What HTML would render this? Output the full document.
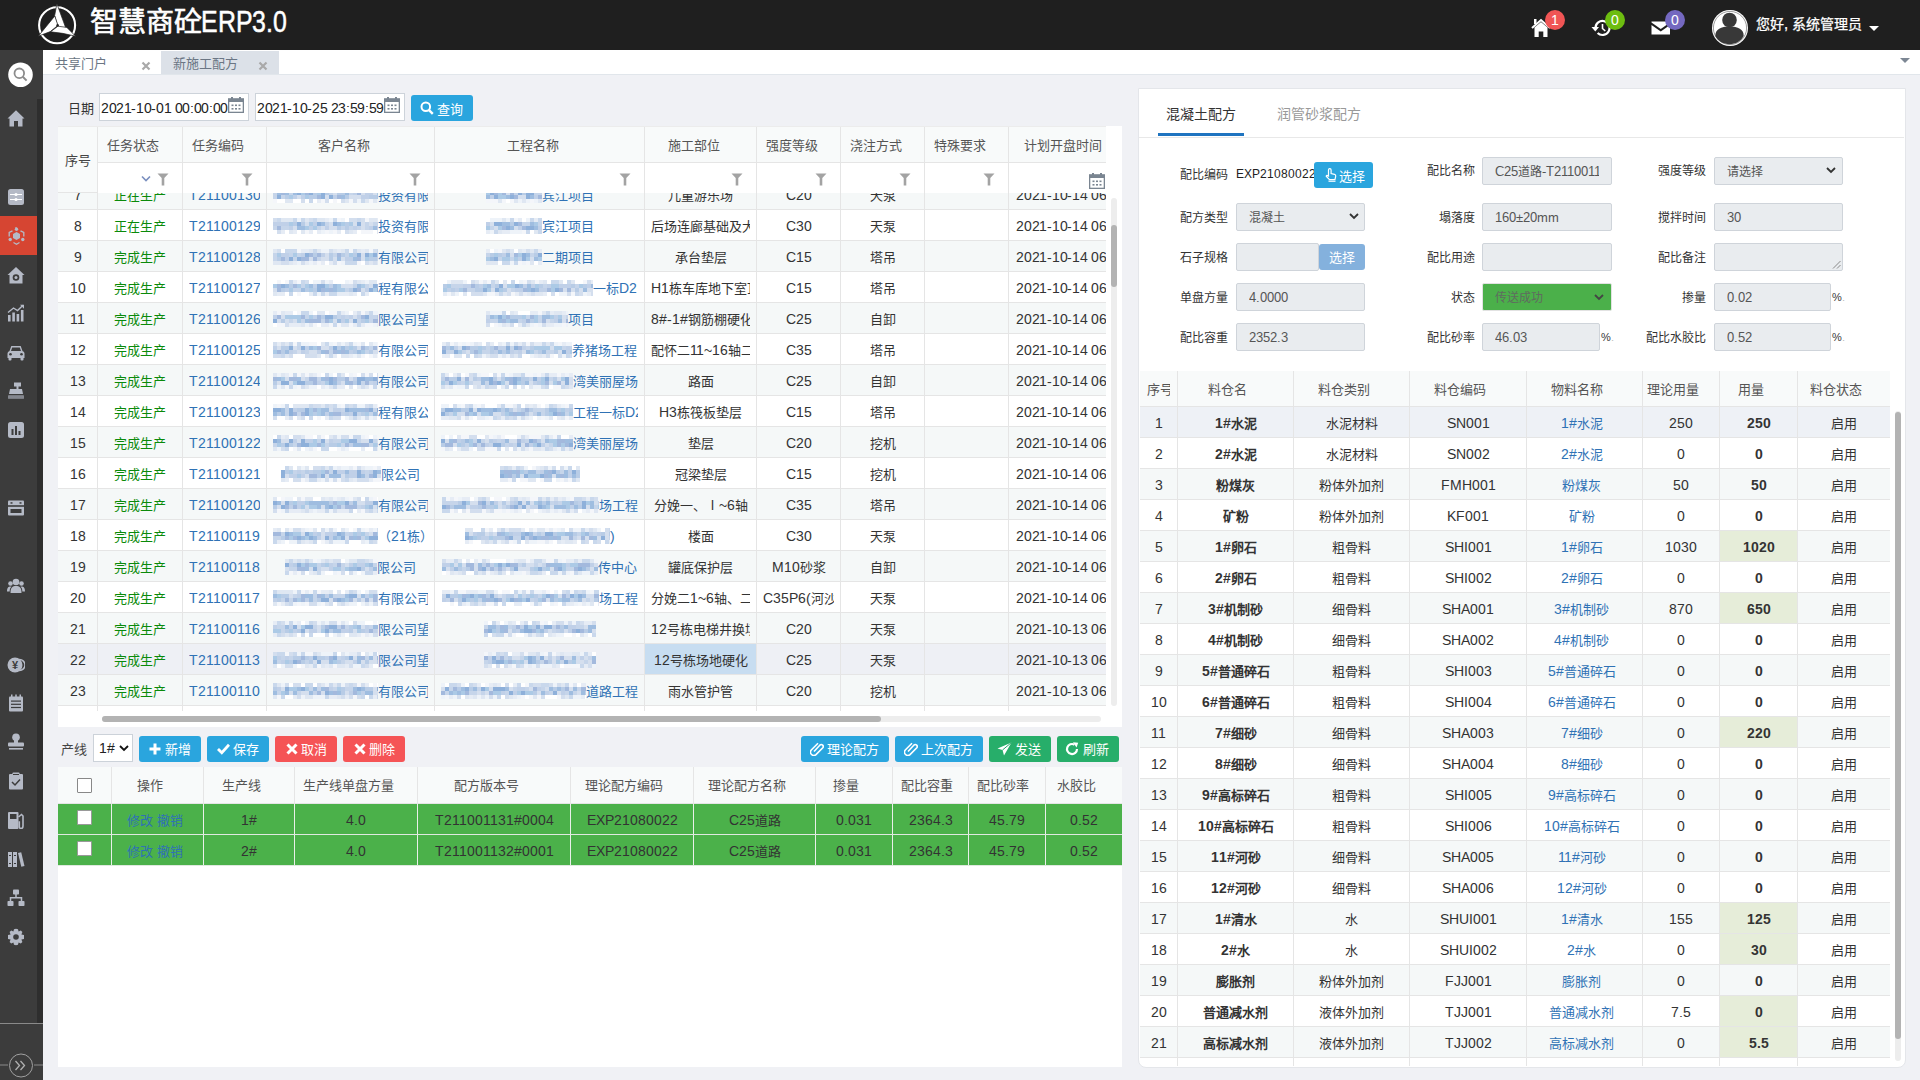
<!DOCTYPE html><html lang="zh-CN"><head><meta charset="utf-8"><title>ERP</title><style>
@font-face{font-family:"Liberation Sans";src:local("Liberation Sans"),local("LiberationSans");size-adjust:108%}
@font-face{font-family:"Liberation Sans";font-weight:bold;src:local("Liberation Sans Bold"),local("LiberationSans-Bold");size-adjust:108%}
*{box-sizing:border-box;margin:0;padding:0}
html,body{width:1920px;height:1080px;overflow:hidden}
body{position:relative;background:#f0f1f5;font-family:"Liberation Sans",sans-serif;font-size:13px;color:#333}
.a{position:absolute}
.hdr{left:0;top:0;width:1920px;height:50px;background:#1f1f1f}
.side{left:0;top:50px;width:43px;height:1030px;background:#3c3c3c}
.tabbar{left:43px;top:50px;width:1877px;height:25px;background:#fff;border-bottom:1px solid #e1e6eb}
.cell{position:absolute;top:0;height:100%;border-right:1px solid #e5e5e5;overflow:hidden;white-space:nowrap;text-align:center;padding:0 6px}
.row{position:absolute;left:0;border-bottom:1px solid #e5e5e5}
.ci{overflow:hidden;height:100%}
.g{color:#0a8a0a}
.b{color:#2f72b5}
.blur{display:inline-block;vertical-align:middle;height:16px;margin-top:-2px}
.btn{position:absolute;height:26px;border-radius:3px;color:#fff;font-size:13px;line-height:26px;text-align:center}
.inp{position:absolute;padding-right:12px;height:28px;background:#e9ecef;border:1px solid #cfd4da;border-radius:2px;color:#555;font-size:12px;line-height:28px;padding-left:12px;white-space:nowrap;overflow:hidden}
.lbl{position:absolute;font-size:12px;color:#333;text-align:right;white-space:nowrap;line-height:20px}
.ic{fill:#b5bac6}
</style></head><body>
<div class="a hdr"></div>
<svg class="a" style="left:30px;top:0px" width="60" height="50" viewBox="30 0 60 50">
<circle cx="57.1" cy="25.2" r="18" fill="none" stroke="#fff" stroke-width="2.1"/>
<path d="M56.9 3.8 L65.9 28.3 L58.2 27.3 L54.6 15.8 Z" fill="#fff" stroke="#1f1f1f" stroke-width="0.7"/>
<path d="M38.3 36.2 L54.8 16 L57.9 25.4 L50.3 31.6 Q45 33.6 38.3 36.2 Z" fill="#fff" stroke="#1f1f1f" stroke-width="0.7"/>
<path d="M75.6 36.2 L66.8 27.4 L57.9 26.2 L50.6 31.8 Q62.5 32.8 75.6 36.2 Z" fill="#fff" stroke="#1f1f1f" stroke-width="0.7"/>
<circle cx="57.6" cy="25.3" r="1.2" fill="#1f1f1f"/>
</svg>
<div class="a" style="left:90px;top:5px;font-size:28px;line-height:34px;color:#fff;white-space:nowrap;-webkit-text-stroke:0.6px #fff">智慧商砼</div>
<div class="a" style="left:201px;top:4.8px;font-size:28.7px;line-height:34px;color:#fff;white-space:nowrap;font-family:'Liberation Sans';transform:scaleX(0.803);transform-origin:0 0;-webkit-text-stroke:0.5px #fff">ERP3.0</div>
<svg class="a" style="left:1531px;top:18px" width="22" height="20" viewBox="0 0 22 20">
<path d="M1 10 L10 2 L19 10" fill="none" stroke="#fff" stroke-width="2"/>
<path d="M3.5 9.5 L10 4 L16.5 9.5 V19 H12.3 V13.5 H7.7 V19 H3.5 Z" fill="#fff"/>
<rect x="3" y="1" width="2.5" height="5" fill="#fff"/>
</svg>
<div class="a" style="left:1545px;top:10px;width:20px;height:20px;border-radius:10px;background:#f05555;color:#fff;font-size:13px;line-height:20px;text-align:center">1</div>
<svg class="a" style="left:1591px;top:19px" width="20" height="18" viewBox="0 0 20 18">
<path d="M4.5 9 A7 7 0 1 1 6.6 14" fill="none" stroke="#fff" stroke-width="2.2"/>
<path d="M0.5 8 L8 8 L4.3 12.5 Z" fill="#fff"/>
<path d="M11.5 5 V9.5 L14.3 12" fill="none" stroke="#fff" stroke-width="1.6"/>
</svg>
<div class="a" style="left:1605px;top:10px;width:20px;height:20px;border-radius:10px;background:#6dbd10;color:#fff;font-size:13px;line-height:20px;text-align:center">0</div>
<svg class="a" style="left:1651px;top:21px" width="20" height="14" viewBox="0 0 20 14">
<path d="M0.5 0.5 H19 V1.5 L9.75 8 L0.5 1.5 Z" fill="#fff"/>
<path d="M0.5 4 L9.75 10.5 L19 4 V13.5 H0.5 Z" fill="#fff"/>
</svg>
<div class="a" style="left:1665px;top:10px;width:20px;height:20px;border-radius:10px;background:#7468c0;color:#fff;font-size:13px;line-height:20px;text-align:center">0</div>
<svg class="a" style="left:1711px;top:9px" width="38" height="38" viewBox="0 0 38 38">
<circle cx="19" cy="19" r="18" fill="#fff"/>
<circle cx="19" cy="19" r="16.6" fill="none" stroke="#3a3a3a" stroke-width="0.5"/>
<circle cx="18.5" cy="11" r="7.3" fill="#383838"/>
<path d="M4.3 27 C4.3 20 10 17.5 18.5 17.5 C27 17.5 32.7 20 32.7 27 C30 32 25 35.2 18.5 35.2 C12 35.2 7 32 4.3 27 Z" fill="#383838"/>
</svg>
<div class="a" style="left:1756px;top:14px;font-size:14px;line-height:20px;color:#fff;white-space:nowrap;-webkit-text-stroke:0.25px #fff">您好, 系统管理员</div>
<div class="a" style="left:1869px;top:26px;width:0;height:0;border-left:5.5px solid transparent;border-right:5.5px solid transparent;border-top:5.5px solid #fff"></div>
<div class="a side"></div>
<div class="a" style="left:37px;top:99px;width:6px;height:924px;background:#2e2e2e"></div>
<div class="a" style="left:0;top:1023px;width:43px;height:1px;background:#8a8a8a"></div>
<div class="a" style="left:0;top:216px;width:37px;height:39px;background:#d64532"></div>
<svg class="a" style="left:8px;top:62px" width="26" height="26" viewBox="0 0 26 26">
<circle cx="12.5" cy="12.7" r="12.3" fill="#fff"/>
<circle cx="11.3" cy="11.3" r="4.8" fill="none" stroke="#8c8c8c" stroke-width="1.8"/>
<path d="M14.8 14.8 L18.6 18.6" stroke="#8c8c8c" stroke-width="2"/>
</svg>
<svg class="a" style="left:7px;top:109px" width="18" height="18" viewBox="0 0 18 18"><path d="M0.5 9.5 L9 1.3 L17.5 9.5 L15.5 9.5 V17.5 H11 V12 H7 V17.5 H2.5 V9.5 Z" fill="#b5bac6"/></svg>
<svg class="a" style="left:7px;top:189px" width="18" height="18" viewBox="0 0 18 18"><rect x="1" y="0" width="16" height="16" rx="2.5" fill="#b5bac6"/><rect x="3" y="5" width="12" height="1" fill="#fff"/><rect x="3" y="10" width="12" height="1" fill="#fff"/><circle cx="9" cy="5.5" r="1.6" fill="#fff"/><circle cx="9" cy="10.5" r="1.6" fill="#fff"/></svg>
<svg class="a" style="left:8px;top:227px" width="18" height="18" viewBox="0 0 18 18"><path d="M8 0.8 A1.5 1.5 0 1 1 8.01 0.8Z" fill="#b5bac6"/><circle cx="8.5" cy="2.2" r="1.7" fill="#b5bac6"/><circle cx="2.2" cy="12.5" r="1.7" fill="#b5bac6"/><circle cx="14.8" cy="12.5" r="1.7" fill="#b5bac6"/><path d="M8.5 5 L12 7 V11 L8.5 13 L5 11 V7 Z" fill="#b5bac6"/><path d="M4.5 3.8 L1.2 5.5 V9.5 M12.5 3.8 L15.8 5.5 V9.5 M5.5 15.5 L8.5 17.2 L11.5 15.5" fill="none" stroke="#b5bac6" stroke-width="1.3"/></svg>
<svg class="a" style="left:7px;top:266px" width="18" height="18" viewBox="0 0 18 18"><path d="M0.5 9 L9 1 L17.5 9 H15.5 V17.5 H2.5 V9 Z" fill="#b5bac6"/><circle cx="9" cy="11.5" r="3.3" fill="#3c3c3c"/><circle cx="9" cy="11.5" r="1.5" fill="#b5bac6"/></svg>
<svg class="a" style="left:7px;top:304px" width="18" height="18" viewBox="0 0 18 18"><rect x="1" y="11" width="2.6" height="6.5" fill="#b5bac6"/><rect x="5.3" y="8.5" width="2.6" height="9" fill="#b5bac6"/><rect x="9.6" y="10" width="2.6" height="7.5" fill="#b5bac6"/><rect x="13.9" y="6" width="2.6" height="11.5" fill="#b5bac6"/><path d="M1 8.5 L6.5 4 L10.5 6.5 L16 1.2" fill="none" stroke="#b5bac6" stroke-width="1.4"/><path d="M13 0.8 H17 V4.8 Z" fill="#b5bac6"/></svg>
<svg class="a" style="left:7px;top:344px" width="18" height="18" viewBox="0 0 18 18"><path d="M2.5 7 L4.3 2 H13.7 L15.5 7 Q17.5 7.5 17.5 9.5 V14 H0.5 V9.5 Q0.5 7.5 2.5 7Z" fill="#b5bac6"/><rect x="1.5" y="13" width="3" height="3.5" rx="1" fill="#b5bac6"/><rect x="13.5" y="13" width="3" height="3.5" rx="1" fill="#b5bac6"/><path d="M4 7 L5.2 3.5 H12.8 L14 7Z" fill="#3c3c3c"/><circle cx="3.5" cy="10.3" r="1.3" fill="#3c3c3c"/><circle cx="14.5" cy="10.3" r="1.3" fill="#3c3c3c"/></svg>
<svg class="a" style="left:7px;top:382px" width="18" height="18" viewBox="0 0 18 18"><rect x="7" y="0.5" width="7" height="4" fill="#b5bac6"/><rect x="9.5" y="4" width="2" height="3" fill="#b5bac6"/><path d="M3 7 H15 L16 12 H2 Z" fill="#b5bac6"/><rect x="1" y="13.5" width="16" height="3" rx="0.5" fill="#b5bac6"/><rect x="1" y="14.6" width="16" height="0.8" fill="#3c3c3c"/></svg>
<svg class="a" style="left:7px;top:421px" width="18" height="18" viewBox="0 0 18 18"><rect x="1" y="1" width="16" height="16" rx="2.5" fill="#b5bac6"/><rect x="4.5" y="8" width="2" height="6" fill="#3c3c3c"/><rect x="8" y="5" width="2" height="9" fill="#3c3c3c"/><rect x="11.5" y="10" width="2" height="4" fill="#3c3c3c"/></svg>
<svg class="a" style="left:7px;top:499px" width="18" height="18" viewBox="0 0 18 18"><rect x="1" y="1.5" width="16" height="15" rx="1" fill="#b5bac6"/><rect x="1" y="6.2" width="16" height="1.6" fill="#3c3c3c"/><rect x="3.5" y="3.2" width="2" height="1.5" fill="#3c3c3c"/><rect x="12.5" y="3.2" width="2" height="1.5" fill="#3c3c3c"/><rect x="3.5" y="10" width="11" height="4" fill="#3c3c3c"/></svg>
<svg class="a" style="left:7px;top:577px" width="18" height="18" viewBox="0 0 18 18"><circle cx="9" cy="5" r="3.3" fill="#b5bac6"/><path d="M3.5 16 C3.5 10.5 5.5 9 9 9 C12.5 9 14.5 10.5 14.5 16 Z" fill="#b5bac6"/><circle cx="3.5" cy="6.5" r="2.3" fill="#b5bac6"/><circle cx="14.5" cy="6.5" r="2.3" fill="#b5bac6"/><path d="M0 14.5 C0 10.5 1.5 9.5 3.5 9.5 L4.5 9.8 C3 11 2.7 12.5 2.7 14.5Z M18 14.5 C18 10.5 16.5 9.5 14.5 9.5 L13.5 9.8 C15 11 15.3 12.5 15.3 14.5Z" fill="#b5bac6"/></svg>
<svg class="a" style="left:7px;top:656px" width="18" height="18" viewBox="0 0 18 18"><circle cx="12.5" cy="9" r="5.5" fill="none" stroke="#b5bac6" stroke-width="1.5"/><circle cx="8" cy="9" r="7.5" fill="#b5bac6"/><text x="8" y="12.6" font-size="10" text-anchor="middle" fill="#3c3c3c" font-family="Liberation Sans" font-weight="bold">¥</text></svg>
<svg class="a" style="left:7px;top:694px" width="18" height="18" viewBox="0 0 18 18"><rect x="2" y="2.5" width="14" height="15" rx="1" fill="#b5bac6"/><rect x="4" y="0.5" width="1.5" height="3.5" fill="#b5bac6"/><rect x="8.25" y="0.5" width="1.5" height="3.5" fill="#b5bac6"/><rect x="12.5" y="0.5" width="1.5" height="3.5" fill="#b5bac6"/><rect x="4" y="6.5" width="10" height="1.2" fill="#3c3c3c"/><rect x="4" y="9.7" width="10" height="1.2" fill="#3c3c3c"/><rect x="4" y="12.9" width="10" height="1.2" fill="#3c3c3c"/></svg>
<svg class="a" style="left:7px;top:733px" width="18" height="18" viewBox="0 0 18 18"><circle cx="9" cy="4.3" r="3.8" fill="#b5bac6"/><rect x="7" y="6" width="4" height="4" fill="#b5bac6"/><rect x="1" y="9.5" width="16" height="4" rx="1" fill="#b5bac6"/><rect x="2" y="15" width="14" height="1.6" fill="#b5bac6"/></svg>
<svg class="a" style="left:7px;top:772px" width="18" height="18" viewBox="0 0 18 18"><rect x="2" y="2" width="14" height="15.5" rx="1" fill="#b5bac6"/><rect x="5.5" y="0.5" width="7" height="3.5" rx="0.8" fill="#b5bac6"/><rect x="6" y="2" width="6" height="1" fill="#3c3c3c"/><path d="M5 10 L8 13 L13 7.5" fill="none" stroke="#3c3c3c" stroke-width="1.5"/></svg>
<svg class="a" style="left:7px;top:811px" width="18" height="18" viewBox="0 0 18 18"><rect x="1" y="1" width="10.5" height="17" rx="1" fill="#b5bac6"/><rect x="3" y="3" width="6.5" height="5" fill="#3c3c3c"/><path d="M11.5 6 L14.5 3.5 L16 5 V15 Q16 17.5 14 17.5 Q12.3 17.5 12.3 15.5 V11 H11.5" fill="none" stroke="#b5bac6" stroke-width="1.6"/></svg>
<svg class="a" style="left:7px;top:850px" width="18" height="18" viewBox="0 0 18 18"><rect x="1" y="2" width="4" height="15" fill="#b5bac6"/><rect x="6" y="2" width="4" height="15" fill="#b5bac6"/><path d="M11 3 L14.2 2.2 L17.5 16 L14.3 16.8 Z" fill="#b5bac6"/><rect x="2" y="5" width="2" height="1" fill="#3c3c3c"/><rect x="7" y="5" width="2" height="1" fill="#3c3c3c"/><rect x="2" y="13" width="2" height="1" fill="#3c3c3c"/><rect x="7" y="13" width="2" height="1" fill="#3c3c3c"/></svg>
<svg class="a" style="left:7px;top:889px" width="18" height="18" viewBox="0 0 18 18"><rect x="6" y="0.5" width="6" height="5" rx="0.8" fill="#b5bac6"/><rect x="0.5" y="12" width="6" height="5" rx="0.8" fill="#b5bac6"/><rect x="11.5" y="12" width="6" height="5" rx="0.8" fill="#b5bac6"/><path d="M9 5 V8.7 M3.5 12 V8.7 H14.5 V12" fill="none" stroke="#b5bac6" stroke-width="1.5"/></svg>
<svg class="a" style="left:7px;top:928px" width="18" height="18" viewBox="0 0 18 18"><path d="M9 0.8 L11 1.2 L11.6 3.6 L13.8 2.5 L15.4 4 L14.4 6.4 L17 7 V11 L14.4 11.6 L15.4 14 L13.8 15.5 L11.6 14.4 L11 16.8 L9 17.2 L7 16.8 L6.4 14.4 L4.2 15.5 L2.6 14 L3.6 11.6 L1 11 V7 L3.6 6.4 L2.6 4 L4.2 2.5 L6.4 3.6 L7 1.2Z" fill="#b5bac6"/><circle cx="9" cy="9" r="2.8" fill="#3c3c3c"/></svg>
<svg class="a" style="left:0px;top:1050px" width="43" height="30" viewBox="0 0 43 30">
<path d="M0 15 H8 M34 15 H43" stroke="#8a8a8a" stroke-width="1"/>
<circle cx="21" cy="15.5" r="11.5" fill="none" stroke="#a0a0a0" stroke-width="1"/>
<path d="M15.5 11 L19.5 15.5 L15.5 20 M20.5 11 L24.5 15.5 L20.5 20" fill="none" stroke="#b0b0b0" stroke-width="1.3"/>
</svg>
<div class="a tabbar"></div>
<div class="a" style="left:161px;top:51px;width:118px;height:23px;background:#dce1e8"></div>
<div class="a" style="left:55px;top:53px;font-size:13px;line-height:20px;color:#6b7684">共享门户</div>
<div class="a" style="left:173px;top:53px;font-size:13px;line-height:20px;color:#6b7684">新施工配方</div>
<svg class="a" style="left:141px;top:61px" width="10" height="10" viewBox="0 0 10 10"><path d="M1.5 1.5 L8.5 8.5 M8.5 1.5 L1.5 8.5" stroke="#a9a9a9" stroke-width="2.2"/></svg>
<svg class="a" style="left:258px;top:61px" width="10" height="10" viewBox="0 0 10 10"><path d="M1.5 1.5 L8.5 8.5 M8.5 1.5 L1.5 8.5" stroke="#a9a9a9" stroke-width="2.2"/></svg>
<div class="a" style="left:1900px;top:58px;width:0;height:0;border-left:5px solid transparent;border-right:5px solid transparent;border-top:5px solid #7d8794"></div>
<div class="a" style="left:68px;top:98px;font-size:13px;line-height:20px;color:#333">日期</div>
<div class="a" style="left:99px;top:93px;width:150px;height:28px;background:#fff;border:1px solid #cdd3da"></div>
<div class="a" style="left:101px;top:98px;font-size:13px;line-height:20px;color:#222;white-space:nowrap;letter-spacing:-0.38px">2021-10-01 00:00:00</div>
<svg class="a" style="left:228px;top:97px" width="16" height="16" viewBox="0 0 16 16"><rect x="0.5" y="2" width="15" height="13.5" fill="none" stroke="#7a8591" stroke-width="1.6"/><rect x="0.5" y="2" width="15" height="3" fill="#7a8591"/><rect x="3" y="0" width="2" height="3" fill="#7a8591"/><rect x="11" y="0" width="2" height="3" fill="#7a8591"/><rect x="3.5" y="7.5" width="2" height="1.6" fill="#7a8591"/><rect x="7" y="7.5" width="2" height="1.6" fill="#7a8591"/><rect x="10.5" y="7.5" width="2" height="1.6" fill="#7a8591"/><rect x="3.5" y="11" width="2" height="1.6" fill="#7a8591"/><rect x="7" y="11" width="2" height="1.6" fill="#7a8591"/><rect x="10.5" y="11" width="2" height="1.6" fill="#7a8591"/></svg>
<div class="a" style="left:255px;top:93px;width:150px;height:28px;background:#fff;border:1px solid #cdd3da"></div>
<div class="a" style="left:257px;top:98px;font-size:13px;line-height:20px;color:#222;white-space:nowrap;letter-spacing:-0.38px">2021-10-25 23:59:59</div>
<svg class="a" style="left:384px;top:97px" width="16" height="16" viewBox="0 0 16 16"><rect x="0.5" y="2" width="15" height="13.5" fill="none" stroke="#7a8591" stroke-width="1.6"/><rect x="0.5" y="2" width="15" height="3" fill="#7a8591"/><rect x="3" y="0" width="2" height="3" fill="#7a8591"/><rect x="11" y="0" width="2" height="3" fill="#7a8591"/><rect x="3.5" y="7.5" width="2" height="1.6" fill="#7a8591"/><rect x="7" y="7.5" width="2" height="1.6" fill="#7a8591"/><rect x="10.5" y="7.5" width="2" height="1.6" fill="#7a8591"/><rect x="3.5" y="11" width="2" height="1.6" fill="#7a8591"/><rect x="7" y="11" width="2" height="1.6" fill="#7a8591"/><rect x="10.5" y="11" width="2" height="1.6" fill="#7a8591"/></svg>
<div class="btn" style="left:411px;top:95px;width:62px;background:#2aa5de"><svg style="position:absolute;left:9px;top:6px" width="14" height="14" viewBox="0 0 14 14"><circle cx="5.8" cy="5.8" r="4.3" fill="none" stroke="#fff" stroke-width="2"/><path d="M8.8 8.8 L12.8 12.8" stroke="#fff" stroke-width="2.4"/></svg><span style="position:absolute;left:26px;top:1px">查询</span></div>
<div class="a" style="left:58px;top:126px;width:1064px;height:601px;background:#fff"></div>
<div class="a" style="left:58px;top:126px;width:1048px;height:67px;overflow:hidden;background:#fff;border-top:1px solid #ececec">
<div class="cell" style="left:0px;width:40px;background:#f8fafa;border-bottom:1px solid #e5e5e5;line-height:66px;color:#444;padding:0">序号</div>
<div class="cell" style="left:40px;width:85px;height:36px;background:#f8fafa;border-bottom:1px solid #e5e5e5;line-height:36px;color:#555;padding:0 14px 0 0">任务状态</div>
<div class="cell" style="left:40px;width:85px;top:36px;height:31px;border-bottom:1px solid #e5e5e5"></div>
<svg class="a" style="left:99px;top:46px" width="12" height="13" viewBox="0 0 12 13"><path d="M0.5 0.5 H11.5 L7.3 5 V12.5 H4.7 V5 Z" fill="#a3a3a3"/></svg>
<svg class="a" style="left:83px;top:48px" width="10" height="8" viewBox="0 0 10 8"><path d="M1 1.5 L5 5.5 L9 1.5" fill="none" stroke="#7a8fbf" stroke-width="1.6"/></svg>
<div class="cell" style="left:125px;width:84px;height:36px;background:#f8fafa;border-bottom:1px solid #e5e5e5;line-height:36px;color:#555;padding:0 14px 0 0">任务编码</div>
<div class="cell" style="left:125px;width:84px;top:36px;height:31px;border-bottom:1px solid #e5e5e5"></div>
<svg class="a" style="left:183px;top:46px" width="12" height="13" viewBox="0 0 12 13"><path d="M0.5 0.5 H11.5 L7.3 5 V12.5 H4.7 V5 Z" fill="#a3a3a3"/></svg>
<div class="cell" style="left:209px;width:168px;height:36px;background:#f8fafa;border-bottom:1px solid #e5e5e5;line-height:36px;color:#555;padding:0 14px 0 0">客户名称</div>
<div class="cell" style="left:209px;width:168px;top:36px;height:31px;border-bottom:1px solid #e5e5e5"></div>
<svg class="a" style="left:351px;top:46px" width="12" height="13" viewBox="0 0 12 13"><path d="M0.5 0.5 H11.5 L7.3 5 V12.5 H4.7 V5 Z" fill="#a3a3a3"/></svg>
<div class="cell" style="left:377px;width:210px;height:36px;background:#f8fafa;border-bottom:1px solid #e5e5e5;line-height:36px;color:#555;padding:0 14px 0 0">工程名称</div>
<div class="cell" style="left:377px;width:210px;top:36px;height:31px;border-bottom:1px solid #e5e5e5"></div>
<svg class="a" style="left:561px;top:46px" width="12" height="13" viewBox="0 0 12 13"><path d="M0.5 0.5 H11.5 L7.3 5 V12.5 H4.7 V5 Z" fill="#a3a3a3"/></svg>
<div class="cell" style="left:587px;width:112px;height:36px;background:#f8fafa;border-bottom:1px solid #e5e5e5;line-height:36px;color:#555;padding:0 14px 0 0">施工部位</div>
<div class="cell" style="left:587px;width:112px;top:36px;height:31px;border-bottom:1px solid #e5e5e5"></div>
<svg class="a" style="left:673px;top:46px" width="12" height="13" viewBox="0 0 12 13"><path d="M0.5 0.5 H11.5 L7.3 5 V12.5 H4.7 V5 Z" fill="#a3a3a3"/></svg>
<div class="cell" style="left:699px;width:84px;height:36px;background:#f8fafa;border-bottom:1px solid #e5e5e5;line-height:36px;color:#555;padding:0 14px 0 0">强度等级</div>
<div class="cell" style="left:699px;width:84px;top:36px;height:31px;border-bottom:1px solid #e5e5e5"></div>
<svg class="a" style="left:757px;top:46px" width="12" height="13" viewBox="0 0 12 13"><path d="M0.5 0.5 H11.5 L7.3 5 V12.5 H4.7 V5 Z" fill="#a3a3a3"/></svg>
<div class="cell" style="left:783px;width:84px;height:36px;background:#f8fafa;border-bottom:1px solid #e5e5e5;line-height:36px;color:#555;padding:0 14px 0 0">浇注方式</div>
<div class="cell" style="left:783px;width:84px;top:36px;height:31px;border-bottom:1px solid #e5e5e5"></div>
<svg class="a" style="left:841px;top:46px" width="12" height="13" viewBox="0 0 12 13"><path d="M0.5 0.5 H11.5 L7.3 5 V12.5 H4.7 V5 Z" fill="#a3a3a3"/></svg>
<div class="cell" style="left:867px;width:84px;height:36px;background:#f8fafa;border-bottom:1px solid #e5e5e5;line-height:36px;color:#555;padding:0 14px 0 0">特殊要求</div>
<div class="cell" style="left:867px;width:84px;top:36px;height:31px;border-bottom:1px solid #e5e5e5"></div>
<svg class="a" style="left:925px;top:46px" width="12" height="13" viewBox="0 0 12 13"><path d="M0.5 0.5 H11.5 L7.3 5 V12.5 H4.7 V5 Z" fill="#a3a3a3"/></svg>
<div class="cell" style="left:951px;width:122px;height:36px;background:#f8fafa;border-bottom:1px solid #e5e5e5;line-height:36px;color:#555;padding:0 14px 0 0">计划开盘时间</div>
<div class="cell" style="left:951px;width:122px;top:36px;height:31px;border-bottom:1px solid #e5e5e5"></div>
<svg class="a" style="left:1031px;top:46px" width="16" height="16" viewBox="0 0 16 16"><rect x="0.5" y="2" width="15" height="13.5" fill="none" stroke="#7a8591" stroke-width="1.6"/><rect x="0.5" y="2" width="15" height="3" fill="#7a8591"/><rect x="3" y="0" width="2" height="3" fill="#7a8591"/><rect x="11" y="0" width="2" height="3" fill="#7a8591"/><rect x="3.5" y="7.5" width="2" height="1.6" fill="#7a8591"/><rect x="7" y="7.5" width="2" height="1.6" fill="#7a8591"/><rect x="10.5" y="7.5" width="2" height="1.6" fill="#7a8591"/><rect x="3.5" y="11" width="2" height="1.6" fill="#7a8591"/><rect x="7" y="11" width="2" height="1.6" fill="#7a8591"/><rect x="10.5" y="11" width="2" height="1.6" fill="#7a8591"/></svg>
</div>
<div class="a" style="left:58px;top:193px;width:1048px;height:518px;overflow:hidden">
<div class="row" style="top:-14px;width:1090px;height:31px;background:#f5f8f8;line-height:32px">
<div class="cell" style="left:0px;width:40px;padding:0"><div class="ci">7</div></div>
<div class="cell g" style="left:40px;width:85px;"><div class="ci">正在生产</div></div>
<div class="cell b" style="left:125px;width:84px;"><div class="ci">T21100130</div></div>
<div class="cell b" style="left:209px;width:168px;"><div class="ci"><span class="blur" style="width:105px;background:linear-gradient(90deg,#d3deee 0px 4px,#eef3f9 4px 8px,#f4f6fa 8px 12px,#ffffff 12px 16px,#dfe7f2 16px 20px,#dfe7f2 20px 24px,#e6ecf5 24px 28px,#c9d8ec 28px 32px,#dfe7f2 32px 36px,#d3deee 36px 40px,#c9d8ec 40px 44px,#dfe7f2 44px 48px,#c9d8ec 48px 52px,#eef3f9 52px 56px,#dfe7f2 56px 60px,#dfe7f2 60px 64px,#f4f6fa 64px 68px,#f4f6fa 68px 72px,#dfe7f2 72px 76px,#eef3f9 76px 80px,#dfe7f2 80px 84px,#c9d8ec 84px 88px,#f4f6fa 88px 92px,#dfe7f2 92px 96px,#e6ecf5 96px 100px,#c9d8ec 100px 104px,#dfe7f2 104px 105px),linear-gradient(90deg,#c6d5ea 0px 4px,#9fbde0 4px 8px,#a3b9dd 8px 12px,#9fbde0 12px 16px,#c6d5ea 16px 20px,#9fbde0 20px 24px,#8eb0da 24px 28px,#accae6 28px 32px,#a3b9dd 32px 36px,#8eb0da 36px 40px,#b8cce6 40px 44px,#accae6 44px 48px,#8eb0da 48px 52px,#b8cce6 52px 56px,#c6d5ea 56px 60px,#d5dfee 60px 64px,#b8cce6 64px 68px,#b8cce6 68px 72px,#9fbde0 72px 76px,#c6d5ea 76px 80px,#c0d0e8 80px 84px,#a3b9dd 84px 88px,#d5dfee 88px 92px,#c0d0e8 92px 96px,#c0d0e8 96px 100px,#d5dfee 100px 104px,#accae6 104px 105px),linear-gradient(90deg,#c6d5ea 0px 4px,#8eb0da 4px 8px,#c6d5ea 8px 12px,#b8cce6 12px 16px,#accae6 16px 20px,#c0d0e8 20px 24px,#d5dfee 24px 28px,#c0d0e8 28px 32px,#accae6 32px 36px,#b8cce6 36px 40px,#b8cce6 40px 44px,#a3b9dd 44px 48px,#8eb0da 48px 52px,#d5dfee 52px 56px,#8eb0da 56px 60px,#c0d0e8 60px 64px,#a3b9dd 64px 68px,#9fbde0 68px 72px,#b8cce6 72px 76px,#d5dfee 76px 80px,#d5dfee 80px 84px,#d5dfee 84px 88px,#c0d0e8 88px 92px,#c0d0e8 92px 96px,#b8cce6 96px 100px,#b8cce6 100px 104px,#accae6 104px 105px),linear-gradient(90deg,#f4f6fa 0px 4px,#ffffff 4px 8px,#ffffff 8px 12px,#dfe7f2 12px 16px,#dfe7f2 16px 20px,#ffffff 20px 24px,#ffffff 24px 28px,#d3deee 28px 32px,#ffffff 32px 36px,#c9d8ec 36px 40px,#ffffff 40px 44px,#e6ecf5 44px 48px,#f4f6fa 48px 52px,#d3deee 52px 56px,#ffffff 56px 60px,#f4f6fa 60px 64px,#ffffff 64px 68px,#d3deee 68px 72px,#dfe7f2 72px 76px,#f4f6fa 76px 80px,#d3deee 80px 84px,#eef3f9 84px 88px,#c9d8ec 88px 92px,#dfe7f2 92px 96px,#f4f6fa 96px 100px,#dfe7f2 100px 104px,#eef3f9 104px 105px);background-size:100% 4px;background-position:0 0,0 4px,0 8px,0 12px;background-repeat:no-repeat"></span>投资有限</div></div>
<div class="cell b" style="left:377px;width:210px;"><div class="ci"><span class="blur" style="width:56px;background:linear-gradient(90deg,#e6ecf5 0px 4px,#d3deee 4px 8px,#eef3f9 8px 12px,#ffffff 12px 16px,#eef3f9 16px 20px,#f4f6fa 20px 24px,#f4f6fa 24px 28px,#e6ecf5 28px 32px,#f4f6fa 32px 36px,#dfe7f2 36px 40px,#eef3f9 40px 44px,#f4f6fa 44px 48px,#f4f6fa 48px 52px,#c9d8ec 52px 56px),linear-gradient(90deg,#accae6 0px 4px,#8eb0da 4px 8px,#a3b9dd 8px 12px,#accae6 12px 16px,#a3b9dd 16px 20px,#d5dfee 20px 24px,#a3b9dd 24px 28px,#c6d5ea 28px 32px,#8eb0da 32px 36px,#b8cce6 36px 40px,#8eb0da 40px 44px,#8eb0da 44px 48px,#c6d5ea 48px 52px,#c6d5ea 52px 56px),linear-gradient(90deg,#9fbde0 0px 4px,#c0d0e8 4px 8px,#8eb0da 8px 12px,#accae6 12px 16px,#accae6 16px 20px,#9fbde0 20px 24px,#8eb0da 24px 28px,#a3b9dd 28px 32px,#d5dfee 32px 36px,#d5dfee 36px 40px,#8eb0da 40px 44px,#9fbde0 44px 48px,#c0d0e8 48px 52px,#a3b9dd 52px 56px),linear-gradient(90deg,#f4f6fa 0px 4px,#f4f6fa 4px 8px,#f4f6fa 8px 12px,#dfe7f2 12px 16px,#f4f6fa 16px 20px,#ffffff 20px 24px,#f4f6fa 24px 28px,#dfe7f2 28px 32px,#eef3f9 32px 36px,#dfe7f2 36px 40px,#eef3f9 40px 44px,#f4f6fa 44px 48px,#eef3f9 48px 52px,#dfe7f2 52px 56px);background-size:100% 4px;background-position:0 0,0 4px,0 8px,0 12px;background-repeat:no-repeat"></span>宾江项目</div></div>
<div class="cell" style="left:587px;width:112px;"><div class="ci">儿童游乐场</div></div>
<div class="cell" style="left:699px;width:84px;"><div class="ci">C20</div></div>
<div class="cell" style="left:783px;width:84px;"><div class="ci">天泵</div></div>
<div class="cell" style="left:867px;width:84px;"><div class="ci"></div></div>
<div class="cell" style="left:951px;width:122px;text-align:left;padding-left:7px;letter-spacing:-0.25px"><div class="ci">2021-10-14 06</div></div>
</div>
<div class="row" style="top:17px;width:1090px;height:31px;background:#fff;line-height:32px">
<div class="cell" style="left:0px;width:40px;padding:0"><div class="ci">8</div></div>
<div class="cell g" style="left:40px;width:85px;"><div class="ci">正在生产</div></div>
<div class="cell b" style="left:125px;width:84px;"><div class="ci">T21100129</div></div>
<div class="cell b" style="left:209px;width:168px;"><div class="ci"><span class="blur" style="width:105px;background:linear-gradient(90deg,#d3deee 0px 4px,#c9d8ec 4px 8px,#dfe7f2 8px 12px,#dfe7f2 12px 16px,#dfe7f2 16px 20px,#c9d8ec 20px 24px,#eef3f9 24px 28px,#c9d8ec 28px 32px,#dfe7f2 32px 36px,#d3deee 36px 40px,#c9d8ec 40px 44px,#dfe7f2 44px 48px,#dfe7f2 48px 52px,#e6ecf5 52px 56px,#eef3f9 56px 60px,#c9d8ec 60px 64px,#f4f6fa 64px 68px,#eef3f9 68px 72px,#ffffff 72px 76px,#d3deee 76px 80px,#d3deee 80px 84px,#c9d8ec 84px 88px,#d3deee 88px 92px,#f4f6fa 92px 96px,#dfe7f2 96px 100px,#dfe7f2 100px 104px,#e6ecf5 104px 105px),linear-gradient(90deg,#c0d0e8 0px 4px,#c0d0e8 4px 8px,#c0d0e8 8px 12px,#c0d0e8 12px 16px,#accae6 16px 20px,#b8cce6 20px 24px,#8eb0da 24px 28px,#b8cce6 28px 32px,#d5dfee 32px 36px,#accae6 36px 40px,#c0d0e8 40px 44px,#8eb0da 44px 48px,#9fbde0 48px 52px,#c6d5ea 52px 56px,#d5dfee 56px 60px,#8eb0da 60px 64px,#9fbde0 64px 68px,#accae6 68px 72px,#b8cce6 72px 76px,#accae6 76px 80px,#d5dfee 80px 84px,#8eb0da 84px 88px,#d5dfee 88px 92px,#c6d5ea 92px 96px,#d5dfee 96px 100px,#c6d5ea 100px 104px,#c6d5ea 104px 105px),linear-gradient(90deg,#c6d5ea 0px 4px,#a3b9dd 4px 8px,#c6d5ea 8px 12px,#c6d5ea 12px 16px,#c0d0e8 16px 20px,#d5dfee 20px 24px,#9fbde0 24px 28px,#9fbde0 28px 32px,#accae6 32px 36px,#c0d0e8 36px 40px,#accae6 40px 44px,#c6d5ea 44px 48px,#d5dfee 48px 52px,#c0d0e8 52px 56px,#d5dfee 56px 60px,#d5dfee 60px 64px,#b8cce6 64px 68px,#c6d5ea 68px 72px,#b8cce6 72px 76px,#c6d5ea 76px 80px,#c0d0e8 80px 84px,#c6d5ea 84px 88px,#d5dfee 88px 92px,#c6d5ea 92px 96px,#c0d0e8 96px 100px,#9fbde0 100px 104px,#c0d0e8 104px 105px),linear-gradient(90deg,#ffffff 0px 4px,#d3deee 4px 8px,#e6ecf5 8px 12px,#ffffff 12px 16px,#dfe7f2 16px 20px,#e6ecf5 20px 24px,#ffffff 24px 28px,#dfe7f2 28px 32px,#f4f6fa 32px 36px,#e6ecf5 36px 40px,#ffffff 40px 44px,#e6ecf5 44px 48px,#eef3f9 48px 52px,#f4f6fa 52px 56px,#eef3f9 56px 60px,#f4f6fa 60px 64px,#e6ecf5 64px 68px,#ffffff 68px 72px,#d3deee 72px 76px,#dfe7f2 76px 80px,#e6ecf5 80px 84px,#ffffff 84px 88px,#f4f6fa 88px 92px,#f4f6fa 92px 96px,#f4f6fa 96px 100px,#ffffff 100px 104px,#dfe7f2 104px 105px);background-size:100% 4px;background-position:0 0,0 4px,0 8px,0 12px;background-repeat:no-repeat"></span>投资有限</div></div>
<div class="cell b" style="left:377px;width:210px;"><div class="ci"><span class="blur" style="width:56px;background:linear-gradient(90deg,#ffffff 0px 4px,#eef3f9 4px 8px,#eef3f9 8px 12px,#eef3f9 12px 16px,#dfe7f2 16px 20px,#eef3f9 20px 24px,#c9d8ec 24px 28px,#f4f6fa 28px 32px,#e6ecf5 32px 36px,#ffffff 36px 40px,#eef3f9 40px 44px,#c9d8ec 44px 48px,#e6ecf5 48px 52px,#c9d8ec 52px 56px),linear-gradient(90deg,#c0d0e8 0px 4px,#d5dfee 4px 8px,#8eb0da 8px 12px,#8eb0da 12px 16px,#9fbde0 16px 20px,#9fbde0 20px 24px,#b8cce6 24px 28px,#8eb0da 28px 32px,#a3b9dd 32px 36px,#c6d5ea 36px 40px,#c6d5ea 40px 44px,#9fbde0 44px 48px,#accae6 48px 52px,#c6d5ea 52px 56px),linear-gradient(90deg,#accae6 0px 4px,#c6d5ea 4px 8px,#d5dfee 8px 12px,#accae6 12px 16px,#a3b9dd 16px 20px,#8eb0da 20px 24px,#9fbde0 24px 28px,#d5dfee 28px 32px,#c0d0e8 32px 36px,#a3b9dd 36px 40px,#8eb0da 40px 44px,#8eb0da 44px 48px,#9fbde0 48px 52px,#c0d0e8 52px 56px),linear-gradient(90deg,#e6ecf5 0px 4px,#eef3f9 4px 8px,#c9d8ec 8px 12px,#dfe7f2 12px 16px,#e6ecf5 16px 20px,#e6ecf5 20px 24px,#eef3f9 24px 28px,#eef3f9 28px 32px,#eef3f9 32px 36px,#f4f6fa 36px 40px,#c9d8ec 40px 44px,#ffffff 44px 48px,#dfe7f2 48px 52px,#c9d8ec 52px 56px);background-size:100% 4px;background-position:0 0,0 4px,0 8px,0 12px;background-repeat:no-repeat"></span>宾江项目</div></div>
<div class="cell" style="left:587px;width:112px;"><div class="ci">后场连廊基础及大</div></div>
<div class="cell" style="left:699px;width:84px;"><div class="ci">C30</div></div>
<div class="cell" style="left:783px;width:84px;"><div class="ci">天泵</div></div>
<div class="cell" style="left:867px;width:84px;"><div class="ci"></div></div>
<div class="cell" style="left:951px;width:122px;text-align:left;padding-left:7px;letter-spacing:-0.25px"><div class="ci">2021-10-14 06</div></div>
</div>
<div class="row" style="top:48px;width:1090px;height:31px;background:#f5f8f8;line-height:32px">
<div class="cell" style="left:0px;width:40px;padding:0"><div class="ci">9</div></div>
<div class="cell g" style="left:40px;width:85px;"><div class="ci">完成生产</div></div>
<div class="cell b" style="left:125px;width:84px;"><div class="ci">T21100128</div></div>
<div class="cell b" style="left:209px;width:168px;"><div class="ci"><span class="blur" style="width:105px;background:linear-gradient(90deg,#dfe7f2 0px 4px,#d3deee 4px 8px,#ffffff 8px 12px,#c9d8ec 12px 16px,#c9d8ec 16px 20px,#c9d8ec 20px 24px,#f4f6fa 24px 28px,#e6ecf5 28px 32px,#e6ecf5 32px 36px,#dfe7f2 36px 40px,#c9d8ec 40px 44px,#dfe7f2 44px 48px,#eef3f9 48px 52px,#eef3f9 52px 56px,#d3deee 56px 60px,#dfe7f2 60px 64px,#e6ecf5 64px 68px,#dfe7f2 68px 72px,#c9d8ec 72px 76px,#f4f6fa 76px 80px,#c9d8ec 80px 84px,#dfe7f2 84px 88px,#e6ecf5 88px 92px,#dfe7f2 92px 96px,#f4f6fa 96px 100px,#d3deee 100px 104px,#c9d8ec 104px 105px),linear-gradient(90deg,#c6d5ea 0px 4px,#accae6 4px 8px,#c0d0e8 8px 12px,#c0d0e8 12px 16px,#c6d5ea 16px 20px,#accae6 20px 24px,#c6d5ea 24px 28px,#c0d0e8 28px 32px,#8eb0da 32px 36px,#a3b9dd 36px 40px,#b8cce6 40px 44px,#a3b9dd 44px 48px,#c0d0e8 48px 52px,#d5dfee 52px 56px,#b8cce6 56px 60px,#c6d5ea 60px 64px,#a3b9dd 64px 68px,#b8cce6 68px 72px,#c6d5ea 72px 76px,#accae6 76px 80px,#b8cce6 80px 84px,#8eb0da 84px 88px,#d5dfee 88px 92px,#8eb0da 92px 96px,#accae6 96px 100px,#8eb0da 100px 104px,#c0d0e8 104px 105px),linear-gradient(90deg,#c6d5ea 0px 4px,#b8cce6 4px 8px,#a3b9dd 8px 12px,#c0d0e8 12px 16px,#8eb0da 16px 20px,#c6d5ea 20px 24px,#8eb0da 24px 28px,#a3b9dd 28px 32px,#a3b9dd 32px 36px,#d5dfee 36px 40px,#a3b9dd 40px 44px,#c6d5ea 44px 48px,#d5dfee 48px 52px,#d5dfee 52px 56px,#b8cce6 56px 60px,#d5dfee 60px 64px,#9fbde0 64px 68px,#d5dfee 68px 72px,#c0d0e8 72px 76px,#c0d0e8 76px 80px,#9fbde0 80px 84px,#a3b9dd 84px 88px,#d5dfee 88px 92px,#accae6 92px 96px,#b8cce6 96px 100px,#b8cce6 100px 104px,#c6d5ea 104px 105px),linear-gradient(90deg,#dfe7f2 0px 4px,#dfe7f2 4px 8px,#d3deee 8px 12px,#d3deee 12px 16px,#dfe7f2 16px 20px,#e6ecf5 20px 24px,#eef3f9 24px 28px,#d3deee 28px 32px,#e6ecf5 32px 36px,#eef3f9 36px 40px,#e6ecf5 40px 44px,#f4f6fa 44px 48px,#e6ecf5 48px 52px,#ffffff 52px 56px,#e6ecf5 56px 60px,#d3deee 60px 64px,#f4f6fa 64px 68px,#eef3f9 68px 72px,#c9d8ec 72px 76px,#c9d8ec 76px 80px,#c9d8ec 80px 84px,#f4f6fa 84px 88px,#ffffff 88px 92px,#d3deee 92px 96px,#dfe7f2 96px 100px,#d3deee 100px 104px,#dfe7f2 104px 105px);background-size:100% 4px;background-position:0 0,0 4px,0 8px,0 12px;background-repeat:no-repeat"></span>有限公司</div></div>
<div class="cell b" style="left:377px;width:210px;"><div class="ci"><span class="blur" style="width:56px;background:linear-gradient(90deg,#e6ecf5 0px 4px,#ffffff 4px 8px,#eef3f9 8px 12px,#f4f6fa 12px 16px,#dfe7f2 16px 20px,#d3deee 20px 24px,#dfe7f2 24px 28px,#ffffff 28px 32px,#dfe7f2 32px 36px,#e6ecf5 36px 40px,#d3deee 40px 44px,#dfe7f2 44px 48px,#c9d8ec 48px 52px,#e6ecf5 52px 56px),linear-gradient(90deg,#c6d5ea 0px 4px,#b8cce6 4px 8px,#accae6 8px 12px,#b8cce6 12px 16px,#c0d0e8 16px 20px,#9fbde0 20px 24px,#d5dfee 24px 28px,#a3b9dd 28px 32px,#accae6 32px 36px,#8eb0da 36px 40px,#9fbde0 40px 44px,#c6d5ea 44px 48px,#b8cce6 48px 52px,#8eb0da 52px 56px),linear-gradient(90deg,#accae6 0px 4px,#9fbde0 4px 8px,#8eb0da 8px 12px,#c6d5ea 12px 16px,#accae6 16px 20px,#accae6 20px 24px,#c6d5ea 24px 28px,#accae6 28px 32px,#c0d0e8 32px 36px,#8eb0da 36px 40px,#accae6 40px 44px,#d5dfee 44px 48px,#9fbde0 48px 52px,#accae6 52px 56px),linear-gradient(90deg,#dfe7f2 0px 4px,#dfe7f2 4px 8px,#dfe7f2 8px 12px,#ffffff 12px 16px,#c9d8ec 16px 20px,#c9d8ec 20px 24px,#eef3f9 24px 28px,#c9d8ec 28px 32px,#f4f6fa 32px 36px,#eef3f9 36px 40px,#f4f6fa 40px 44px,#dfe7f2 44px 48px,#ffffff 48px 52px,#e6ecf5 52px 56px);background-size:100% 4px;background-position:0 0,0 4px,0 8px,0 12px;background-repeat:no-repeat"></span>二期项目</div></div>
<div class="cell" style="left:587px;width:112px;"><div class="ci">承台垫层</div></div>
<div class="cell" style="left:699px;width:84px;"><div class="ci">C15</div></div>
<div class="cell" style="left:783px;width:84px;"><div class="ci">塔吊</div></div>
<div class="cell" style="left:867px;width:84px;"><div class="ci"></div></div>
<div class="cell" style="left:951px;width:122px;text-align:left;padding-left:7px;letter-spacing:-0.25px"><div class="ci">2021-10-14 06</div></div>
</div>
<div class="row" style="top:79px;width:1090px;height:31px;background:#fff;line-height:32px">
<div class="cell" style="left:0px;width:40px;padding:0"><div class="ci">10</div></div>
<div class="cell g" style="left:40px;width:85px;"><div class="ci">完成生产</div></div>
<div class="cell b" style="left:125px;width:84px;"><div class="ci">T21100127</div></div>
<div class="cell b" style="left:209px;width:168px;"><div class="ci"><span class="blur" style="width:105px;background:linear-gradient(90deg,#ffffff 0px 4px,#f4f6fa 4px 8px,#ffffff 8px 12px,#f4f6fa 12px 16px,#c9d8ec 16px 20px,#e6ecf5 20px 24px,#f4f6fa 24px 28px,#c9d8ec 28px 32px,#d3deee 32px 36px,#ffffff 36px 40px,#eef3f9 40px 44px,#eef3f9 44px 48px,#d3deee 48px 52px,#eef3f9 52px 56px,#e6ecf5 56px 60px,#ffffff 60px 64px,#ffffff 64px 68px,#ffffff 68px 72px,#eef3f9 72px 76px,#f4f6fa 76px 80px,#d3deee 80px 84px,#dfe7f2 84px 88px,#e6ecf5 88px 92px,#eef3f9 92px 96px,#dfe7f2 96px 100px,#dfe7f2 100px 104px,#ffffff 104px 105px),linear-gradient(90deg,#accae6 0px 4px,#a3b9dd 4px 8px,#8eb0da 8px 12px,#9fbde0 12px 16px,#b8cce6 16px 20px,#a3b9dd 20px 24px,#accae6 24px 28px,#c6d5ea 28px 32px,#accae6 32px 36px,#9fbde0 36px 40px,#c0d0e8 40px 44px,#8eb0da 44px 48px,#8eb0da 48px 52px,#accae6 52px 56px,#c0d0e8 56px 60px,#9fbde0 60px 64px,#accae6 64px 68px,#d5dfee 68px 72px,#d5dfee 72px 76px,#d5dfee 76px 80px,#c6d5ea 80px 84px,#9fbde0 84px 88px,#accae6 88px 92px,#c6d5ea 92px 96px,#d5dfee 96px 100px,#8eb0da 100px 104px,#9fbde0 104px 105px),linear-gradient(90deg,#d5dfee 0px 4px,#a3b9dd 4px 8px,#b8cce6 8px 12px,#c0d0e8 12px 16px,#accae6 16px 20px,#c6d5ea 20px 24px,#c6d5ea 24px 28px,#9fbde0 28px 32px,#b8cce6 32px 36px,#accae6 36px 40px,#b8cce6 40px 44px,#8eb0da 44px 48px,#a3b9dd 48px 52px,#9fbde0 52px 56px,#a3b9dd 56px 60px,#9fbde0 60px 64px,#accae6 64px 68px,#accae6 68px 72px,#c6d5ea 72px 76px,#b8cce6 76px 80px,#8eb0da 80px 84px,#a3b9dd 84px 88px,#d5dfee 88px 92px,#c0d0e8 92px 96px,#8eb0da 96px 100px,#accae6 100px 104px,#8eb0da 104px 105px),linear-gradient(90deg,#dfe7f2 0px 4px,#e6ecf5 4px 8px,#e6ecf5 8px 12px,#ffffff 12px 16px,#c9d8ec 16px 20px,#ffffff 20px 24px,#f4f6fa 24px 28px,#ffffff 28px 32px,#ffffff 32px 36px,#e6ecf5 36px 40px,#c9d8ec 40px 44px,#eef3f9 44px 48px,#c9d8ec 48px 52px,#e6ecf5 52px 56px,#c9d8ec 56px 60px,#c9d8ec 60px 64px,#e6ecf5 64px 68px,#e6ecf5 68px 72px,#e6ecf5 72px 76px,#dfe7f2 76px 80px,#e6ecf5 80px 84px,#ffffff 84px 88px,#c9d8ec 88px 92px,#e6ecf5 92px 96px,#ffffff 96px 100px,#ffffff 100px 104px,#ffffff 104px 105px);background-size:100% 4px;background-position:0 0,0 4px,0 8px,0 12px;background-repeat:no-repeat"></span>程有限公</div></div>
<div class="cell b" style="left:377px;width:210px;"><div class="ci"><span class="blur" style="width:150px;background:linear-gradient(90deg,#ffffff 0px 4px,#eef3f9 4px 8px,#dfe7f2 8px 12px,#dfe7f2 12px 16px,#dfe7f2 16px 20px,#eef3f9 20px 24px,#ffffff 24px 28px,#d3deee 28px 32px,#dfe7f2 32px 36px,#f4f6fa 36px 40px,#e6ecf5 40px 44px,#f4f6fa 44px 48px,#c9d8ec 48px 52px,#dfe7f2 52px 56px,#ffffff 56px 60px,#dfe7f2 60px 64px,#ffffff 64px 68px,#c9d8ec 68px 72px,#ffffff 72px 76px,#eef3f9 76px 80px,#f4f6fa 80px 84px,#d3deee 84px 88px,#dfe7f2 88px 92px,#f4f6fa 92px 96px,#e6ecf5 96px 100px,#dfe7f2 100px 104px,#ffffff 104px 108px,#c9d8ec 108px 112px,#c9d8ec 112px 116px,#dfe7f2 116px 120px,#ffffff 120px 124px,#c9d8ec 124px 128px,#dfe7f2 128px 132px,#ffffff 132px 136px,#ffffff 136px 140px,#f4f6fa 140px 144px,#d3deee 144px 148px,#e6ecf5 148px 150px),linear-gradient(90deg,#b8cce6 0px 4px,#accae6 4px 8px,#c6d5ea 8px 12px,#c6d5ea 12px 16px,#c6d5ea 16px 20px,#c0d0e8 20px 24px,#c0d0e8 24px 28px,#a3b9dd 28px 32px,#b8cce6 32px 36px,#c0d0e8 36px 40px,#accae6 40px 44px,#9fbde0 44px 48px,#c6d5ea 48px 52px,#b8cce6 52px 56px,#8eb0da 56px 60px,#d5dfee 60px 64px,#accae6 64px 68px,#accae6 68px 72px,#8eb0da 72px 76px,#9fbde0 76px 80px,#c0d0e8 80px 84px,#9fbde0 84px 88px,#c0d0e8 88px 92px,#accae6 92px 96px,#b8cce6 96px 100px,#c6d5ea 100px 104px,#c0d0e8 104px 108px,#accae6 108px 112px,#accae6 112px 116px,#c0d0e8 116px 120px,#c0d0e8 120px 124px,#c0d0e8 124px 128px,#b8cce6 128px 132px,#c6d5ea 132px 136px,#accae6 136px 140px,#b8cce6 140px 144px,#c0d0e8 144px 148px,#9fbde0 148px 150px),linear-gradient(90deg,#accae6 0px 4px,#c0d0e8 4px 8px,#b8cce6 8px 12px,#c0d0e8 12px 16px,#accae6 16px 20px,#a3b9dd 20px 24px,#c6d5ea 24px 28px,#c6d5ea 28px 32px,#b8cce6 32px 36px,#b8cce6 36px 40px,#8eb0da 40px 44px,#accae6 44px 48px,#d5dfee 48px 52px,#8eb0da 52px 56px,#accae6 56px 60px,#b8cce6 60px 64px,#d5dfee 64px 68px,#c6d5ea 68px 72px,#c0d0e8 72px 76px,#c0d0e8 76px 80px,#a3b9dd 80px 84px,#9fbde0 84px 88px,#8eb0da 88px 92px,#9fbde0 92px 96px,#c0d0e8 96px 100px,#c0d0e8 100px 104px,#a3b9dd 104px 108px,#accae6 108px 112px,#8eb0da 112px 116px,#a3b9dd 116px 120px,#d5dfee 120px 124px,#a3b9dd 124px 128px,#d5dfee 128px 132px,#b8cce6 132px 136px,#d5dfee 136px 140px,#9fbde0 140px 144px,#d5dfee 144px 148px,#d5dfee 148px 150px),linear-gradient(90deg,#e6ecf5 0px 4px,#f4f6fa 4px 8px,#dfe7f2 8px 12px,#eef3f9 12px 16px,#ffffff 16px 20px,#dfe7f2 20px 24px,#ffffff 24px 28px,#d3deee 28px 32px,#d3deee 32px 36px,#d3deee 36px 40px,#dfe7f2 40px 44px,#f4f6fa 44px 48px,#f4f6fa 48px 52px,#e6ecf5 52px 56px,#c9d8ec 56px 60px,#dfe7f2 60px 64px,#d3deee 64px 68px,#f4f6fa 68px 72px,#e6ecf5 72px 76px,#d3deee 76px 80px,#e6ecf5 80px 84px,#dfe7f2 84px 88px,#d3deee 88px 92px,#dfe7f2 92px 96px,#dfe7f2 96px 100px,#e6ecf5 100px 104px,#ffffff 104px 108px,#d3deee 108px 112px,#ffffff 112px 116px,#eef3f9 116px 120px,#eef3f9 120px 124px,#d3deee 124px 128px,#f4f6fa 128px 132px,#c9d8ec 132px 136px,#d3deee 136px 140px,#eef3f9 140px 144px,#e6ecf5 144px 148px,#d3deee 148px 150px);background-size:100% 4px;background-position:0 0,0 4px,0 8px,0 12px;background-repeat:no-repeat"></span>一标D2</div></div>
<div class="cell" style="left:587px;width:112px;"><div class="ci">H1栋车库地下室顶</div></div>
<div class="cell" style="left:699px;width:84px;"><div class="ci">C15</div></div>
<div class="cell" style="left:783px;width:84px;"><div class="ci">塔吊</div></div>
<div class="cell" style="left:867px;width:84px;"><div class="ci"></div></div>
<div class="cell" style="left:951px;width:122px;text-align:left;padding-left:7px;letter-spacing:-0.25px"><div class="ci">2021-10-14 06</div></div>
</div>
<div class="row" style="top:110px;width:1090px;height:31px;background:#f5f8f8;line-height:32px">
<div class="cell" style="left:0px;width:40px;padding:0"><div class="ci">11</div></div>
<div class="cell g" style="left:40px;width:85px;"><div class="ci">完成生产</div></div>
<div class="cell b" style="left:125px;width:84px;"><div class="ci">T21100126</div></div>
<div class="cell b" style="left:209px;width:168px;"><div class="ci"><span class="blur" style="width:105px;background:linear-gradient(90deg,#e6ecf5 0px 4px,#f4f6fa 4px 8px,#dfe7f2 8px 12px,#e6ecf5 12px 16px,#e6ecf5 16px 20px,#ffffff 20px 24px,#f4f6fa 24px 28px,#c9d8ec 28px 32px,#c9d8ec 32px 36px,#eef3f9 36px 40px,#ffffff 40px 44px,#dfe7f2 44px 48px,#dfe7f2 48px 52px,#ffffff 52px 56px,#f4f6fa 56px 60px,#f4f6fa 60px 64px,#c9d8ec 64px 68px,#e6ecf5 68px 72px,#eef3f9 72px 76px,#ffffff 76px 80px,#e6ecf5 80px 84px,#d3deee 84px 88px,#f4f6fa 88px 92px,#dfe7f2 92px 96px,#c9d8ec 96px 100px,#eef3f9 100px 104px,#eef3f9 104px 105px),linear-gradient(90deg,#c0d0e8 0px 4px,#a3b9dd 4px 8px,#d5dfee 8px 12px,#accae6 12px 16px,#accae6 16px 20px,#accae6 20px 24px,#accae6 24px 28px,#a3b9dd 28px 32px,#c6d5ea 32px 36px,#accae6 36px 40px,#c0d0e8 40px 44px,#a3b9dd 44px 48px,#b8cce6 48px 52px,#8eb0da 52px 56px,#8eb0da 56px 60px,#b8cce6 60px 64px,#c6d5ea 64px 68px,#c0d0e8 68px 72px,#c6d5ea 72px 76px,#c0d0e8 76px 80px,#d5dfee 80px 84px,#c0d0e8 84px 88px,#a3b9dd 88px 92px,#8eb0da 92px 96px,#c6d5ea 96px 100px,#c6d5ea 100px 104px,#b8cce6 104px 105px),linear-gradient(90deg,#8eb0da 0px 4px,#d5dfee 4px 8px,#b8cce6 8px 12px,#d5dfee 12px 16px,#c6d5ea 16px 20px,#d5dfee 20px 24px,#accae6 24px 28px,#c6d5ea 28px 32px,#9fbde0 32px 36px,#a3b9dd 36px 40px,#a3b9dd 40px 44px,#a3b9dd 44px 48px,#c6d5ea 48px 52px,#a3b9dd 52px 56px,#accae6 56px 60px,#d5dfee 60px 64px,#9fbde0 64px 68px,#c0d0e8 68px 72px,#accae6 72px 76px,#d5dfee 76px 80px,#8eb0da 80px 84px,#c6d5ea 84px 88px,#b8cce6 88px 92px,#accae6 92px 96px,#c6d5ea 96px 100px,#a3b9dd 100px 104px,#a3b9dd 104px 105px),linear-gradient(90deg,#ffffff 0px 4px,#f4f6fa 4px 8px,#f4f6fa 8px 12px,#d3deee 12px 16px,#e6ecf5 16px 20px,#e6ecf5 20px 24px,#e6ecf5 24px 28px,#dfe7f2 28px 32px,#eef3f9 32px 36px,#dfe7f2 36px 40px,#f4f6fa 40px 44px,#ffffff 44px 48px,#e6ecf5 48px 52px,#e6ecf5 52px 56px,#f4f6fa 56px 60px,#c9d8ec 60px 64px,#f4f6fa 64px 68px,#dfe7f2 68px 72px,#dfe7f2 72px 76px,#f4f6fa 76px 80px,#e6ecf5 80px 84px,#c9d8ec 84px 88px,#e6ecf5 88px 92px,#f4f6fa 92px 96px,#f4f6fa 96px 100px,#eef3f9 100px 104px,#e6ecf5 104px 105px);background-size:100% 4px;background-position:0 0,0 4px,0 8px,0 12px;background-repeat:no-repeat"></span>限公司望</div></div>
<div class="cell b" style="left:377px;width:210px;"><div class="ci"><span class="blur" style="width:82px;background:linear-gradient(90deg,#dfe7f2 0px 4px,#eef3f9 4px 8px,#eef3f9 8px 12px,#eef3f9 12px 16px,#c9d8ec 16px 20px,#ffffff 20px 24px,#dfe7f2 24px 28px,#e6ecf5 28px 32px,#ffffff 32px 36px,#ffffff 36px 40px,#ffffff 40px 44px,#e6ecf5 44px 48px,#e6ecf5 48px 52px,#f4f6fa 52px 56px,#dfe7f2 56px 60px,#c9d8ec 60px 64px,#e6ecf5 64px 68px,#dfe7f2 68px 72px,#dfe7f2 72px 76px,#e6ecf5 76px 80px,#eef3f9 80px 82px),linear-gradient(90deg,#c6d5ea 0px 4px,#9fbde0 4px 8px,#accae6 8px 12px,#8eb0da 12px 16px,#accae6 16px 20px,#a3b9dd 20px 24px,#b8cce6 24px 28px,#b8cce6 28px 32px,#b8cce6 32px 36px,#accae6 36px 40px,#c6d5ea 40px 44px,#a3b9dd 44px 48px,#accae6 48px 52px,#c6d5ea 52px 56px,#9fbde0 56px 60px,#9fbde0 60px 64px,#accae6 64px 68px,#c0d0e8 68px 72px,#accae6 72px 76px,#d5dfee 76px 80px,#c6d5ea 80px 82px),linear-gradient(90deg,#c0d0e8 0px 4px,#c6d5ea 4px 8px,#c6d5ea 8px 12px,#9fbde0 12px 16px,#a3b9dd 16px 20px,#accae6 20px 24px,#9fbde0 24px 28px,#9fbde0 28px 32px,#c6d5ea 32px 36px,#c0d0e8 36px 40px,#a3b9dd 40px 44px,#b8cce6 44px 48px,#accae6 48px 52px,#c6d5ea 52px 56px,#a3b9dd 56px 60px,#d5dfee 60px 64px,#c6d5ea 64px 68px,#c0d0e8 68px 72px,#9fbde0 72px 76px,#d5dfee 76px 80px,#a3b9dd 80px 82px),linear-gradient(90deg,#d3deee 0px 4px,#ffffff 4px 8px,#f4f6fa 8px 12px,#eef3f9 12px 16px,#dfe7f2 16px 20px,#e6ecf5 20px 24px,#d3deee 24px 28px,#ffffff 28px 32px,#e6ecf5 32px 36px,#c9d8ec 36px 40px,#dfe7f2 40px 44px,#eef3f9 44px 48px,#f4f6fa 48px 52px,#eef3f9 52px 56px,#d3deee 56px 60px,#e6ecf5 60px 64px,#e6ecf5 64px 68px,#eef3f9 68px 72px,#eef3f9 72px 76px,#f4f6fa 76px 80px,#eef3f9 80px 82px);background-size:100% 4px;background-position:0 0,0 4px,0 8px,0 12px;background-repeat:no-repeat"></span>项目</div></div>
<div class="cell" style="left:587px;width:112px;"><div class="ci">8#-1#钢筋棚硬化</div></div>
<div class="cell" style="left:699px;width:84px;"><div class="ci">C25</div></div>
<div class="cell" style="left:783px;width:84px;"><div class="ci">自卸</div></div>
<div class="cell" style="left:867px;width:84px;"><div class="ci"></div></div>
<div class="cell" style="left:951px;width:122px;text-align:left;padding-left:7px;letter-spacing:-0.25px"><div class="ci">2021-10-14 06</div></div>
</div>
<div class="row" style="top:141px;width:1090px;height:31px;background:#fff;line-height:32px">
<div class="cell" style="left:0px;width:40px;padding:0"><div class="ci">12</div></div>
<div class="cell g" style="left:40px;width:85px;"><div class="ci">完成生产</div></div>
<div class="cell b" style="left:125px;width:84px;"><div class="ci">T21100125</div></div>
<div class="cell b" style="left:209px;width:168px;"><div class="ci"><span class="blur" style="width:105px;background:linear-gradient(90deg,#d3deee 0px 4px,#e6ecf5 4px 8px,#d3deee 8px 12px,#dfe7f2 12px 16px,#c9d8ec 16px 20px,#f4f6fa 20px 24px,#c9d8ec 24px 28px,#eef3f9 28px 32px,#eef3f9 32px 36px,#f4f6fa 36px 40px,#f4f6fa 40px 44px,#ffffff 44px 48px,#dfe7f2 48px 52px,#c9d8ec 52px 56px,#eef3f9 56px 60px,#f4f6fa 60px 64px,#dfe7f2 64px 68px,#eef3f9 68px 72px,#dfe7f2 72px 76px,#c9d8ec 76px 80px,#eef3f9 80px 84px,#f4f6fa 84px 88px,#dfe7f2 88px 92px,#ffffff 92px 96px,#dfe7f2 96px 100px,#eef3f9 100px 104px,#f4f6fa 104px 105px),linear-gradient(90deg,#c0d0e8 0px 4px,#d5dfee 4px 8px,#b8cce6 8px 12px,#b8cce6 12px 16px,#8eb0da 16px 20px,#d5dfee 20px 24px,#c6d5ea 24px 28px,#8eb0da 28px 32px,#c0d0e8 32px 36px,#9fbde0 36px 40px,#accae6 40px 44px,#a3b9dd 44px 48px,#d5dfee 48px 52px,#d5dfee 52px 56px,#c0d0e8 56px 60px,#8eb0da 60px 64px,#b8cce6 64px 68px,#9fbde0 68px 72px,#b8cce6 72px 76px,#accae6 76px 80px,#b8cce6 80px 84px,#d5dfee 84px 88px,#a3b9dd 88px 92px,#b8cce6 92px 96px,#c6d5ea 96px 100px,#a3b9dd 100px 104px,#d5dfee 104px 105px),linear-gradient(90deg,#accae6 0px 4px,#a3b9dd 4px 8px,#b8cce6 8px 12px,#9fbde0 12px 16px,#c0d0e8 16px 20px,#c6d5ea 20px 24px,#d5dfee 24px 28px,#c0d0e8 28px 32px,#c6d5ea 32px 36px,#d5dfee 36px 40px,#d5dfee 40px 44px,#c0d0e8 44px 48px,#9fbde0 48px 52px,#a3b9dd 52px 56px,#c6d5ea 56px 60px,#a3b9dd 60px 64px,#9fbde0 64px 68px,#a3b9dd 68px 72px,#9fbde0 72px 76px,#c0d0e8 76px 80px,#b8cce6 80px 84px,#9fbde0 84px 88px,#accae6 88px 92px,#c6d5ea 92px 96px,#b8cce6 96px 100px,#d5dfee 100px 104px,#d5dfee 104px 105px),linear-gradient(90deg,#d3deee 0px 4px,#d3deee 4px 8px,#c9d8ec 8px 12px,#dfe7f2 12px 16px,#d3deee 16px 20px,#ffffff 20px 24px,#ffffff 24px 28px,#ffffff 28px 32px,#d3deee 32px 36px,#d3deee 36px 40px,#d3deee 40px 44px,#dfe7f2 44px 48px,#ffffff 48px 52px,#e6ecf5 52px 56px,#c9d8ec 56px 60px,#e6ecf5 60px 64px,#ffffff 64px 68px,#dfe7f2 68px 72px,#dfe7f2 72px 76px,#e6ecf5 76px 80px,#eef3f9 80px 84px,#dfe7f2 84px 88px,#f4f6fa 88px 92px,#ffffff 92px 96px,#f4f6fa 96px 100px,#e6ecf5 100px 104px,#f4f6fa 104px 105px);background-size:100% 4px;background-position:0 0,0 4px,0 8px,0 12px;background-repeat:no-repeat"></span>有限公司</div></div>
<div class="cell b" style="left:377px;width:210px;"><div class="ci"><span class="blur" style="width:130px;background:linear-gradient(90deg,#e6ecf5 0px 4px,#d3deee 4px 8px,#f4f6fa 8px 12px,#e6ecf5 12px 16px,#f4f6fa 16px 20px,#eef3f9 20px 24px,#f4f6fa 24px 28px,#eef3f9 28px 32px,#dfe7f2 32px 36px,#e6ecf5 36px 40px,#ffffff 40px 44px,#d3deee 44px 48px,#e6ecf5 48px 52px,#ffffff 52px 56px,#e6ecf5 56px 60px,#eef3f9 60px 64px,#c9d8ec 64px 68px,#eef3f9 68px 72px,#d3deee 72px 76px,#e6ecf5 76px 80px,#d3deee 80px 84px,#f4f6fa 84px 88px,#d3deee 88px 92px,#e6ecf5 92px 96px,#e6ecf5 96px 100px,#c9d8ec 100px 104px,#dfe7f2 104px 108px,#c9d8ec 108px 112px,#eef3f9 112px 116px,#f4f6fa 116px 120px,#e6ecf5 120px 124px,#eef3f9 124px 128px,#eef3f9 128px 130px),linear-gradient(90deg,#a3b9dd 0px 4px,#b8cce6 4px 8px,#9fbde0 8px 12px,#c0d0e8 12px 16px,#d5dfee 16px 20px,#8eb0da 20px 24px,#a3b9dd 24px 28px,#b8cce6 28px 32px,#b8cce6 32px 36px,#accae6 36px 40px,#b8cce6 40px 44px,#c6d5ea 44px 48px,#b8cce6 48px 52px,#a3b9dd 52px 56px,#c0d0e8 56px 60px,#c0d0e8 60px 64px,#8eb0da 64px 68px,#c6d5ea 68px 72px,#8eb0da 72px 76px,#a3b9dd 76px 80px,#c0d0e8 80px 84px,#c6d5ea 84px 88px,#b8cce6 88px 92px,#accae6 92px 96px,#accae6 96px 100px,#accae6 100px 104px,#accae6 104px 108px,#d5dfee 108px 112px,#accae6 112px 116px,#accae6 116px 120px,#c6d5ea 120px 124px,#c0d0e8 124px 128px,#c6d5ea 128px 130px),linear-gradient(90deg,#8eb0da 0px 4px,#c6d5ea 4px 8px,#c6d5ea 8px 12px,#8eb0da 12px 16px,#accae6 16px 20px,#c6d5ea 20px 24px,#d5dfee 24px 28px,#b8cce6 28px 32px,#a3b9dd 32px 36px,#accae6 36px 40px,#c6d5ea 40px 44px,#c6d5ea 44px 48px,#b8cce6 48px 52px,#c0d0e8 52px 56px,#9fbde0 56px 60px,#b8cce6 60px 64px,#9fbde0 64px 68px,#c0d0e8 68px 72px,#c6d5ea 72px 76px,#c0d0e8 76px 80px,#d5dfee 80px 84px,#9fbde0 84px 88px,#accae6 88px 92px,#c6d5ea 92px 96px,#b8cce6 96px 100px,#9fbde0 100px 104px,#c6d5ea 104px 108px,#c6d5ea 108px 112px,#b8cce6 112px 116px,#d5dfee 116px 120px,#8eb0da 120px 124px,#c0d0e8 124px 128px,#accae6 128px 130px),linear-gradient(90deg,#e6ecf5 0px 4px,#e6ecf5 4px 8px,#ffffff 8px 12px,#dfe7f2 12px 16px,#dfe7f2 16px 20px,#ffffff 20px 24px,#c9d8ec 24px 28px,#ffffff 28px 32px,#c9d8ec 32px 36px,#d3deee 36px 40px,#eef3f9 40px 44px,#dfe7f2 44px 48px,#d3deee 48px 52px,#d3deee 52px 56px,#eef3f9 56px 60px,#dfe7f2 60px 64px,#eef3f9 64px 68px,#d3deee 68px 72px,#dfe7f2 72px 76px,#c9d8ec 76px 80px,#ffffff 80px 84px,#ffffff 84px 88px,#eef3f9 88px 92px,#e6ecf5 92px 96px,#dfe7f2 96px 100px,#e6ecf5 100px 104px,#d3deee 104px 108px,#f4f6fa 108px 112px,#ffffff 112px 116px,#d3deee 116px 120px,#eef3f9 120px 124px,#c9d8ec 124px 128px,#d3deee 128px 130px);background-size:100% 4px;background-position:0 0,0 4px,0 8px,0 12px;background-repeat:no-repeat"></span>养猪场工程</div></div>
<div class="cell" style="left:587px;width:112px;"><div class="ci">配怀二11~16轴二</div></div>
<div class="cell" style="left:699px;width:84px;"><div class="ci">C35</div></div>
<div class="cell" style="left:783px;width:84px;"><div class="ci">塔吊</div></div>
<div class="cell" style="left:867px;width:84px;"><div class="ci"></div></div>
<div class="cell" style="left:951px;width:122px;text-align:left;padding-left:7px;letter-spacing:-0.25px"><div class="ci">2021-10-14 06</div></div>
</div>
<div class="row" style="top:172px;width:1090px;height:31px;background:#f5f8f8;line-height:32px">
<div class="cell" style="left:0px;width:40px;padding:0"><div class="ci">13</div></div>
<div class="cell g" style="left:40px;width:85px;"><div class="ci">完成生产</div></div>
<div class="cell b" style="left:125px;width:84px;"><div class="ci">T21100124</div></div>
<div class="cell b" style="left:209px;width:168px;"><div class="ci"><span class="blur" style="width:105px;background:linear-gradient(90deg,#dfe7f2 0px 4px,#eef3f9 4px 8px,#dfe7f2 8px 12px,#e6ecf5 12px 16px,#f4f6fa 16px 20px,#c9d8ec 20px 24px,#f4f6fa 24px 28px,#dfe7f2 28px 32px,#f4f6fa 32px 36px,#dfe7f2 36px 40px,#e6ecf5 40px 44px,#f4f6fa 44px 48px,#ffffff 48px 52px,#c9d8ec 52px 56px,#eef3f9 56px 60px,#ffffff 60px 64px,#c9d8ec 64px 68px,#dfe7f2 68px 72px,#ffffff 72px 76px,#eef3f9 76px 80px,#f4f6fa 80px 84px,#ffffff 84px 88px,#d3deee 88px 92px,#f4f6fa 92px 96px,#d3deee 96px 100px,#ffffff 100px 104px,#d3deee 104px 105px),linear-gradient(90deg,#a3b9dd 0px 4px,#9fbde0 4px 8px,#accae6 8px 12px,#d5dfee 12px 16px,#a3b9dd 16px 20px,#a3b9dd 20px 24px,#9fbde0 24px 28px,#d5dfee 28px 32px,#c6d5ea 32px 36px,#a3b9dd 36px 40px,#a3b9dd 40px 44px,#c6d5ea 44px 48px,#9fbde0 48px 52px,#a3b9dd 52px 56px,#8eb0da 56px 60px,#a3b9dd 60px 64px,#b8cce6 64px 68px,#b8cce6 68px 72px,#a3b9dd 72px 76px,#d5dfee 76px 80px,#c0d0e8 80px 84px,#8eb0da 84px 88px,#8eb0da 88px 92px,#9fbde0 92px 96px,#9fbde0 96px 100px,#8eb0da 100px 104px,#a3b9dd 104px 105px),linear-gradient(90deg,#b8cce6 0px 4px,#d5dfee 4px 8px,#8eb0da 8px 12px,#8eb0da 12px 16px,#d5dfee 16px 20px,#accae6 20px 24px,#8eb0da 24px 28px,#8eb0da 28px 32px,#b8cce6 32px 36px,#b8cce6 36px 40px,#a3b9dd 40px 44px,#c0d0e8 44px 48px,#c6d5ea 48px 52px,#accae6 52px 56px,#8eb0da 56px 60px,#9fbde0 60px 64px,#c0d0e8 64px 68px,#d5dfee 68px 72px,#9fbde0 72px 76px,#a3b9dd 76px 80px,#b8cce6 80px 84px,#8eb0da 84px 88px,#c6d5ea 88px 92px,#a3b9dd 92px 96px,#c6d5ea 96px 100px,#c0d0e8 100px 104px,#8eb0da 104px 105px),linear-gradient(90deg,#c9d8ec 0px 4px,#eef3f9 4px 8px,#dfe7f2 8px 12px,#f4f6fa 12px 16px,#c9d8ec 16px 20px,#eef3f9 20px 24px,#f4f6fa 24px 28px,#d3deee 28px 32px,#dfe7f2 32px 36px,#eef3f9 36px 40px,#eef3f9 40px 44px,#ffffff 44px 48px,#e6ecf5 48px 52px,#eef3f9 52px 56px,#dfe7f2 56px 60px,#c9d8ec 60px 64px,#e6ecf5 64px 68px,#e6ecf5 68px 72px,#ffffff 72px 76px,#dfe7f2 76px 80px,#ffffff 80px 84px,#e6ecf5 84px 88px,#d3deee 88px 92px,#dfe7f2 92px 96px,#f4f6fa 96px 100px,#c9d8ec 100px 104px,#f4f6fa 104px 105px);background-size:100% 4px;background-position:0 0,0 4px,0 8px,0 12px;background-repeat:no-repeat"></span>有限公司</div></div>
<div class="cell b" style="left:377px;width:210px;"><div class="ci"><span class="blur" style="width:132px;background:linear-gradient(90deg,#c9d8ec 0px 4px,#e6ecf5 4px 8px,#ffffff 8px 12px,#e6ecf5 12px 16px,#d3deee 16px 20px,#ffffff 20px 24px,#f4f6fa 24px 28px,#d3deee 28px 32px,#c9d8ec 32px 36px,#eef3f9 36px 40px,#f4f6fa 40px 44px,#f4f6fa 44px 48px,#ffffff 48px 52px,#d3deee 52px 56px,#f4f6fa 56px 60px,#c9d8ec 60px 64px,#f4f6fa 64px 68px,#eef3f9 68px 72px,#dfe7f2 72px 76px,#dfe7f2 76px 80px,#c9d8ec 80px 84px,#f4f6fa 84px 88px,#f4f6fa 88px 92px,#eef3f9 92px 96px,#f4f6fa 96px 100px,#e6ecf5 100px 104px,#c9d8ec 104px 108px,#e6ecf5 108px 112px,#e6ecf5 112px 116px,#f4f6fa 116px 120px,#e6ecf5 120px 124px,#eef3f9 124px 128px,#e6ecf5 128px 132px),linear-gradient(90deg,#c0d0e8 0px 4px,#a3b9dd 4px 8px,#b8cce6 8px 12px,#b8cce6 12px 16px,#8eb0da 16px 20px,#d5dfee 20px 24px,#a3b9dd 24px 28px,#d5dfee 28px 32px,#b8cce6 32px 36px,#c0d0e8 36px 40px,#9fbde0 40px 44px,#9fbde0 44px 48px,#8eb0da 48px 52px,#b8cce6 52px 56px,#d5dfee 56px 60px,#b8cce6 60px 64px,#9fbde0 64px 68px,#a3b9dd 68px 72px,#8eb0da 72px 76px,#9fbde0 76px 80px,#b8cce6 80px 84px,#b8cce6 84px 88px,#c6d5ea 88px 92px,#8eb0da 92px 96px,#c0d0e8 96px 100px,#accae6 100px 104px,#8eb0da 104px 108px,#c6d5ea 108px 112px,#b8cce6 112px 116px,#d5dfee 116px 120px,#accae6 120px 124px,#8eb0da 124px 128px,#d5dfee 128px 132px),linear-gradient(90deg,#accae6 0px 4px,#c0d0e8 4px 8px,#8eb0da 8px 12px,#accae6 12px 16px,#c0d0e8 16px 20px,#c6d5ea 20px 24px,#accae6 24px 28px,#c6d5ea 28px 32px,#d5dfee 32px 36px,#d5dfee 36px 40px,#9fbde0 40px 44px,#c6d5ea 44px 48px,#8eb0da 48px 52px,#a3b9dd 52px 56px,#8eb0da 56px 60px,#accae6 60px 64px,#d5dfee 64px 68px,#a3b9dd 68px 72px,#8eb0da 72px 76px,#accae6 76px 80px,#b8cce6 80px 84px,#9fbde0 84px 88px,#d5dfee 88px 92px,#c0d0e8 92px 96px,#b8cce6 96px 100px,#accae6 100px 104px,#a3b9dd 104px 108px,#d5dfee 108px 112px,#accae6 112px 116px,#a3b9dd 116px 120px,#d5dfee 120px 124px,#8eb0da 124px 128px,#d5dfee 128px 132px),linear-gradient(90deg,#d3deee 0px 4px,#e6ecf5 4px 8px,#dfe7f2 8px 12px,#f4f6fa 12px 16px,#eef3f9 16px 20px,#eef3f9 20px 24px,#c9d8ec 24px 28px,#ffffff 28px 32px,#dfe7f2 32px 36px,#d3deee 36px 40px,#e6ecf5 40px 44px,#c9d8ec 44px 48px,#d3deee 48px 52px,#d3deee 52px 56px,#ffffff 56px 60px,#e6ecf5 60px 64px,#c9d8ec 64px 68px,#ffffff 68px 72px,#d3deee 72px 76px,#ffffff 76px 80px,#dfe7f2 80px 84px,#ffffff 84px 88px,#dfe7f2 88px 92px,#eef3f9 92px 96px,#eef3f9 96px 100px,#d3deee 100px 104px,#c9d8ec 104px 108px,#ffffff 108px 112px,#f4f6fa 112px 116px,#f4f6fa 116px 120px,#c9d8ec 120px 124px,#d3deee 124px 128px,#dfe7f2 128px 132px);background-size:100% 4px;background-position:0 0,0 4px,0 8px,0 12px;background-repeat:no-repeat"></span>湾美丽屋场地</div></div>
<div class="cell" style="left:587px;width:112px;"><div class="ci">路面</div></div>
<div class="cell" style="left:699px;width:84px;"><div class="ci">C25</div></div>
<div class="cell" style="left:783px;width:84px;"><div class="ci">自卸</div></div>
<div class="cell" style="left:867px;width:84px;"><div class="ci"></div></div>
<div class="cell" style="left:951px;width:122px;text-align:left;padding-left:7px;letter-spacing:-0.25px"><div class="ci">2021-10-14 06</div></div>
</div>
<div class="row" style="top:203px;width:1090px;height:31px;background:#fff;line-height:32px">
<div class="cell" style="left:0px;width:40px;padding:0"><div class="ci">14</div></div>
<div class="cell g" style="left:40px;width:85px;"><div class="ci">完成生产</div></div>
<div class="cell b" style="left:125px;width:84px;"><div class="ci">T21100123</div></div>
<div class="cell b" style="left:209px;width:168px;"><div class="ci"><span class="blur" style="width:105px;background:linear-gradient(90deg,#eef3f9 0px 4px,#f4f6fa 4px 8px,#eef3f9 8px 12px,#c9d8ec 12px 16px,#ffffff 16px 20px,#dfe7f2 20px 24px,#dfe7f2 24px 28px,#dfe7f2 28px 32px,#dfe7f2 32px 36px,#c9d8ec 36px 40px,#d3deee 40px 44px,#d3deee 44px 48px,#dfe7f2 48px 52px,#c9d8ec 52px 56px,#d3deee 56px 60px,#c9d8ec 60px 64px,#eef3f9 64px 68px,#f4f6fa 68px 72px,#c9d8ec 72px 76px,#d3deee 76px 80px,#c9d8ec 80px 84px,#eef3f9 84px 88px,#eef3f9 88px 92px,#d3deee 92px 96px,#c9d8ec 96px 100px,#e6ecf5 100px 104px,#f4f6fa 104px 105px),linear-gradient(90deg,#8eb0da 0px 4px,#8eb0da 4px 8px,#9fbde0 8px 12px,#c6d5ea 12px 16px,#8eb0da 16px 20px,#c0d0e8 20px 24px,#b8cce6 24px 28px,#b8cce6 28px 32px,#8eb0da 32px 36px,#accae6 36px 40px,#a3b9dd 40px 44px,#accae6 44px 48px,#9fbde0 48px 52px,#9fbde0 52px 56px,#d5dfee 56px 60px,#c0d0e8 60px 64px,#c0d0e8 64px 68px,#c6d5ea 68px 72px,#8eb0da 72px 76px,#9fbde0 76px 80px,#9fbde0 80px 84px,#9fbde0 84px 88px,#9fbde0 88px 92px,#a3b9dd 92px 96px,#8eb0da 96px 100px,#c6d5ea 100px 104px,#8eb0da 104px 105px),linear-gradient(90deg,#9fbde0 0px 4px,#b8cce6 4px 8px,#9fbde0 8px 12px,#c6d5ea 12px 16px,#8eb0da 16px 20px,#a3b9dd 20px 24px,#c6d5ea 24px 28px,#a3b9dd 28px 32px,#8eb0da 32px 36px,#accae6 36px 40px,#b8cce6 40px 44px,#accae6 44px 48px,#9fbde0 48px 52px,#c0d0e8 52px 56px,#9fbde0 56px 60px,#a3b9dd 60px 64px,#a3b9dd 64px 68px,#c0d0e8 68px 72px,#b8cce6 72px 76px,#c0d0e8 76px 80px,#8eb0da 80px 84px,#c6d5ea 84px 88px,#b8cce6 88px 92px,#accae6 92px 96px,#c6d5ea 96px 100px,#9fbde0 100px 104px,#b8cce6 104px 105px),linear-gradient(90deg,#d3deee 0px 4px,#ffffff 4px 8px,#ffffff 8px 12px,#e6ecf5 12px 16px,#d3deee 16px 20px,#ffffff 20px 24px,#dfe7f2 24px 28px,#d3deee 28px 32px,#ffffff 32px 36px,#c9d8ec 36px 40px,#ffffff 40px 44px,#f4f6fa 44px 48px,#ffffff 48px 52px,#e6ecf5 52px 56px,#c9d8ec 56px 60px,#d3deee 60px 64px,#d3deee 64px 68px,#ffffff 68px 72px,#eef3f9 72px 76px,#dfe7f2 76px 80px,#c9d8ec 80px 84px,#dfe7f2 84px 88px,#eef3f9 88px 92px,#d3deee 92px 96px,#eef3f9 96px 100px,#e6ecf5 100px 104px,#ffffff 104px 105px);background-size:100% 4px;background-position:0 0,0 4px,0 8px,0 12px;background-repeat:no-repeat"></span>程有限公</div></div>
<div class="cell b" style="left:377px;width:210px;"><div class="ci"><span class="blur" style="width:132px;background:linear-gradient(90deg,#eef3f9 0px 4px,#eef3f9 4px 8px,#ffffff 8px 12px,#d3deee 12px 16px,#eef3f9 16px 20px,#f4f6fa 20px 24px,#d3deee 24px 28px,#c9d8ec 28px 32px,#eef3f9 32px 36px,#f4f6fa 36px 40px,#e6ecf5 40px 44px,#ffffff 44px 48px,#ffffff 48px 52px,#ffffff 52px 56px,#e6ecf5 56px 60px,#c9d8ec 60px 64px,#f4f6fa 64px 68px,#f4f6fa 68px 72px,#e6ecf5 72px 76px,#c9d8ec 76px 80px,#ffffff 80px 84px,#dfe7f2 84px 88px,#e6ecf5 88px 92px,#dfe7f2 92px 96px,#f4f6fa 96px 100px,#ffffff 100px 104px,#eef3f9 104px 108px,#c9d8ec 108px 112px,#d3deee 112px 116px,#e6ecf5 116px 120px,#eef3f9 120px 124px,#f4f6fa 124px 128px,#c9d8ec 128px 132px),linear-gradient(90deg,#b8cce6 0px 4px,#8eb0da 4px 8px,#8eb0da 8px 12px,#9fbde0 12px 16px,#9fbde0 16px 20px,#b8cce6 20px 24px,#b8cce6 24px 28px,#8eb0da 28px 32px,#d5dfee 32px 36px,#8eb0da 36px 40px,#9fbde0 40px 44px,#9fbde0 44px 48px,#9fbde0 48px 52px,#8eb0da 52px 56px,#9fbde0 56px 60px,#b8cce6 60px 64px,#9fbde0 64px 68px,#b8cce6 68px 72px,#d5dfee 72px 76px,#c6d5ea 76px 80px,#b8cce6 80px 84px,#a3b9dd 84px 88px,#b8cce6 88px 92px,#c6d5ea 92px 96px,#c6d5ea 96px 100px,#c6d5ea 100px 104px,#b8cce6 104px 108px,#9fbde0 108px 112px,#9fbde0 112px 116px,#b8cce6 116px 120px,#accae6 120px 124px,#c0d0e8 124px 128px,#b8cce6 128px 132px),linear-gradient(90deg,#8eb0da 0px 4px,#b8cce6 4px 8px,#c6d5ea 8px 12px,#accae6 12px 16px,#d5dfee 16px 20px,#d5dfee 20px 24px,#a3b9dd 24px 28px,#accae6 28px 32px,#9fbde0 32px 36px,#d5dfee 36px 40px,#accae6 40px 44px,#accae6 44px 48px,#9fbde0 48px 52px,#d5dfee 52px 56px,#d5dfee 56px 60px,#c0d0e8 60px 64px,#accae6 64px 68px,#9fbde0 68px 72px,#a3b9dd 72px 76px,#9fbde0 76px 80px,#a3b9dd 80px 84px,#b8cce6 84px 88px,#d5dfee 88px 92px,#c0d0e8 92px 96px,#9fbde0 96px 100px,#c6d5ea 100px 104px,#b8cce6 104px 108px,#accae6 108px 112px,#8eb0da 112px 116px,#a3b9dd 116px 120px,#9fbde0 120px 124px,#c6d5ea 124px 128px,#accae6 128px 132px),linear-gradient(90deg,#e6ecf5 0px 4px,#e6ecf5 4px 8px,#dfe7f2 8px 12px,#dfe7f2 12px 16px,#d3deee 16px 20px,#f4f6fa 20px 24px,#dfe7f2 24px 28px,#f4f6fa 28px 32px,#ffffff 32px 36px,#e6ecf5 36px 40px,#e6ecf5 40px 44px,#eef3f9 44px 48px,#f4f6fa 48px 52px,#c9d8ec 52px 56px,#d3deee 56px 60px,#e6ecf5 60px 64px,#c9d8ec 64px 68px,#d3deee 68px 72px,#c9d8ec 72px 76px,#eef3f9 76px 80px,#d3deee 80px 84px,#e6ecf5 84px 88px,#eef3f9 88px 92px,#ffffff 92px 96px,#eef3f9 96px 100px,#f4f6fa 100px 104px,#eef3f9 104px 108px,#dfe7f2 108px 112px,#ffffff 112px 116px,#e6ecf5 116px 120px,#dfe7f2 120px 124px,#f4f6fa 124px 128px,#e6ecf5 128px 132px);background-size:100% 4px;background-position:0 0,0 4px,0 8px,0 12px;background-repeat:no-repeat"></span>工程一标D2</div></div>
<div class="cell" style="left:587px;width:112px;"><div class="ci">H3栋筏板垫层</div></div>
<div class="cell" style="left:699px;width:84px;"><div class="ci">C15</div></div>
<div class="cell" style="left:783px;width:84px;"><div class="ci">塔吊</div></div>
<div class="cell" style="left:867px;width:84px;"><div class="ci"></div></div>
<div class="cell" style="left:951px;width:122px;text-align:left;padding-left:7px;letter-spacing:-0.25px"><div class="ci">2021-10-14 06</div></div>
</div>
<div class="row" style="top:234px;width:1090px;height:31px;background:#f5f8f8;line-height:32px">
<div class="cell" style="left:0px;width:40px;padding:0"><div class="ci">15</div></div>
<div class="cell g" style="left:40px;width:85px;"><div class="ci">完成生产</div></div>
<div class="cell b" style="left:125px;width:84px;"><div class="ci">T21100122</div></div>
<div class="cell b" style="left:209px;width:168px;"><div class="ci"><span class="blur" style="width:105px;background:linear-gradient(90deg,#ffffff 0px 4px,#c9d8ec 4px 8px,#e6ecf5 8px 12px,#dfe7f2 12px 16px,#ffffff 16px 20px,#d3deee 20px 24px,#d3deee 24px 28px,#dfe7f2 28px 32px,#f4f6fa 32px 36px,#f4f6fa 36px 40px,#ffffff 40px 44px,#dfe7f2 44px 48px,#f4f6fa 48px 52px,#ffffff 52px 56px,#dfe7f2 56px 60px,#d3deee 60px 64px,#eef3f9 64px 68px,#d3deee 68px 72px,#d3deee 72px 76px,#f4f6fa 76px 80px,#c9d8ec 80px 84px,#c9d8ec 84px 88px,#eef3f9 88px 92px,#f4f6fa 92px 96px,#ffffff 96px 100px,#eef3f9 100px 104px,#f4f6fa 104px 105px),linear-gradient(90deg,#8eb0da 0px 4px,#9fbde0 4px 8px,#d5dfee 8px 12px,#d5dfee 12px 16px,#8eb0da 16px 20px,#c0d0e8 20px 24px,#d5dfee 24px 28px,#8eb0da 28px 32px,#c0d0e8 32px 36px,#c0d0e8 36px 40px,#accae6 40px 44px,#c6d5ea 44px 48px,#8eb0da 48px 52px,#d5dfee 52px 56px,#c0d0e8 56px 60px,#c6d5ea 60px 64px,#c6d5ea 64px 68px,#accae6 68px 72px,#accae6 72px 76px,#8eb0da 76px 80px,#8eb0da 80px 84px,#c6d5ea 84px 88px,#d5dfee 88px 92px,#d5dfee 92px 96px,#8eb0da 96px 100px,#c6d5ea 100px 104px,#d5dfee 104px 105px),linear-gradient(90deg,#c6d5ea 0px 4px,#accae6 4px 8px,#b8cce6 8px 12px,#8eb0da 12px 16px,#b8cce6 16px 20px,#c6d5ea 20px 24px,#a3b9dd 24px 28px,#8eb0da 28px 32px,#8eb0da 32px 36px,#accae6 36px 40px,#accae6 40px 44px,#a3b9dd 44px 48px,#accae6 48px 52px,#c6d5ea 52px 56px,#b8cce6 56px 60px,#b8cce6 60px 64px,#accae6 64px 68px,#c6d5ea 68px 72px,#a3b9dd 72px 76px,#c0d0e8 76px 80px,#9fbde0 80px 84px,#9fbde0 84px 88px,#a3b9dd 88px 92px,#a3b9dd 92px 96px,#c6d5ea 96px 100px,#accae6 100px 104px,#c0d0e8 104px 105px),linear-gradient(90deg,#dfe7f2 0px 4px,#eef3f9 4px 8px,#d3deee 8px 12px,#c9d8ec 12px 16px,#ffffff 16px 20px,#f4f6fa 20px 24px,#dfe7f2 24px 28px,#ffffff 28px 32px,#eef3f9 32px 36px,#e6ecf5 36px 40px,#f4f6fa 40px 44px,#ffffff 44px 48px,#c9d8ec 48px 52px,#c9d8ec 52px 56px,#ffffff 56px 60px,#ffffff 60px 64px,#f4f6fa 64px 68px,#e6ecf5 68px 72px,#eef3f9 72px 76px,#ffffff 76px 80px,#ffffff 80px 84px,#ffffff 84px 88px,#e6ecf5 88px 92px,#ffffff 92px 96px,#ffffff 96px 100px,#c9d8ec 100px 104px,#e6ecf5 104px 105px);background-size:100% 4px;background-position:0 0,0 4px,0 8px,0 12px;background-repeat:no-repeat"></span>有限公司</div></div>
<div class="cell b" style="left:377px;width:210px;"><div class="ci"><span class="blur" style="width:132px;background:linear-gradient(90deg,#eef3f9 0px 4px,#ffffff 4px 8px,#eef3f9 8px 12px,#ffffff 12px 16px,#dfe7f2 16px 20px,#f4f6fa 20px 24px,#f4f6fa 24px 28px,#d3deee 28px 32px,#d3deee 32px 36px,#ffffff 36px 40px,#ffffff 40px 44px,#dfe7f2 44px 48px,#f4f6fa 48px 52px,#eef3f9 52px 56px,#e6ecf5 56px 60px,#f4f6fa 60px 64px,#ffffff 64px 68px,#ffffff 68px 72px,#ffffff 72px 76px,#eef3f9 76px 80px,#d3deee 80px 84px,#e6ecf5 84px 88px,#f4f6fa 88px 92px,#f4f6fa 92px 96px,#f4f6fa 96px 100px,#dfe7f2 100px 104px,#c9d8ec 104px 108px,#e6ecf5 108px 112px,#f4f6fa 112px 116px,#c9d8ec 116px 120px,#ffffff 120px 124px,#ffffff 124px 128px,#e6ecf5 128px 132px),linear-gradient(90deg,#8eb0da 0px 4px,#d5dfee 4px 8px,#9fbde0 8px 12px,#a3b9dd 12px 16px,#c0d0e8 16px 20px,#b8cce6 20px 24px,#9fbde0 24px 28px,#accae6 28px 32px,#c6d5ea 32px 36px,#8eb0da 36px 40px,#c6d5ea 40px 44px,#d5dfee 44px 48px,#b8cce6 48px 52px,#c0d0e8 52px 56px,#c6d5ea 56px 60px,#c0d0e8 60px 64px,#9fbde0 64px 68px,#d5dfee 68px 72px,#d5dfee 72px 76px,#a3b9dd 76px 80px,#c0d0e8 80px 84px,#c6d5ea 84px 88px,#8eb0da 88px 92px,#a3b9dd 92px 96px,#b8cce6 96px 100px,#d5dfee 100px 104px,#9fbde0 104px 108px,#accae6 108px 112px,#accae6 112px 116px,#a3b9dd 116px 120px,#a3b9dd 120px 124px,#9fbde0 124px 128px,#9fbde0 128px 132px),linear-gradient(90deg,#b8cce6 0px 4px,#a3b9dd 4px 8px,#a3b9dd 8px 12px,#d5dfee 12px 16px,#accae6 16px 20px,#b8cce6 20px 24px,#c6d5ea 24px 28px,#accae6 28px 32px,#a3b9dd 32px 36px,#c6d5ea 36px 40px,#a3b9dd 40px 44px,#c0d0e8 44px 48px,#c6d5ea 48px 52px,#8eb0da 52px 56px,#8eb0da 56px 60px,#b8cce6 60px 64px,#c6d5ea 64px 68px,#c0d0e8 68px 72px,#c6d5ea 72px 76px,#8eb0da 76px 80px,#d5dfee 80px 84px,#a3b9dd 84px 88px,#c0d0e8 88px 92px,#accae6 92px 96px,#8eb0da 96px 100px,#c0d0e8 100px 104px,#d5dfee 104px 108px,#c6d5ea 108px 112px,#accae6 112px 116px,#a3b9dd 116px 120px,#accae6 120px 124px,#a3b9dd 124px 128px,#8eb0da 128px 132px),linear-gradient(90deg,#f4f6fa 0px 4px,#dfe7f2 4px 8px,#e6ecf5 8px 12px,#ffffff 12px 16px,#e6ecf5 16px 20px,#d3deee 20px 24px,#d3deee 24px 28px,#eef3f9 28px 32px,#ffffff 32px 36px,#d3deee 36px 40px,#d3deee 40px 44px,#f4f6fa 44px 48px,#f4f6fa 48px 52px,#f4f6fa 52px 56px,#c9d8ec 56px 60px,#ffffff 60px 64px,#dfe7f2 64px 68px,#ffffff 68px 72px,#d3deee 72px 76px,#eef3f9 76px 80px,#d3deee 80px 84px,#e6ecf5 84px 88px,#f4f6fa 88px 92px,#dfe7f2 92px 96px,#dfe7f2 96px 100px,#e6ecf5 100px 104px,#c9d8ec 104px 108px,#d3deee 108px 112px,#e6ecf5 112px 116px,#eef3f9 116px 120px,#c9d8ec 120px 124px,#e6ecf5 124px 128px,#d3deee 128px 132px);background-size:100% 4px;background-position:0 0,0 4px,0 8px,0 12px;background-repeat:no-repeat"></span>湾美丽屋场地</div></div>
<div class="cell" style="left:587px;width:112px;"><div class="ci">垫层</div></div>
<div class="cell" style="left:699px;width:84px;"><div class="ci">C20</div></div>
<div class="cell" style="left:783px;width:84px;"><div class="ci">挖机</div></div>
<div class="cell" style="left:867px;width:84px;"><div class="ci"></div></div>
<div class="cell" style="left:951px;width:122px;text-align:left;padding-left:7px;letter-spacing:-0.25px"><div class="ci">2021-10-14 06</div></div>
</div>
<div class="row" style="top:265px;width:1090px;height:31px;background:#fff;line-height:32px">
<div class="cell" style="left:0px;width:40px;padding:0"><div class="ci">16</div></div>
<div class="cell g" style="left:40px;width:85px;"><div class="ci">完成生产</div></div>
<div class="cell b" style="left:125px;width:84px;"><div class="ci">T21100121</div></div>
<div class="cell b" style="left:209px;width:168px;"><div class="ci"><span class="blur" style="width:100px;background:linear-gradient(90deg,#ffffff 0px 4px,#c9d8ec 4px 8px,#dfe7f2 8px 12px,#ffffff 12px 16px,#dfe7f2 16px 20px,#eef3f9 20px 24px,#dfe7f2 24px 28px,#ffffff 28px 32px,#d3deee 32px 36px,#d3deee 36px 40px,#c9d8ec 40px 44px,#dfe7f2 44px 48px,#c9d8ec 48px 52px,#eef3f9 52px 56px,#e6ecf5 56px 60px,#eef3f9 60px 64px,#eef3f9 64px 68px,#e6ecf5 68px 72px,#f4f6fa 72px 76px,#d3deee 76px 80px,#e6ecf5 80px 84px,#eef3f9 84px 88px,#eef3f9 88px 92px,#f4f6fa 92px 96px,#e6ecf5 96px 100px),linear-gradient(90deg,#8eb0da 0px 4px,#b8cce6 4px 8px,#accae6 8px 12px,#c6d5ea 12px 16px,#c0d0e8 16px 20px,#c6d5ea 20px 24px,#b8cce6 24px 28px,#c0d0e8 28px 32px,#b8cce6 32px 36px,#b8cce6 36px 40px,#accae6 40px 44px,#a3b9dd 44px 48px,#c6d5ea 48px 52px,#8eb0da 52px 56px,#c0d0e8 56px 60px,#c0d0e8 60px 64px,#9fbde0 64px 68px,#c0d0e8 68px 72px,#c0d0e8 72px 76px,#8eb0da 76px 80px,#c0d0e8 80px 84px,#c6d5ea 84px 88px,#c0d0e8 88px 92px,#8eb0da 92px 96px,#9fbde0 96px 100px),linear-gradient(90deg,#8eb0da 0px 4px,#d5dfee 4px 8px,#c0d0e8 8px 12px,#c0d0e8 12px 16px,#accae6 16px 20px,#c0d0e8 20px 24px,#d5dfee 24px 28px,#a3b9dd 28px 32px,#a3b9dd 32px 36px,#b8cce6 36px 40px,#8eb0da 40px 44px,#d5dfee 44px 48px,#9fbde0 48px 52px,#9fbde0 52px 56px,#9fbde0 56px 60px,#d5dfee 60px 64px,#b8cce6 64px 68px,#c0d0e8 68px 72px,#c0d0e8 72px 76px,#8eb0da 76px 80px,#9fbde0 80px 84px,#c6d5ea 84px 88px,#a3b9dd 88px 92px,#8eb0da 92px 96px,#d5dfee 96px 100px),linear-gradient(90deg,#dfe7f2 0px 4px,#e6ecf5 4px 8px,#ffffff 8px 12px,#d3deee 12px 16px,#d3deee 16px 20px,#f4f6fa 20px 24px,#e6ecf5 24px 28px,#c9d8ec 28px 32px,#c9d8ec 32px 36px,#e6ecf5 36px 40px,#eef3f9 40px 44px,#d3deee 44px 48px,#f4f6fa 48px 52px,#d3deee 52px 56px,#f4f6fa 56px 60px,#d3deee 60px 64px,#c9d8ec 64px 68px,#dfe7f2 68px 72px,#e6ecf5 72px 76px,#d3deee 76px 80px,#d3deee 80px 84px,#d3deee 84px 88px,#e6ecf5 88px 92px,#f4f6fa 92px 96px,#f4f6fa 96px 100px);background-size:100% 4px;background-position:0 0,0 4px,0 8px,0 12px;background-repeat:no-repeat"></span>限公司</div></div>
<div class="cell b" style="left:377px;width:210px;"><div class="ci"><span class="blur" style="width:80px;background:linear-gradient(90deg,#d3deee 0px 4px,#c9d8ec 4px 8px,#d3deee 8px 12px,#e6ecf5 12px 16px,#c9d8ec 16px 20px,#d3deee 20px 24px,#eef3f9 24px 28px,#ffffff 28px 32px,#f4f6fa 32px 36px,#e6ecf5 36px 40px,#dfe7f2 40px 44px,#d3deee 44px 48px,#eef3f9 48px 52px,#d3deee 52px 56px,#ffffff 56px 60px,#d3deee 60px 64px,#eef3f9 64px 68px,#c9d8ec 68px 72px,#ffffff 72px 76px,#dfe7f2 76px 80px),linear-gradient(90deg,#9fbde0 0px 4px,#a3b9dd 4px 8px,#a3b9dd 8px 12px,#9fbde0 12px 16px,#a3b9dd 16px 20px,#accae6 20px 24px,#b8cce6 24px 28px,#9fbde0 28px 32px,#9fbde0 32px 36px,#c6d5ea 36px 40px,#c0d0e8 40px 44px,#9fbde0 44px 48px,#a3b9dd 48px 52px,#8eb0da 52px 56px,#b8cce6 56px 60px,#c6d5ea 60px 64px,#9fbde0 64px 68px,#c0d0e8 68px 72px,#8eb0da 72px 76px,#b8cce6 76px 80px),linear-gradient(90deg,#8eb0da 0px 4px,#9fbde0 4px 8px,#a3b9dd 8px 12px,#b8cce6 12px 16px,#9fbde0 16px 20px,#d5dfee 20px 24px,#8eb0da 24px 28px,#accae6 28px 32px,#accae6 32px 36px,#accae6 36px 40px,#8eb0da 40px 44px,#a3b9dd 44px 48px,#9fbde0 48px 52px,#d5dfee 52px 56px,#9fbde0 56px 60px,#a3b9dd 60px 64px,#9fbde0 64px 68px,#c0d0e8 68px 72px,#9fbde0 72px 76px,#b8cce6 76px 80px),linear-gradient(90deg,#e6ecf5 0px 4px,#e6ecf5 4px 8px,#f4f6fa 8px 12px,#c9d8ec 12px 16px,#ffffff 16px 20px,#f4f6fa 20px 24px,#f4f6fa 24px 28px,#dfe7f2 28px 32px,#dfe7f2 32px 36px,#ffffff 36px 40px,#f4f6fa 40px 44px,#c9d8ec 44px 48px,#c9d8ec 48px 52px,#ffffff 52px 56px,#eef3f9 56px 60px,#f4f6fa 60px 64px,#e6ecf5 64px 68px,#f4f6fa 68px 72px,#c9d8ec 72px 76px,#dfe7f2 76px 80px);background-size:100% 4px;background-position:0 0,0 4px,0 8px,0 12px;background-repeat:no-repeat"></span></div></div>
<div class="cell" style="left:587px;width:112px;"><div class="ci">冠梁垫层</div></div>
<div class="cell" style="left:699px;width:84px;"><div class="ci">C15</div></div>
<div class="cell" style="left:783px;width:84px;"><div class="ci">挖机</div></div>
<div class="cell" style="left:867px;width:84px;"><div class="ci"></div></div>
<div class="cell" style="left:951px;width:122px;text-align:left;padding-left:7px;letter-spacing:-0.25px"><div class="ci">2021-10-14 06</div></div>
</div>
<div class="row" style="top:296px;width:1090px;height:31px;background:#f5f8f8;line-height:32px">
<div class="cell" style="left:0px;width:40px;padding:0"><div class="ci">17</div></div>
<div class="cell g" style="left:40px;width:85px;"><div class="ci">完成生产</div></div>
<div class="cell b" style="left:125px;width:84px;"><div class="ci">T21100120</div></div>
<div class="cell b" style="left:209px;width:168px;"><div class="ci"><span class="blur" style="width:105px;background:linear-gradient(90deg,#dfe7f2 0px 4px,#ffffff 4px 8px,#f4f6fa 8px 12px,#eef3f9 12px 16px,#eef3f9 16px 20px,#ffffff 20px 24px,#dfe7f2 24px 28px,#f4f6fa 28px 32px,#dfe7f2 32px 36px,#dfe7f2 36px 40px,#ffffff 40px 44px,#ffffff 44px 48px,#dfe7f2 48px 52px,#e6ecf5 52px 56px,#dfe7f2 56px 60px,#eef3f9 60px 64px,#e6ecf5 64px 68px,#dfe7f2 68px 72px,#eef3f9 72px 76px,#f4f6fa 76px 80px,#dfe7f2 80px 84px,#d3deee 84px 88px,#ffffff 88px 92px,#c9d8ec 92px 96px,#eef3f9 96px 100px,#f4f6fa 100px 104px,#ffffff 104px 105px),linear-gradient(90deg,#8eb0da 0px 4px,#9fbde0 4px 8px,#d5dfee 8px 12px,#8eb0da 12px 16px,#b8cce6 16px 20px,#accae6 20px 24px,#c0d0e8 24px 28px,#c0d0e8 28px 32px,#accae6 32px 36px,#9fbde0 36px 40px,#9fbde0 40px 44px,#9fbde0 44px 48px,#9fbde0 48px 52px,#9fbde0 52px 56px,#b8cce6 56px 60px,#a3b9dd 60px 64px,#accae6 64px 68px,#accae6 68px 72px,#8eb0da 72px 76px,#c0d0e8 76px 80px,#9fbde0 80px 84px,#d5dfee 84px 88px,#d5dfee 88px 92px,#c0d0e8 92px 96px,#c0d0e8 96px 100px,#8eb0da 100px 104px,#8eb0da 104px 105px),linear-gradient(90deg,#b8cce6 0px 4px,#d5dfee 4px 8px,#8eb0da 8px 12px,#a3b9dd 12px 16px,#c0d0e8 16px 20px,#a3b9dd 20px 24px,#c0d0e8 24px 28px,#accae6 28px 32px,#d5dfee 32px 36px,#accae6 36px 40px,#accae6 40px 44px,#9fbde0 44px 48px,#d5dfee 48px 52px,#9fbde0 52px 56px,#8eb0da 56px 60px,#accae6 60px 64px,#a3b9dd 64px 68px,#c6d5ea 68px 72px,#a3b9dd 72px 76px,#a3b9dd 76px 80px,#a3b9dd 80px 84px,#c6d5ea 84px 88px,#c0d0e8 88px 92px,#accae6 92px 96px,#9fbde0 96px 100px,#d5dfee 100px 104px,#accae6 104px 105px),linear-gradient(90deg,#d3deee 0px 4px,#f4f6fa 4px 8px,#eef3f9 8px 12px,#c9d8ec 12px 16px,#e6ecf5 16px 20px,#e6ecf5 20px 24px,#e6ecf5 24px 28px,#dfe7f2 28px 32px,#d3deee 32px 36px,#e6ecf5 36px 40px,#eef3f9 40px 44px,#e6ecf5 44px 48px,#e6ecf5 48px 52px,#c9d8ec 52px 56px,#eef3f9 56px 60px,#d3deee 60px 64px,#e6ecf5 64px 68px,#e6ecf5 68px 72px,#e6ecf5 72px 76px,#c9d8ec 76px 80px,#ffffff 80px 84px,#e6ecf5 84px 88px,#f4f6fa 88px 92px,#d3deee 92px 96px,#c9d8ec 96px 100px,#dfe7f2 100px 104px,#c9d8ec 104px 105px);background-size:100% 4px;background-position:0 0,0 4px,0 8px,0 12px;background-repeat:no-repeat"></span>有限公司</div></div>
<div class="cell b" style="left:377px;width:210px;"><div class="ci"><span class="blur" style="width:157px;background:linear-gradient(90deg,#c9d8ec 0px 4px,#f4f6fa 4px 8px,#e6ecf5 8px 12px,#f4f6fa 12px 16px,#eef3f9 16px 20px,#e6ecf5 20px 24px,#e6ecf5 24px 28px,#ffffff 28px 32px,#eef3f9 32px 36px,#d3deee 36px 40px,#c9d8ec 40px 44px,#dfe7f2 44px 48px,#ffffff 48px 52px,#f4f6fa 52px 56px,#f4f6fa 56px 60px,#ffffff 60px 64px,#eef3f9 64px 68px,#d3deee 68px 72px,#c9d8ec 72px 76px,#e6ecf5 76px 80px,#dfe7f2 80px 84px,#e6ecf5 84px 88px,#f4f6fa 88px 92px,#f4f6fa 92px 96px,#c9d8ec 96px 100px,#dfe7f2 100px 104px,#c9d8ec 104px 108px,#e6ecf5 108px 112px,#d3deee 112px 116px,#e6ecf5 116px 120px,#dfe7f2 120px 124px,#eef3f9 124px 128px,#f4f6fa 128px 132px,#c9d8ec 132px 136px,#c9d8ec 136px 140px,#d3deee 140px 144px,#e6ecf5 144px 148px,#c9d8ec 148px 152px,#d3deee 152px 156px,#f4f6fa 156px 157px),linear-gradient(90deg,#c6d5ea 0px 4px,#c6d5ea 4px 8px,#c6d5ea 8px 12px,#c6d5ea 12px 16px,#b8cce6 16px 20px,#8eb0da 20px 24px,#accae6 24px 28px,#d5dfee 28px 32px,#d5dfee 32px 36px,#a3b9dd 36px 40px,#8eb0da 40px 44px,#c6d5ea 44px 48px,#9fbde0 48px 52px,#c0d0e8 52px 56px,#d5dfee 56px 60px,#b8cce6 60px 64px,#d5dfee 64px 68px,#c0d0e8 68px 72px,#b8cce6 72px 76px,#8eb0da 76px 80px,#d5dfee 80px 84px,#9fbde0 84px 88px,#d5dfee 88px 92px,#accae6 92px 96px,#9fbde0 96px 100px,#b8cce6 100px 104px,#9fbde0 104px 108px,#c6d5ea 108px 112px,#c0d0e8 112px 116px,#c6d5ea 116px 120px,#accae6 120px 124px,#accae6 124px 128px,#a3b9dd 128px 132px,#b8cce6 132px 136px,#c0d0e8 136px 140px,#8eb0da 140px 144px,#accae6 144px 148px,#9fbde0 148px 152px,#d5dfee 152px 156px,#c6d5ea 156px 157px),linear-gradient(90deg,#8eb0da 0px 4px,#a3b9dd 4px 8px,#b8cce6 8px 12px,#9fbde0 12px 16px,#9fbde0 16px 20px,#9fbde0 20px 24px,#d5dfee 24px 28px,#c0d0e8 28px 32px,#c0d0e8 32px 36px,#b8cce6 36px 40px,#a3b9dd 40px 44px,#b8cce6 44px 48px,#b8cce6 48px 52px,#accae6 52px 56px,#d5dfee 56px 60px,#c6d5ea 60px 64px,#b8cce6 64px 68px,#a3b9dd 68px 72px,#8eb0da 72px 76px,#c0d0e8 76px 80px,#8eb0da 80px 84px,#d5dfee 84px 88px,#c6d5ea 88px 92px,#c6d5ea 92px 96px,#8eb0da 96px 100px,#9fbde0 100px 104px,#accae6 104px 108px,#d5dfee 108px 112px,#9fbde0 112px 116px,#9fbde0 116px 120px,#9fbde0 120px 124px,#accae6 124px 128px,#c0d0e8 128px 132px,#9fbde0 132px 136px,#b8cce6 136px 140px,#8eb0da 140px 144px,#d5dfee 144px 148px,#9fbde0 148px 152px,#c6d5ea 152px 156px,#accae6 156px 157px),linear-gradient(90deg,#c9d8ec 0px 4px,#c9d8ec 4px 8px,#f4f6fa 8px 12px,#e6ecf5 12px 16px,#ffffff 16px 20px,#dfe7f2 20px 24px,#f4f6fa 24px 28px,#d3deee 28px 32px,#d3deee 32px 36px,#d3deee 36px 40px,#f4f6fa 40px 44px,#dfe7f2 44px 48px,#d3deee 48px 52px,#f4f6fa 52px 56px,#f4f6fa 56px 60px,#eef3f9 60px 64px,#f4f6fa 64px 68px,#eef3f9 68px 72px,#e6ecf5 72px 76px,#eef3f9 76px 80px,#ffffff 80px 84px,#dfe7f2 84px 88px,#f4f6fa 88px 92px,#ffffff 92px 96px,#eef3f9 96px 100px,#e6ecf5 100px 104px,#dfe7f2 104px 108px,#eef3f9 108px 112px,#e6ecf5 112px 116px,#eef3f9 116px 120px,#dfe7f2 120px 124px,#c9d8ec 124px 128px,#e6ecf5 128px 132px,#d3deee 132px 136px,#ffffff 136px 140px,#eef3f9 140px 144px,#e6ecf5 144px 148px,#f4f6fa 148px 152px,#dfe7f2 152px 156px,#f4f6fa 156px 157px);background-size:100% 4px;background-position:0 0,0 4px,0 8px,0 12px;background-repeat:no-repeat"></span>场工程</div></div>
<div class="cell" style="left:587px;width:112px;"><div class="ci">分娩一、Ⅰ~6轴</div></div>
<div class="cell" style="left:699px;width:84px;"><div class="ci">C35</div></div>
<div class="cell" style="left:783px;width:84px;"><div class="ci">塔吊</div></div>
<div class="cell" style="left:867px;width:84px;"><div class="ci"></div></div>
<div class="cell" style="left:951px;width:122px;text-align:left;padding-left:7px;letter-spacing:-0.25px"><div class="ci">2021-10-14 06</div></div>
</div>
<div class="row" style="top:327px;width:1090px;height:31px;background:#fff;line-height:32px">
<div class="cell" style="left:0px;width:40px;padding:0"><div class="ci">18</div></div>
<div class="cell g" style="left:40px;width:85px;"><div class="ci">完成生产</div></div>
<div class="cell b" style="left:125px;width:84px;"><div class="ci">T21100119</div></div>
<div class="cell b" style="left:209px;width:168px;"><div class="ci"><span class="blur" style="width:105px;background:linear-gradient(90deg,#e6ecf5 0px 4px,#dfe7f2 4px 8px,#ffffff 8px 12px,#dfe7f2 12px 16px,#f4f6fa 16px 20px,#d3deee 20px 24px,#d3deee 24px 28px,#e6ecf5 28px 32px,#eef3f9 32px 36px,#f4f6fa 36px 40px,#dfe7f2 40px 44px,#ffffff 44px 48px,#d3deee 48px 52px,#eef3f9 52px 56px,#d3deee 56px 60px,#eef3f9 60px 64px,#ffffff 64px 68px,#dfe7f2 68px 72px,#eef3f9 72px 76px,#ffffff 76px 80px,#f4f6fa 80px 84px,#c9d8ec 84px 88px,#eef3f9 88px 92px,#f4f6fa 92px 96px,#e6ecf5 96px 100px,#eef3f9 100px 104px,#d3deee 104px 105px),linear-gradient(90deg,#a3b9dd 0px 4px,#a3b9dd 4px 8px,#c6d5ea 8px 12px,#8eb0da 12px 16px,#9fbde0 16px 20px,#accae6 20px 24px,#accae6 24px 28px,#d5dfee 28px 32px,#8eb0da 32px 36px,#accae6 36px 40px,#c0d0e8 40px 44px,#b8cce6 44px 48px,#d5dfee 48px 52px,#c0d0e8 52px 56px,#c0d0e8 56px 60px,#b8cce6 60px 64px,#8eb0da 64px 68px,#9fbde0 68px 72px,#c6d5ea 72px 76px,#c0d0e8 76px 80px,#accae6 80px 84px,#b8cce6 84px 88px,#accae6 88px 92px,#c6d5ea 92px 96px,#d5dfee 96px 100px,#a3b9dd 100px 104px,#accae6 104px 105px),linear-gradient(90deg,#c6d5ea 0px 4px,#c6d5ea 4px 8px,#b8cce6 8px 12px,#a3b9dd 12px 16px,#accae6 16px 20px,#a3b9dd 20px 24px,#8eb0da 24px 28px,#9fbde0 28px 32px,#accae6 32px 36px,#8eb0da 36px 40px,#9fbde0 40px 44px,#c0d0e8 44px 48px,#d5dfee 48px 52px,#8eb0da 52px 56px,#c0d0e8 56px 60px,#9fbde0 60px 64px,#accae6 64px 68px,#8eb0da 68px 72px,#d5dfee 72px 76px,#a3b9dd 76px 80px,#9fbde0 80px 84px,#a3b9dd 84px 88px,#c6d5ea 88px 92px,#accae6 92px 96px,#8eb0da 96px 100px,#8eb0da 100px 104px,#8eb0da 104px 105px),linear-gradient(90deg,#c9d8ec 0px 4px,#e6ecf5 4px 8px,#eef3f9 8px 12px,#ffffff 12px 16px,#eef3f9 16px 20px,#eef3f9 20px 24px,#c9d8ec 24px 28px,#dfe7f2 28px 32px,#e6ecf5 32px 36px,#dfe7f2 36px 40px,#c9d8ec 40px 44px,#ffffff 44px 48px,#f4f6fa 48px 52px,#e6ecf5 52px 56px,#d3deee 56px 60px,#eef3f9 60px 64px,#eef3f9 64px 68px,#eef3f9 68px 72px,#c9d8ec 72px 76px,#ffffff 76px 80px,#ffffff 80px 84px,#ffffff 84px 88px,#e6ecf5 88px 92px,#eef3f9 92px 96px,#c9d8ec 96px 100px,#d3deee 100px 104px,#eef3f9 104px 105px);background-size:100% 4px;background-position:0 0,0 4px,0 8px,0 12px;background-repeat:no-repeat"></span>（21栋）</div></div>
<div class="cell b" style="left:377px;width:210px;"><div class="ci"><span class="blur" style="width:145px;background:linear-gradient(90deg,#dfe7f2 0px 4px,#dfe7f2 4px 8px,#ffffff 8px 12px,#ffffff 12px 16px,#c9d8ec 16px 20px,#f4f6fa 20px 24px,#e6ecf5 24px 28px,#ffffff 28px 32px,#dfe7f2 32px 36px,#c9d8ec 36px 40px,#e6ecf5 40px 44px,#d3deee 44px 48px,#d3deee 48px 52px,#d3deee 52px 56px,#e6ecf5 56px 60px,#ffffff 60px 64px,#e6ecf5 64px 68px,#f4f6fa 68px 72px,#dfe7f2 72px 76px,#dfe7f2 76px 80px,#f4f6fa 80px 84px,#e6ecf5 84px 88px,#f4f6fa 88px 92px,#eef3f9 92px 96px,#e6ecf5 96px 100px,#ffffff 100px 104px,#d3deee 104px 108px,#eef3f9 108px 112px,#eef3f9 112px 116px,#c9d8ec 116px 120px,#e6ecf5 120px 124px,#d3deee 124px 128px,#dfe7f2 128px 132px,#eef3f9 132px 136px,#ffffff 136px 140px,#d3deee 140px 144px,#c9d8ec 144px 145px),linear-gradient(90deg,#9fbde0 0px 4px,#d5dfee 4px 8px,#c0d0e8 8px 12px,#b8cce6 12px 16px,#b8cce6 16px 20px,#d5dfee 20px 24px,#c6d5ea 24px 28px,#d5dfee 28px 32px,#a3b9dd 32px 36px,#9fbde0 36px 40px,#accae6 40px 44px,#b8cce6 44px 48px,#c0d0e8 48px 52px,#c0d0e8 52px 56px,#9fbde0 56px 60px,#8eb0da 60px 64px,#9fbde0 64px 68px,#c6d5ea 68px 72px,#b8cce6 72px 76px,#c6d5ea 76px 80px,#8eb0da 80px 84px,#8eb0da 84px 88px,#b8cce6 88px 92px,#accae6 92px 96px,#accae6 96px 100px,#9fbde0 100px 104px,#9fbde0 104px 108px,#b8cce6 108px 112px,#c6d5ea 112px 116px,#accae6 116px 120px,#9fbde0 120px 124px,#c0d0e8 124px 128px,#c6d5ea 128px 132px,#c0d0e8 132px 136px,#b8cce6 136px 140px,#d5dfee 140px 144px,#b8cce6 144px 145px),linear-gradient(90deg,#8eb0da 0px 4px,#9fbde0 4px 8px,#accae6 8px 12px,#b8cce6 12px 16px,#c0d0e8 16px 20px,#c0d0e8 20px 24px,#accae6 24px 28px,#b8cce6 28px 32px,#b8cce6 32px 36px,#b8cce6 36px 40px,#a3b9dd 40px 44px,#8eb0da 44px 48px,#c6d5ea 48px 52px,#c6d5ea 52px 56px,#8eb0da 56px 60px,#c0d0e8 60px 64px,#a3b9dd 64px 68px,#8eb0da 68px 72px,#9fbde0 72px 76px,#a3b9dd 76px 80px,#a3b9dd 80px 84px,#9fbde0 84px 88px,#a3b9dd 88px 92px,#9fbde0 92px 96px,#d5dfee 96px 100px,#d5dfee 100px 104px,#a3b9dd 104px 108px,#c6d5ea 108px 112px,#d5dfee 112px 116px,#a3b9dd 116px 120px,#d5dfee 120px 124px,#a3b9dd 124px 128px,#9fbde0 128px 132px,#d5dfee 132px 136px,#8eb0da 136px 140px,#d5dfee 140px 144px,#c6d5ea 144px 145px),linear-gradient(90deg,#e6ecf5 0px 4px,#f4f6fa 4px 8px,#ffffff 8px 12px,#ffffff 12px 16px,#dfe7f2 16px 20px,#d3deee 20px 24px,#dfe7f2 24px 28px,#c9d8ec 28px 32px,#eef3f9 32px 36px,#dfe7f2 36px 40px,#d3deee 40px 44px,#f4f6fa 44px 48px,#eef3f9 48px 52px,#c9d8ec 52px 56px,#ffffff 56px 60px,#dfe7f2 60px 64px,#eef3f9 64px 68px,#eef3f9 68px 72px,#f4f6fa 72px 76px,#f4f6fa 76px 80px,#e6ecf5 80px 84px,#f4f6fa 84px 88px,#ffffff 88px 92px,#dfe7f2 92px 96px,#e6ecf5 96px 100px,#dfe7f2 100px 104px,#dfe7f2 104px 108px,#e6ecf5 108px 112px,#ffffff 112px 116px,#c9d8ec 116px 120px,#d3deee 120px 124px,#ffffff 124px 128px,#c9d8ec 128px 132px,#d3deee 132px 136px,#ffffff 136px 140px,#c9d8ec 140px 144px,#e6ecf5 144px 145px);background-size:100% 4px;background-position:0 0,0 4px,0 8px,0 12px;background-repeat:no-repeat"></span>)</div></div>
<div class="cell" style="left:587px;width:112px;"><div class="ci">楼面</div></div>
<div class="cell" style="left:699px;width:84px;"><div class="ci">C30</div></div>
<div class="cell" style="left:783px;width:84px;"><div class="ci">天泵</div></div>
<div class="cell" style="left:867px;width:84px;"><div class="ci"></div></div>
<div class="cell" style="left:951px;width:122px;text-align:left;padding-left:7px;letter-spacing:-0.25px"><div class="ci">2021-10-14 06</div></div>
</div>
<div class="row" style="top:358px;width:1090px;height:31px;background:#f5f8f8;line-height:32px">
<div class="cell" style="left:0px;width:40px;padding:0"><div class="ci">19</div></div>
<div class="cell g" style="left:40px;width:85px;"><div class="ci">完成生产</div></div>
<div class="cell b" style="left:125px;width:84px;"><div class="ci">T21100118</div></div>
<div class="cell b" style="left:209px;width:168px;"><div class="ci"><span class="blur" style="width:92px;background:linear-gradient(90deg,#dfe7f2 0px 4px,#c9d8ec 4px 8px,#dfe7f2 8px 12px,#d3deee 12px 16px,#dfe7f2 16px 20px,#c9d8ec 20px 24px,#dfe7f2 24px 28px,#f4f6fa 28px 32px,#eef3f9 32px 36px,#dfe7f2 36px 40px,#d3deee 40px 44px,#dfe7f2 44px 48px,#d3deee 48px 52px,#d3deee 52px 56px,#ffffff 56px 60px,#eef3f9 60px 64px,#dfe7f2 64px 68px,#dfe7f2 68px 72px,#c9d8ec 72px 76px,#c9d8ec 76px 80px,#d3deee 80px 84px,#dfe7f2 84px 88px,#f4f6fa 88px 92px),linear-gradient(90deg,#8eb0da 0px 4px,#c0d0e8 4px 8px,#b8cce6 8px 12px,#8eb0da 12px 16px,#accae6 16px 20px,#a3b9dd 20px 24px,#accae6 24px 28px,#accae6 28px 32px,#c6d5ea 32px 36px,#b8cce6 36px 40px,#accae6 40px 44px,#c0d0e8 44px 48px,#c6d5ea 48px 52px,#a3b9dd 52px 56px,#c6d5ea 56px 60px,#d5dfee 60px 64px,#c0d0e8 64px 68px,#accae6 68px 72px,#c0d0e8 72px 76px,#c0d0e8 76px 80px,#accae6 80px 84px,#9fbde0 84px 88px,#c6d5ea 88px 92px),linear-gradient(90deg,#d5dfee 0px 4px,#c6d5ea 4px 8px,#c6d5ea 8px 12px,#a3b9dd 12px 16px,#a3b9dd 16px 20px,#9fbde0 20px 24px,#d5dfee 24px 28px,#8eb0da 28px 32px,#c6d5ea 32px 36px,#d5dfee 36px 40px,#d5dfee 40px 44px,#c0d0e8 44px 48px,#accae6 48px 52px,#accae6 52px 56px,#c6d5ea 56px 60px,#accae6 60px 64px,#9fbde0 64px 68px,#9fbde0 68px 72px,#8eb0da 72px 76px,#b8cce6 76px 80px,#d5dfee 80px 84px,#c0d0e8 84px 88px,#9fbde0 88px 92px),linear-gradient(90deg,#c9d8ec 0px 4px,#f4f6fa 4px 8px,#e6ecf5 8px 12px,#f4f6fa 12px 16px,#d3deee 16px 20px,#ffffff 20px 24px,#e6ecf5 24px 28px,#dfe7f2 28px 32px,#c9d8ec 32px 36px,#eef3f9 36px 40px,#ffffff 40px 44px,#ffffff 44px 48px,#eef3f9 48px 52px,#f4f6fa 52px 56px,#d3deee 56px 60px,#ffffff 60px 64px,#d3deee 64px 68px,#eef3f9 68px 72px,#ffffff 72px 76px,#eef3f9 76px 80px,#c9d8ec 80px 84px,#c9d8ec 84px 88px,#e6ecf5 88px 92px);background-size:100% 4px;background-position:0 0,0 4px,0 8px,0 12px;background-repeat:no-repeat"></span>限公司</div></div>
<div class="cell b" style="left:377px;width:210px;"><div class="ci"><span class="blur" style="width:156px;background:linear-gradient(90deg,#d3deee 0px 4px,#e6ecf5 4px 8px,#e6ecf5 8px 12px,#c9d8ec 12px 16px,#dfe7f2 16px 20px,#ffffff 20px 24px,#e6ecf5 24px 28px,#ffffff 28px 32px,#e6ecf5 32px 36px,#f4f6fa 36px 40px,#d3deee 40px 44px,#e6ecf5 44px 48px,#ffffff 48px 52px,#ffffff 52px 56px,#ffffff 56px 60px,#ffffff 60px 64px,#eef3f9 64px 68px,#f4f6fa 68px 72px,#e6ecf5 72px 76px,#dfe7f2 76px 80px,#dfe7f2 80px 84px,#f4f6fa 84px 88px,#e6ecf5 88px 92px,#c9d8ec 92px 96px,#c9d8ec 96px 100px,#dfe7f2 100px 104px,#f4f6fa 104px 108px,#f4f6fa 108px 112px,#c9d8ec 112px 116px,#eef3f9 116px 120px,#f4f6fa 120px 124px,#e6ecf5 124px 128px,#e6ecf5 128px 132px,#d3deee 132px 136px,#e6ecf5 136px 140px,#c9d8ec 140px 144px,#c9d8ec 144px 148px,#dfe7f2 148px 152px,#f4f6fa 152px 156px),linear-gradient(90deg,#c0d0e8 0px 4px,#c0d0e8 4px 8px,#accae6 8px 12px,#d5dfee 12px 16px,#accae6 16px 20px,#d5dfee 20px 24px,#a3b9dd 24px 28px,#a3b9dd 28px 32px,#d5dfee 32px 36px,#9fbde0 36px 40px,#c0d0e8 40px 44px,#a3b9dd 44px 48px,#c0d0e8 48px 52px,#accae6 52px 56px,#8eb0da 56px 60px,#accae6 60px 64px,#8eb0da 64px 68px,#a3b9dd 68px 72px,#a3b9dd 72px 76px,#c6d5ea 76px 80px,#b8cce6 80px 84px,#d5dfee 84px 88px,#d5dfee 88px 92px,#c6d5ea 92px 96px,#d5dfee 96px 100px,#c6d5ea 100px 104px,#a3b9dd 104px 108px,#9fbde0 108px 112px,#9fbde0 112px 116px,#9fbde0 116px 120px,#accae6 120px 124px,#c0d0e8 124px 128px,#accae6 128px 132px,#accae6 132px 136px,#a3b9dd 136px 140px,#a3b9dd 140px 144px,#a3b9dd 144px 148px,#c0d0e8 148px 152px,#d5dfee 152px 156px),linear-gradient(90deg,#9fbde0 0px 4px,#d5dfee 4px 8px,#c0d0e8 8px 12px,#9fbde0 12px 16px,#b8cce6 16px 20px,#c6d5ea 20px 24px,#b8cce6 24px 28px,#a3b9dd 28px 32px,#d5dfee 32px 36px,#a3b9dd 36px 40px,#8eb0da 40px 44px,#c6d5ea 44px 48px,#a3b9dd 48px 52px,#c0d0e8 52px 56px,#a3b9dd 56px 60px,#c0d0e8 60px 64px,#d5dfee 64px 68px,#b8cce6 68px 72px,#8eb0da 72px 76px,#d5dfee 76px 80px,#d5dfee 80px 84px,#d5dfee 84px 88px,#b8cce6 88px 92px,#accae6 92px 96px,#8eb0da 96px 100px,#b8cce6 100px 104px,#accae6 104px 108px,#d5dfee 108px 112px,#a3b9dd 112px 116px,#8eb0da 116px 120px,#accae6 120px 124px,#c6d5ea 124px 128px,#c6d5ea 128px 132px,#a3b9dd 132px 136px,#8eb0da 136px 140px,#9fbde0 140px 144px,#b8cce6 144px 148px,#d5dfee 148px 152px,#9fbde0 152px 156px),linear-gradient(90deg,#ffffff 0px 4px,#f4f6fa 4px 8px,#dfe7f2 8px 12px,#e6ecf5 12px 16px,#dfe7f2 16px 20px,#d3deee 20px 24px,#ffffff 24px 28px,#ffffff 28px 32px,#c9d8ec 32px 36px,#dfe7f2 36px 40px,#d3deee 40px 44px,#f4f6fa 44px 48px,#e6ecf5 48px 52px,#dfe7f2 52px 56px,#c9d8ec 56px 60px,#dfe7f2 60px 64px,#ffffff 64px 68px,#dfe7f2 68px 72px,#eef3f9 72px 76px,#eef3f9 76px 80px,#f4f6fa 80px 84px,#e6ecf5 84px 88px,#c9d8ec 88px 92px,#c9d8ec 92px 96px,#d3deee 96px 100px,#e6ecf5 100px 104px,#ffffff 104px 108px,#c9d8ec 108px 112px,#c9d8ec 112px 116px,#eef3f9 116px 120px,#c9d8ec 120px 124px,#eef3f9 124px 128px,#f4f6fa 128px 132px,#c9d8ec 132px 136px,#dfe7f2 136px 140px,#eef3f9 140px 144px,#eef3f9 144px 148px,#c9d8ec 148px 152px,#e6ecf5 152px 156px);background-size:100% 4px;background-position:0 0,0 4px,0 8px,0 12px;background-repeat:no-repeat"></span>传中心</div></div>
<div class="cell" style="left:587px;width:112px;"><div class="ci">罐底保护层</div></div>
<div class="cell" style="left:699px;width:84px;"><div class="ci">M10砂浆</div></div>
<div class="cell" style="left:783px;width:84px;"><div class="ci">自卸</div></div>
<div class="cell" style="left:867px;width:84px;"><div class="ci"></div></div>
<div class="cell" style="left:951px;width:122px;text-align:left;padding-left:7px;letter-spacing:-0.25px"><div class="ci">2021-10-14 06</div></div>
</div>
<div class="row" style="top:389px;width:1090px;height:31px;background:#fff;line-height:32px">
<div class="cell" style="left:0px;width:40px;padding:0"><div class="ci">20</div></div>
<div class="cell g" style="left:40px;width:85px;"><div class="ci">完成生产</div></div>
<div class="cell b" style="left:125px;width:84px;"><div class="ci">T21100117</div></div>
<div class="cell b" style="left:209px;width:168px;"><div class="ci"><span class="blur" style="width:105px;background:linear-gradient(90deg,#c9d8ec 0px 4px,#dfe7f2 4px 8px,#dfe7f2 8px 12px,#dfe7f2 12px 16px,#dfe7f2 16px 20px,#eef3f9 20px 24px,#c9d8ec 24px 28px,#f4f6fa 28px 32px,#e6ecf5 32px 36px,#f4f6fa 36px 40px,#c9d8ec 40px 44px,#f4f6fa 44px 48px,#e6ecf5 48px 52px,#e6ecf5 52px 56px,#dfe7f2 56px 60px,#ffffff 60px 64px,#dfe7f2 64px 68px,#ffffff 68px 72px,#e6ecf5 72px 76px,#c9d8ec 76px 80px,#d3deee 80px 84px,#eef3f9 84px 88px,#ffffff 88px 92px,#eef3f9 92px 96px,#d3deee 96px 100px,#d3deee 100px 104px,#eef3f9 104px 105px),linear-gradient(90deg,#9fbde0 0px 4px,#accae6 4px 8px,#b8cce6 8px 12px,#b8cce6 12px 16px,#d5dfee 16px 20px,#c6d5ea 20px 24px,#c0d0e8 24px 28px,#a3b9dd 28px 32px,#9fbde0 32px 36px,#9fbde0 36px 40px,#c6d5ea 40px 44px,#a3b9dd 44px 48px,#9fbde0 48px 52px,#c0d0e8 52px 56px,#9fbde0 56px 60px,#c6d5ea 60px 64px,#c6d5ea 64px 68px,#c6d5ea 68px 72px,#9fbde0 72px 76px,#8eb0da 76px 80px,#8eb0da 80px 84px,#d5dfee 84px 88px,#9fbde0 88px 92px,#c0d0e8 92px 96px,#accae6 96px 100px,#a3b9dd 100px 104px,#accae6 104px 105px),linear-gradient(90deg,#c0d0e8 0px 4px,#b8cce6 4px 8px,#c6d5ea 8px 12px,#a3b9dd 12px 16px,#c6d5ea 16px 20px,#a3b9dd 20px 24px,#accae6 24px 28px,#a3b9dd 28px 32px,#c0d0e8 32px 36px,#9fbde0 36px 40px,#c6d5ea 40px 44px,#b8cce6 44px 48px,#8eb0da 48px 52px,#8eb0da 52px 56px,#d5dfee 56px 60px,#a3b9dd 60px 64px,#8eb0da 64px 68px,#9fbde0 68px 72px,#accae6 72px 76px,#a3b9dd 76px 80px,#d5dfee 80px 84px,#b8cce6 84px 88px,#d5dfee 88px 92px,#a3b9dd 92px 96px,#d5dfee 96px 100px,#a3b9dd 100px 104px,#b8cce6 104px 105px),linear-gradient(90deg,#dfe7f2 0px 4px,#f4f6fa 4px 8px,#e6ecf5 8px 12px,#d3deee 12px 16px,#c9d8ec 16px 20px,#eef3f9 20px 24px,#f4f6fa 24px 28px,#eef3f9 28px 32px,#f4f6fa 32px 36px,#d3deee 36px 40px,#d3deee 40px 44px,#eef3f9 44px 48px,#f4f6fa 48px 52px,#dfe7f2 52px 56px,#d3deee 56px 60px,#ffffff 60px 64px,#dfe7f2 64px 68px,#d3deee 68px 72px,#e6ecf5 72px 76px,#eef3f9 76px 80px,#eef3f9 80px 84px,#ffffff 84px 88px,#eef3f9 88px 92px,#dfe7f2 92px 96px,#eef3f9 96px 100px,#d3deee 100px 104px,#c9d8ec 104px 105px);background-size:100% 4px;background-position:0 0,0 4px,0 8px,0 12px;background-repeat:no-repeat"></span>有限公司</div></div>
<div class="cell b" style="left:377px;width:210px;"><div class="ci"><span class="blur" style="width:157px;background:linear-gradient(90deg,#e6ecf5 0px 4px,#e6ecf5 4px 8px,#eef3f9 8px 12px,#c9d8ec 12px 16px,#f4f6fa 16px 20px,#f4f6fa 20px 24px,#e6ecf5 24px 28px,#e6ecf5 28px 32px,#e6ecf5 32px 36px,#eef3f9 36px 40px,#eef3f9 40px 44px,#d3deee 44px 48px,#d3deee 48px 52px,#eef3f9 52px 56px,#ffffff 56px 60px,#f4f6fa 60px 64px,#f4f6fa 64px 68px,#ffffff 68px 72px,#c9d8ec 72px 76px,#eef3f9 76px 80px,#d3deee 80px 84px,#f4f6fa 84px 88px,#c9d8ec 88px 92px,#eef3f9 92px 96px,#eef3f9 96px 100px,#e6ecf5 100px 104px,#f4f6fa 104px 108px,#ffffff 108px 112px,#eef3f9 112px 116px,#ffffff 116px 120px,#d3deee 120px 124px,#c9d8ec 124px 128px,#f4f6fa 128px 132px,#c9d8ec 132px 136px,#d3deee 136px 140px,#c9d8ec 140px 144px,#eef3f9 144px 148px,#f4f6fa 148px 152px,#c9d8ec 152px 156px,#c9d8ec 156px 157px),linear-gradient(90deg,#c6d5ea 0px 4px,#8eb0da 4px 8px,#b8cce6 8px 12px,#b8cce6 12px 16px,#accae6 16px 20px,#a3b9dd 20px 24px,#9fbde0 24px 28px,#8eb0da 28px 32px,#accae6 32px 36px,#9fbde0 36px 40px,#a3b9dd 40px 44px,#b8cce6 44px 48px,#8eb0da 48px 52px,#c6d5ea 52px 56px,#d5dfee 56px 60px,#c6d5ea 60px 64px,#b8cce6 64px 68px,#b8cce6 68px 72px,#d5dfee 72px 76px,#accae6 76px 80px,#c6d5ea 80px 84px,#b8cce6 84px 88px,#accae6 88px 92px,#b8cce6 92px 96px,#c6d5ea 96px 100px,#accae6 100px 104px,#8eb0da 104px 108px,#a3b9dd 108px 112px,#accae6 112px 116px,#d5dfee 116px 120px,#a3b9dd 120px 124px,#c0d0e8 124px 128px,#8eb0da 128px 132px,#accae6 132px 136px,#8eb0da 136px 140px,#9fbde0 140px 144px,#d5dfee 144px 148px,#d5dfee 148px 152px,#a3b9dd 152px 156px,#9fbde0 156px 157px),linear-gradient(90deg,#c0d0e8 0px 4px,#c6d5ea 4px 8px,#a3b9dd 8px 12px,#d5dfee 12px 16px,#b8cce6 16px 20px,#8eb0da 20px 24px,#accae6 24px 28px,#b8cce6 28px 32px,#accae6 32px 36px,#c6d5ea 36px 40px,#9fbde0 40px 44px,#a3b9dd 44px 48px,#9fbde0 48px 52px,#8eb0da 52px 56px,#a3b9dd 56px 60px,#c6d5ea 60px 64px,#accae6 64px 68px,#8eb0da 68px 72px,#a3b9dd 72px 76px,#9fbde0 76px 80px,#accae6 80px 84px,#8eb0da 84px 88px,#c6d5ea 88px 92px,#c0d0e8 92px 96px,#accae6 96px 100px,#a3b9dd 100px 104px,#d5dfee 104px 108px,#9fbde0 108px 112px,#b8cce6 112px 116px,#accae6 116px 120px,#9fbde0 120px 124px,#9fbde0 124px 128px,#c6d5ea 128px 132px,#b8cce6 132px 136px,#9fbde0 136px 140px,#d5dfee 140px 144px,#c6d5ea 144px 148px,#d5dfee 148px 152px,#b8cce6 152px 156px,#a3b9dd 156px 157px),linear-gradient(90deg,#ffffff 0px 4px,#ffffff 4px 8px,#f4f6fa 8px 12px,#ffffff 12px 16px,#c9d8ec 16px 20px,#e6ecf5 20px 24px,#eef3f9 24px 28px,#d3deee 28px 32px,#c9d8ec 32px 36px,#dfe7f2 36px 40px,#d3deee 40px 44px,#f4f6fa 44px 48px,#f4f6fa 48px 52px,#d3deee 52px 56px,#ffffff 56px 60px,#c9d8ec 60px 64px,#ffffff 64px 68px,#ffffff 68px 72px,#e6ecf5 72px 76px,#e6ecf5 76px 80px,#ffffff 80px 84px,#ffffff 84px 88px,#f4f6fa 88px 92px,#c9d8ec 92px 96px,#dfe7f2 96px 100px,#ffffff 100px 104px,#ffffff 104px 108px,#eef3f9 108px 112px,#f4f6fa 112px 116px,#ffffff 116px 120px,#c9d8ec 120px 124px,#e6ecf5 124px 128px,#e6ecf5 128px 132px,#eef3f9 132px 136px,#f4f6fa 136px 140px,#e6ecf5 140px 144px,#eef3f9 144px 148px,#dfe7f2 148px 152px,#ffffff 152px 156px,#e6ecf5 156px 157px);background-size:100% 4px;background-position:0 0,0 4px,0 8px,0 12px;background-repeat:no-repeat"></span>场工程</div></div>
<div class="cell" style="left:587px;width:112px;"><div class="ci">分娩二1~6轴、二</div></div>
<div class="cell" style="left:699px;width:84px;"><div class="ci">C35P6(河沙</div></div>
<div class="cell" style="left:783px;width:84px;"><div class="ci">天泵</div></div>
<div class="cell" style="left:867px;width:84px;"><div class="ci"></div></div>
<div class="cell" style="left:951px;width:122px;text-align:left;padding-left:7px;letter-spacing:-0.25px"><div class="ci">2021-10-14 06</div></div>
</div>
<div class="row" style="top:420px;width:1090px;height:31px;background:#f5f8f8;line-height:32px">
<div class="cell" style="left:0px;width:40px;padding:0"><div class="ci">21</div></div>
<div class="cell g" style="left:40px;width:85px;"><div class="ci">完成生产</div></div>
<div class="cell b" style="left:125px;width:84px;"><div class="ci">T21100116</div></div>
<div class="cell b" style="left:209px;width:168px;"><div class="ci"><span class="blur" style="width:105px;background:linear-gradient(90deg,#e6ecf5 0px 4px,#c9d8ec 4px 8px,#d3deee 8px 12px,#eef3f9 12px 16px,#c9d8ec 16px 20px,#eef3f9 20px 24px,#e6ecf5 24px 28px,#ffffff 28px 32px,#eef3f9 32px 36px,#c9d8ec 36px 40px,#d3deee 40px 44px,#eef3f9 44px 48px,#dfe7f2 48px 52px,#eef3f9 52px 56px,#d3deee 56px 60px,#d3deee 60px 64px,#f4f6fa 64px 68px,#dfe7f2 68px 72px,#eef3f9 72px 76px,#ffffff 76px 80px,#d3deee 80px 84px,#eef3f9 84px 88px,#eef3f9 88px 92px,#ffffff 92px 96px,#ffffff 96px 100px,#f4f6fa 100px 104px,#ffffff 104px 105px),linear-gradient(90deg,#c0d0e8 0px 4px,#c6d5ea 4px 8px,#c6d5ea 8px 12px,#9fbde0 12px 16px,#c0d0e8 16px 20px,#8eb0da 20px 24px,#d5dfee 24px 28px,#accae6 28px 32px,#8eb0da 32px 36px,#8eb0da 36px 40px,#c6d5ea 40px 44px,#d5dfee 44px 48px,#b8cce6 48px 52px,#a3b9dd 52px 56px,#8eb0da 56px 60px,#8eb0da 60px 64px,#c0d0e8 64px 68px,#a3b9dd 68px 72px,#c6d5ea 72px 76px,#b8cce6 76px 80px,#accae6 80px 84px,#9fbde0 84px 88px,#d5dfee 88px 92px,#c0d0e8 92px 96px,#c6d5ea 96px 100px,#9fbde0 100px 104px,#9fbde0 104px 105px),linear-gradient(90deg,#accae6 0px 4px,#accae6 4px 8px,#c6d5ea 8px 12px,#b8cce6 12px 16px,#accae6 16px 20px,#c0d0e8 20px 24px,#b8cce6 24px 28px,#8eb0da 28px 32px,#d5dfee 32px 36px,#c0d0e8 36px 40px,#c0d0e8 40px 44px,#d5dfee 44px 48px,#accae6 48px 52px,#8eb0da 52px 56px,#b8cce6 56px 60px,#9fbde0 60px 64px,#9fbde0 64px 68px,#c0d0e8 68px 72px,#c0d0e8 72px 76px,#b8cce6 76px 80px,#d5dfee 80px 84px,#accae6 84px 88px,#b8cce6 88px 92px,#c0d0e8 92px 96px,#a3b9dd 96px 100px,#c0d0e8 100px 104px,#c6d5ea 104px 105px),linear-gradient(90deg,#e6ecf5 0px 4px,#c9d8ec 4px 8px,#d3deee 8px 12px,#dfe7f2 12px 16px,#d3deee 16px 20px,#dfe7f2 20px 24px,#ffffff 24px 28px,#d3deee 28px 32px,#ffffff 32px 36px,#c9d8ec 36px 40px,#ffffff 40px 44px,#ffffff 44px 48px,#ffffff 48px 52px,#d3deee 52px 56px,#ffffff 56px 60px,#eef3f9 60px 64px,#dfe7f2 64px 68px,#eef3f9 68px 72px,#ffffff 72px 76px,#dfe7f2 76px 80px,#dfe7f2 80px 84px,#e6ecf5 84px 88px,#f4f6fa 88px 92px,#e6ecf5 92px 96px,#eef3f9 96px 100px,#d3deee 100px 104px,#d3deee 104px 105px);background-size:100% 4px;background-position:0 0,0 4px,0 8px,0 12px;background-repeat:no-repeat"></span>限公司望</div></div>
<div class="cell b" style="left:377px;width:210px;"><div class="ci"><span class="blur" style="width:112px;background:linear-gradient(90deg,#eef3f9 0px 4px,#ffffff 4px 8px,#c9d8ec 8px 12px,#e6ecf5 12px 16px,#ffffff 16px 20px,#eef3f9 20px 24px,#dfe7f2 24px 28px,#e6ecf5 28px 32px,#ffffff 32px 36px,#e6ecf5 36px 40px,#d3deee 40px 44px,#ffffff 44px 48px,#c9d8ec 48px 52px,#d3deee 52px 56px,#f4f6fa 56px 60px,#eef3f9 60px 64px,#ffffff 64px 68px,#e6ecf5 68px 72px,#d3deee 72px 76px,#d3deee 76px 80px,#eef3f9 80px 84px,#d3deee 84px 88px,#eef3f9 88px 92px,#c9d8ec 92px 96px,#d3deee 96px 100px,#e6ecf5 100px 104px,#e6ecf5 104px 108px,#d3deee 108px 112px),linear-gradient(90deg,#c6d5ea 0px 4px,#9fbde0 4px 8px,#9fbde0 8px 12px,#b8cce6 12px 16px,#a3b9dd 16px 20px,#9fbde0 20px 24px,#c6d5ea 24px 28px,#c0d0e8 28px 32px,#a3b9dd 32px 36px,#c0d0e8 36px 40px,#8eb0da 40px 44px,#accae6 44px 48px,#b8cce6 48px 52px,#8eb0da 52px 56px,#c6d5ea 56px 60px,#8eb0da 60px 64px,#8eb0da 64px 68px,#c0d0e8 68px 72px,#a3b9dd 72px 76px,#b8cce6 76px 80px,#9fbde0 80px 84px,#c0d0e8 84px 88px,#c0d0e8 88px 92px,#c6d5ea 92px 96px,#c6d5ea 96px 100px,#d5dfee 100px 104px,#9fbde0 104px 108px,#9fbde0 108px 112px),linear-gradient(90deg,#a3b9dd 0px 4px,#8eb0da 4px 8px,#accae6 8px 12px,#b8cce6 12px 16px,#9fbde0 16px 20px,#a3b9dd 20px 24px,#d5dfee 24px 28px,#b8cce6 28px 32px,#c0d0e8 32px 36px,#9fbde0 36px 40px,#8eb0da 40px 44px,#8eb0da 44px 48px,#a3b9dd 48px 52px,#accae6 52px 56px,#9fbde0 56px 60px,#c0d0e8 60px 64px,#d5dfee 64px 68px,#c6d5ea 68px 72px,#c0d0e8 72px 76px,#b8cce6 76px 80px,#d5dfee 80px 84px,#c0d0e8 84px 88px,#a3b9dd 88px 92px,#8eb0da 92px 96px,#a3b9dd 96px 100px,#b8cce6 100px 104px,#9fbde0 104px 108px,#d5dfee 108px 112px),linear-gradient(90deg,#c9d8ec 0px 4px,#ffffff 4px 8px,#d3deee 8px 12px,#c9d8ec 12px 16px,#c9d8ec 16px 20px,#f4f6fa 20px 24px,#d3deee 24px 28px,#f4f6fa 28px 32px,#ffffff 32px 36px,#ffffff 36px 40px,#eef3f9 40px 44px,#d3deee 44px 48px,#e6ecf5 48px 52px,#d3deee 52px 56px,#c9d8ec 56px 60px,#ffffff 60px 64px,#dfe7f2 64px 68px,#e6ecf5 68px 72px,#eef3f9 72px 76px,#eef3f9 76px 80px,#ffffff 80px 84px,#ffffff 84px 88px,#f4f6fa 88px 92px,#ffffff 92px 96px,#dfe7f2 96px 100px,#eef3f9 100px 104px,#ffffff 104px 108px,#c9d8ec 108px 112px);background-size:100% 4px;background-position:0 0,0 4px,0 8px,0 12px;background-repeat:no-repeat"></span></div></div>
<div class="cell" style="left:587px;width:112px;"><div class="ci">12号栋电梯井换填</div></div>
<div class="cell" style="left:699px;width:84px;"><div class="ci">C20</div></div>
<div class="cell" style="left:783px;width:84px;"><div class="ci">天泵</div></div>
<div class="cell" style="left:867px;width:84px;"><div class="ci"></div></div>
<div class="cell" style="left:951px;width:122px;text-align:left;padding-left:7px;letter-spacing:-0.25px"><div class="ci">2021-10-13 06</div></div>
</div>
<div class="row" style="top:451px;width:1090px;height:31px;background:#eef0f5;line-height:32px">
<div class="cell" style="left:0px;width:40px;padding:0"><div class="ci">22</div></div>
<div class="cell g" style="left:40px;width:85px;"><div class="ci">完成生产</div></div>
<div class="cell b" style="left:125px;width:84px;"><div class="ci">T21100113</div></div>
<div class="cell b" style="left:209px;width:168px;"><div class="ci"><span class="blur" style="width:105px;background:linear-gradient(90deg,#d3deee 0px 4px,#c9d8ec 4px 8px,#c9d8ec 8px 12px,#f4f6fa 12px 16px,#d3deee 16px 20px,#c9d8ec 20px 24px,#eef3f9 24px 28px,#c9d8ec 28px 32px,#f4f6fa 32px 36px,#f4f6fa 36px 40px,#d3deee 40px 44px,#dfe7f2 44px 48px,#eef3f9 48px 52px,#eef3f9 52px 56px,#eef3f9 56px 60px,#c9d8ec 60px 64px,#ffffff 64px 68px,#dfe7f2 68px 72px,#eef3f9 72px 76px,#e6ecf5 76px 80px,#e6ecf5 80px 84px,#d3deee 84px 88px,#ffffff 88px 92px,#dfe7f2 92px 96px,#eef3f9 96px 100px,#c9d8ec 100px 104px,#ffffff 104px 105px),linear-gradient(90deg,#accae6 0px 4px,#c0d0e8 4px 8px,#c6d5ea 8px 12px,#c0d0e8 12px 16px,#c6d5ea 16px 20px,#b8cce6 20px 24px,#b8cce6 24px 28px,#a3b9dd 28px 32px,#b8cce6 32px 36px,#c0d0e8 36px 40px,#8eb0da 40px 44px,#b8cce6 44px 48px,#b8cce6 48px 52px,#c0d0e8 52px 56px,#a3b9dd 56px 60px,#8eb0da 60px 64px,#c6d5ea 64px 68px,#c0d0e8 68px 72px,#b8cce6 72px 76px,#8eb0da 76px 80px,#d5dfee 80px 84px,#9fbde0 84px 88px,#a3b9dd 88px 92px,#c6d5ea 92px 96px,#9fbde0 96px 100px,#d5dfee 100px 104px,#9fbde0 104px 105px),linear-gradient(90deg,#9fbde0 0px 4px,#c6d5ea 4px 8px,#c0d0e8 8px 12px,#accae6 12px 16px,#b8cce6 16px 20px,#8eb0da 20px 24px,#a3b9dd 24px 28px,#b8cce6 28px 32px,#c6d5ea 32px 36px,#b8cce6 36px 40px,#d5dfee 40px 44px,#8eb0da 44px 48px,#d5dfee 48px 52px,#d5dfee 52px 56px,#9fbde0 56px 60px,#accae6 60px 64px,#b8cce6 64px 68px,#c6d5ea 68px 72px,#d5dfee 72px 76px,#d5dfee 76px 80px,#c0d0e8 80px 84px,#9fbde0 84px 88px,#d5dfee 88px 92px,#b8cce6 92px 96px,#d5dfee 96px 100px,#d5dfee 100px 104px,#b8cce6 104px 105px),linear-gradient(90deg,#dfe7f2 0px 4px,#ffffff 4px 8px,#eef3f9 8px 12px,#d3deee 12px 16px,#d3deee 16px 20px,#eef3f9 20px 24px,#ffffff 24px 28px,#f4f6fa 28px 32px,#dfe7f2 32px 36px,#e6ecf5 36px 40px,#c9d8ec 40px 44px,#f4f6fa 44px 48px,#dfe7f2 48px 52px,#e6ecf5 52px 56px,#dfe7f2 56px 60px,#f4f6fa 60px 64px,#dfe7f2 64px 68px,#dfe7f2 68px 72px,#e6ecf5 72px 76px,#d3deee 76px 80px,#eef3f9 80px 84px,#eef3f9 84px 88px,#c9d8ec 88px 92px,#d3deee 92px 96px,#e6ecf5 96px 100px,#ffffff 100px 104px,#ffffff 104px 105px);background-size:100% 4px;background-position:0 0,0 4px,0 8px,0 12px;background-repeat:no-repeat"></span>限公司望</div></div>
<div class="cell b" style="left:377px;width:210px;"><div class="ci"><span class="blur" style="width:112px;background:linear-gradient(90deg,#f4f6fa 0px 4px,#e6ecf5 4px 8px,#eef3f9 8px 12px,#c9d8ec 12px 16px,#d3deee 16px 20px,#c9d8ec 20px 24px,#ffffff 24px 28px,#e6ecf5 28px 32px,#e6ecf5 32px 36px,#d3deee 36px 40px,#f4f6fa 40px 44px,#dfe7f2 44px 48px,#dfe7f2 48px 52px,#d3deee 52px 56px,#eef3f9 56px 60px,#f4f6fa 60px 64px,#c9d8ec 64px 68px,#f4f6fa 68px 72px,#e6ecf5 72px 76px,#dfe7f2 76px 80px,#e6ecf5 80px 84px,#e6ecf5 84px 88px,#dfe7f2 88px 92px,#dfe7f2 92px 96px,#eef3f9 96px 100px,#c9d8ec 100px 104px,#e6ecf5 104px 108px,#ffffff 108px 112px),linear-gradient(90deg,#a3b9dd 0px 4px,#c0d0e8 4px 8px,#8eb0da 8px 12px,#c0d0e8 12px 16px,#a3b9dd 16px 20px,#c6d5ea 20px 24px,#b8cce6 24px 28px,#d5dfee 28px 32px,#d5dfee 32px 36px,#c6d5ea 36px 40px,#accae6 40px 44px,#8eb0da 44px 48px,#9fbde0 48px 52px,#c6d5ea 52px 56px,#8eb0da 56px 60px,#d5dfee 60px 64px,#c0d0e8 64px 68px,#d5dfee 68px 72px,#c0d0e8 72px 76px,#a3b9dd 76px 80px,#d5dfee 80px 84px,#d5dfee 84px 88px,#9fbde0 88px 92px,#d5dfee 92px 96px,#c0d0e8 96px 100px,#d5dfee 100px 104px,#c6d5ea 104px 108px,#9fbde0 108px 112px),linear-gradient(90deg,#c6d5ea 0px 4px,#c0d0e8 4px 8px,#9fbde0 8px 12px,#8eb0da 12px 16px,#8eb0da 16px 20px,#accae6 20px 24px,#a3b9dd 24px 28px,#accae6 28px 32px,#b8cce6 32px 36px,#accae6 36px 40px,#d5dfee 40px 44px,#8eb0da 44px 48px,#9fbde0 48px 52px,#b8cce6 52px 56px,#c6d5ea 56px 60px,#a3b9dd 60px 64px,#b8cce6 64px 68px,#d5dfee 68px 72px,#accae6 72px 76px,#c6d5ea 76px 80px,#8eb0da 80px 84px,#b8cce6 84px 88px,#accae6 88px 92px,#d5dfee 92px 96px,#d5dfee 96px 100px,#c6d5ea 100px 104px,#d5dfee 104px 108px,#a3b9dd 108px 112px),linear-gradient(90deg,#d3deee 0px 4px,#dfe7f2 4px 8px,#ffffff 8px 12px,#d3deee 12px 16px,#ffffff 16px 20px,#d3deee 20px 24px,#e6ecf5 24px 28px,#f4f6fa 28px 32px,#c9d8ec 32px 36px,#d3deee 36px 40px,#eef3f9 40px 44px,#e6ecf5 44px 48px,#eef3f9 48px 52px,#d3deee 52px 56px,#eef3f9 56px 60px,#eef3f9 60px 64px,#eef3f9 64px 68px,#dfe7f2 68px 72px,#e6ecf5 72px 76px,#ffffff 76px 80px,#f4f6fa 80px 84px,#f4f6fa 84px 88px,#f4f6fa 88px 92px,#f4f6fa 92px 96px,#c9d8ec 96px 100px,#e6ecf5 100px 104px,#d3deee 104px 108px,#eef3f9 108px 112px);background-size:100% 4px;background-position:0 0,0 4px,0 8px,0 12px;background-repeat:no-repeat"></span></div></div>
<div class="cell" style="left:587px;width:112px;background:#c7ddf1"><div class="ci">12号栋场地硬化</div></div>
<div class="cell" style="left:699px;width:84px;"><div class="ci">C25</div></div>
<div class="cell" style="left:783px;width:84px;"><div class="ci">天泵</div></div>
<div class="cell" style="left:867px;width:84px;"><div class="ci"></div></div>
<div class="cell" style="left:951px;width:122px;text-align:left;padding-left:7px;letter-spacing:-0.25px"><div class="ci">2021-10-13 06</div></div>
</div>
<div class="row" style="top:482px;width:1090px;height:31px;background:#f5f8f8;line-height:32px">
<div class="cell" style="left:0px;width:40px;padding:0"><div class="ci">23</div></div>
<div class="cell g" style="left:40px;width:85px;"><div class="ci">完成生产</div></div>
<div class="cell b" style="left:125px;width:84px;"><div class="ci">T21100110</div></div>
<div class="cell b" style="left:209px;width:168px;"><div class="ci"><span class="blur" style="width:105px;background:linear-gradient(90deg,#c9d8ec 0px 4px,#dfe7f2 4px 8px,#eef3f9 8px 12px,#d3deee 12px 16px,#ffffff 16px 20px,#d3deee 20px 24px,#d3deee 24px 28px,#ffffff 28px 32px,#c9d8ec 32px 36px,#c9d8ec 36px 40px,#ffffff 40px 44px,#d3deee 44px 48px,#dfe7f2 48px 52px,#eef3f9 52px 56px,#c9d8ec 56px 60px,#dfe7f2 60px 64px,#c9d8ec 64px 68px,#eef3f9 68px 72px,#d3deee 72px 76px,#c9d8ec 76px 80px,#d3deee 80px 84px,#f4f6fa 84px 88px,#d3deee 88px 92px,#e6ecf5 92px 96px,#ffffff 96px 100px,#f4f6fa 100px 104px,#ffffff 104px 105px),linear-gradient(90deg,#b8cce6 0px 4px,#c0d0e8 4px 8px,#d5dfee 8px 12px,#8eb0da 12px 16px,#accae6 16px 20px,#accae6 20px 24px,#9fbde0 24px 28px,#8eb0da 28px 32px,#accae6 32px 36px,#c6d5ea 36px 40px,#9fbde0 40px 44px,#c6d5ea 44px 48px,#9fbde0 48px 52px,#a3b9dd 52px 56px,#c0d0e8 56px 60px,#c6d5ea 60px 64px,#accae6 64px 68px,#b8cce6 68px 72px,#c6d5ea 72px 76px,#c6d5ea 76px 80px,#9fbde0 80px 84px,#8eb0da 84px 88px,#9fbde0 88px 92px,#b8cce6 92px 96px,#b8cce6 96px 100px,#d5dfee 100px 104px,#8eb0da 104px 105px),linear-gradient(90deg,#9fbde0 0px 4px,#c6d5ea 4px 8px,#accae6 8px 12px,#9fbde0 12px 16px,#d5dfee 16px 20px,#9fbde0 20px 24px,#c6d5ea 24px 28px,#d5dfee 28px 32px,#d5dfee 32px 36px,#9fbde0 36px 40px,#c0d0e8 40px 44px,#a3b9dd 44px 48px,#d5dfee 48px 52px,#8eb0da 52px 56px,#9fbde0 56px 60px,#a3b9dd 60px 64px,#9fbde0 64px 68px,#b8cce6 68px 72px,#d5dfee 72px 76px,#c0d0e8 76px 80px,#a3b9dd 80px 84px,#accae6 84px 88px,#c0d0e8 88px 92px,#9fbde0 92px 96px,#9fbde0 96px 100px,#d5dfee 100px 104px,#d5dfee 104px 105px),linear-gradient(90deg,#dfe7f2 0px 4px,#f4f6fa 4px 8px,#c9d8ec 8px 12px,#ffffff 12px 16px,#ffffff 16px 20px,#e6ecf5 20px 24px,#d3deee 24px 28px,#eef3f9 28px 32px,#dfe7f2 32px 36px,#dfe7f2 36px 40px,#eef3f9 40px 44px,#eef3f9 44px 48px,#eef3f9 48px 52px,#c9d8ec 52px 56px,#e6ecf5 56px 60px,#e6ecf5 60px 64px,#dfe7f2 64px 68px,#d3deee 68px 72px,#e6ecf5 72px 76px,#d3deee 76px 80px,#f4f6fa 80px 84px,#d3deee 84px 88px,#c9d8ec 88px 92px,#ffffff 92px 96px,#c9d8ec 96px 100px,#e6ecf5 100px 104px,#c9d8ec 104px 105px);background-size:100% 4px;background-position:0 0,0 4px,0 8px,0 12px;background-repeat:no-repeat"></span>有限公司</div></div>
<div class="cell b" style="left:377px;width:210px;"><div class="ci"><span class="blur" style="width:145px;background:linear-gradient(90deg,#eef3f9 0px 4px,#ffffff 4px 8px,#c9d8ec 8px 12px,#c9d8ec 12px 16px,#d3deee 16px 20px,#eef3f9 20px 24px,#ffffff 24px 28px,#c9d8ec 28px 32px,#d3deee 32px 36px,#e6ecf5 36px 40px,#ffffff 40px 44px,#f4f6fa 44px 48px,#e6ecf5 48px 52px,#dfe7f2 52px 56px,#e6ecf5 56px 60px,#ffffff 60px 64px,#d3deee 64px 68px,#ffffff 68px 72px,#e6ecf5 72px 76px,#c9d8ec 76px 80px,#ffffff 80px 84px,#f4f6fa 84px 88px,#c9d8ec 88px 92px,#d3deee 92px 96px,#d3deee 96px 100px,#c9d8ec 100px 104px,#c9d8ec 104px 108px,#d3deee 108px 112px,#eef3f9 112px 116px,#d3deee 116px 120px,#dfe7f2 120px 124px,#c9d8ec 124px 128px,#f4f6fa 128px 132px,#dfe7f2 132px 136px,#ffffff 136px 140px,#e6ecf5 140px 144px,#e6ecf5 144px 145px),linear-gradient(90deg,#d5dfee 0px 4px,#8eb0da 4px 8px,#c6d5ea 8px 12px,#a3b9dd 12px 16px,#b8cce6 16px 20px,#9fbde0 20px 24px,#8eb0da 24px 28px,#b8cce6 28px 32px,#9fbde0 32px 36px,#c6d5ea 36px 40px,#8eb0da 40px 44px,#accae6 44px 48px,#d5dfee 48px 52px,#8eb0da 52px 56px,#8eb0da 56px 60px,#8eb0da 60px 64px,#9fbde0 64px 68px,#d5dfee 68px 72px,#c6d5ea 72px 76px,#c0d0e8 76px 80px,#c0d0e8 80px 84px,#c6d5ea 84px 88px,#d5dfee 88px 92px,#a3b9dd 92px 96px,#c0d0e8 96px 100px,#c6d5ea 100px 104px,#d5dfee 104px 108px,#9fbde0 108px 112px,#b8cce6 112px 116px,#9fbde0 116px 120px,#b8cce6 120px 124px,#a3b9dd 124px 128px,#d5dfee 128px 132px,#9fbde0 132px 136px,#c6d5ea 136px 140px,#a3b9dd 140px 144px,#a3b9dd 144px 145px),linear-gradient(90deg,#a3b9dd 0px 4px,#c6d5ea 4px 8px,#9fbde0 8px 12px,#accae6 12px 16px,#9fbde0 16px 20px,#accae6 20px 24px,#a3b9dd 24px 28px,#c6d5ea 28px 32px,#c6d5ea 32px 36px,#d5dfee 36px 40px,#c6d5ea 40px 44px,#d5dfee 44px 48px,#a3b9dd 48px 52px,#accae6 52px 56px,#accae6 56px 60px,#c0d0e8 60px 64px,#c6d5ea 64px 68px,#8eb0da 68px 72px,#c0d0e8 72px 76px,#accae6 76px 80px,#8eb0da 80px 84px,#accae6 84px 88px,#accae6 88px 92px,#b8cce6 92px 96px,#d5dfee 96px 100px,#9fbde0 100px 104px,#c0d0e8 104px 108px,#c6d5ea 108px 112px,#8eb0da 112px 116px,#d5dfee 116px 120px,#c0d0e8 120px 124px,#c6d5ea 124px 128px,#9fbde0 128px 132px,#c6d5ea 132px 136px,#d5dfee 136px 140px,#9fbde0 140px 144px,#c0d0e8 144px 145px),linear-gradient(90deg,#eef3f9 0px 4px,#f4f6fa 4px 8px,#e6ecf5 8px 12px,#eef3f9 12px 16px,#d3deee 16px 20px,#ffffff 20px 24px,#dfe7f2 24px 28px,#e6ecf5 28px 32px,#dfe7f2 32px 36px,#eef3f9 36px 40px,#dfe7f2 40px 44px,#eef3f9 44px 48px,#d3deee 48px 52px,#eef3f9 52px 56px,#c9d8ec 56px 60px,#ffffff 60px 64px,#d3deee 64px 68px,#dfe7f2 68px 72px,#e6ecf5 72px 76px,#eef3f9 76px 80px,#f4f6fa 80px 84px,#ffffff 84px 88px,#f4f6fa 88px 92px,#dfe7f2 92px 96px,#f4f6fa 96px 100px,#d3deee 100px 104px,#ffffff 104px 108px,#ffffff 108px 112px,#ffffff 112px 116px,#f4f6fa 116px 120px,#d3deee 120px 124px,#dfe7f2 124px 128px,#c9d8ec 128px 132px,#eef3f9 132px 136px,#eef3f9 136px 140px,#e6ecf5 140px 144px,#ffffff 144px 145px);background-size:100% 4px;background-position:0 0,0 4px,0 8px,0 12px;background-repeat:no-repeat"></span>道路工程</div></div>
<div class="cell" style="left:587px;width:112px;"><div class="ci">雨水管护管</div></div>
<div class="cell" style="left:699px;width:84px;"><div class="ci">C20</div></div>
<div class="cell" style="left:783px;width:84px;"><div class="ci">挖机</div></div>
<div class="cell" style="left:867px;width:84px;"><div class="ci"></div></div>
<div class="cell" style="left:951px;width:122px;text-align:left;padding-left:7px;letter-spacing:-0.25px"><div class="ci">2021-10-13 06</div></div>
</div>
<div class="a" style="left:39px;top:513px;width:1px;height:5px;background:#e5e5e5"></div>
<div class="a" style="left:124px;top:513px;width:1px;height:5px;background:#e5e5e5"></div>
<div class="a" style="left:208px;top:513px;width:1px;height:5px;background:#e5e5e5"></div>
<div class="a" style="left:376px;top:513px;width:1px;height:5px;background:#e5e5e5"></div>
<div class="a" style="left:586px;top:513px;width:1px;height:5px;background:#e5e5e5"></div>
<div class="a" style="left:698px;top:513px;width:1px;height:5px;background:#e5e5e5"></div>
<div class="a" style="left:782px;top:513px;width:1px;height:5px;background:#e5e5e5"></div>
<div class="a" style="left:866px;top:513px;width:1px;height:5px;background:#e5e5e5"></div>
<div class="a" style="left:950px;top:513px;width:1px;height:5px;background:#e5e5e5"></div>
</div>
<div class="a" style="left:1111px;top:198px;width:6px;height:508px;border-radius:3px;background:#ededed"></div>
<div class="a" style="left:1111px;top:225px;width:6px;height:62px;border-radius:3px;background:#b3b3b3"></div>
<div class="a" style="left:102px;top:716px;width:999px;height:6px;border-radius:3px;background:#ededed"></div>
<div class="a" style="left:102px;top:716px;width:779px;height:6px;border-radius:3px;background:#b3b3b3"></div>
<div class="a" style="left:61px;top:739px;font-size:13px;line-height:20px;color:#444">产线</div>
<div class="a" style="left:93px;top:734px;width:40px;height:28px;background:#fff;border:1px solid #ccd2d9;font-size:13px;line-height:26px;padding-left:5px;color:#222">1#<svg style="position:absolute;left:25px;top:10px" width="10" height="7" viewBox="0 0 10 7"><path d="M1 1 L5 5 L9 1" fill="none" stroke="#111" stroke-width="1.8"/></svg></div>
<div class="btn" style="left:139px;top:736px;width:62px;background:#2aa5de"><svg style="position:absolute;left:10px;top:7px" width="12" height="12" viewBox="0 0 12 12"><path d="M6 0.5 V11.5 M0.5 6 H11.5" stroke="#fff" stroke-width="3"/></svg><span style="position:absolute;left:26px;top:0">新增</span></div>
<div class="btn" style="left:207px;top:736px;width:62px;background:#2aa5de"><svg style="position:absolute;left:10px;top:7px" width="13" height="12" viewBox="0 0 13 12"><path d="M1 6 L4.8 9.8 L12 1.8" fill="none" stroke="#fff" stroke-width="2.8"/></svg><span style="position:absolute;left:26px;top:0">保存</span></div>
<div class="btn" style="left:275px;top:736px;width:62px;background:#f55456"><svg style="position:absolute;left:11px;top:7px" width="12" height="12" viewBox="0 0 12 12"><path d="M1.5 1.5 L10.5 10.5 M10.5 1.5 L1.5 10.5" stroke="#fff" stroke-width="3"/></svg><span style="position:absolute;left:26px;top:0">取消</span></div>
<div class="btn" style="left:343px;top:736px;width:62px;background:#f55456"><svg style="position:absolute;left:11px;top:7px" width="12" height="12" viewBox="0 0 12 12"><path d="M1.5 1.5 L10.5 10.5 M10.5 1.5 L1.5 10.5" stroke="#fff" stroke-width="3"/></svg><span style="position:absolute;left:26px;top:0">删除</span></div>
<div class="btn" style="left:801px;top:736px;width:88px;background:#2aa5de"><svg style="position:absolute;left:9px;top:6px" width="14" height="14" viewBox="0 0 14 14"><path d="M4 9.5 L10 3 A2 2 0 0 1 12.8 5.8 L6 12.6 A3.3 3.3 0 0 1 1.3 8 L8 1.3" fill="none" stroke="#fff" stroke-width="1.6"/></svg><span style="position:absolute;left:26px;top:0">理论配方</span></div>
<div class="btn" style="left:895px;top:736px;width:88px;background:#2aa5de"><svg style="position:absolute;left:9px;top:6px" width="14" height="14" viewBox="0 0 14 14"><path d="M4 9.5 L10 3 A2 2 0 0 1 12.8 5.8 L6 12.6 A3.3 3.3 0 0 1 1.3 8 L8 1.3" fill="none" stroke="#fff" stroke-width="1.6"/></svg><span style="position:absolute;left:26px;top:0">上次配方</span></div>
<div class="btn" style="left:989px;top:736px;width:62px;background:#27ae6a"><svg style="position:absolute;left:8px;top:6px" width="15" height="14" viewBox="0 0 15 14"><path d="M14.5 0.5 L0.5 6.5 L5.5 8 L7 13.5 Z" fill="#fff"/><path d="M14.5 0.5 L5.5 8" stroke="#26a86b" stroke-width="1"/></svg><span style="position:absolute;left:26px;top:0">发送</span></div>
<div class="btn" style="left:1057px;top:736px;width:62px;background:#27ae6a"><svg style="position:absolute;left:8px;top:6px" width="14" height="14" viewBox="0 0 14 14"><path d="M12 7 A5 5 0 1 1 9.5 2.7" fill="none" stroke="#fff" stroke-width="2.2"/><path d="M8 0.3 L13.2 0.8 L11.5 5.5 Z" fill="#fff"/></svg><span style="position:absolute;left:26px;top:0">刷新</span></div>
<div class="a" style="left:58px;top:767px;width:1064px;height:300px;background:#fff"></div>
<div class="a" style="left:58px;top:767px;width:1064px;height:99px;overflow:hidden">
<div class="cell" style="left:0px;width:54px;height:37px;background:#f8fafa;border-bottom:1px solid #e5e5e5;line-height:37px;color:#555;padding:0 16px 0 0"><span style="position:absolute;left:19px;top:11px;width:15px;height:15px;border:1px solid #888;background:#fff;border-radius:1px"></span></div>
<div class="cell" style="left:54px;width:92px;height:37px;background:#f8fafa;border-bottom:1px solid #e5e5e5;line-height:37px;color:#555;padding:0 16px 0 0">操作</div>
<div class="cell" style="left:146px;width:91px;height:37px;background:#f8fafa;border-bottom:1px solid #e5e5e5;line-height:37px;color:#555;padding:0 16px 0 0">生产线</div>
<div class="cell" style="left:237px;width:123px;height:37px;background:#f8fafa;border-bottom:1px solid #e5e5e5;line-height:37px;color:#555;padding:0 16px 0 0">生产线单盘方量</div>
<div class="cell" style="left:360px;width:153px;height:37px;background:#f8fafa;border-bottom:1px solid #e5e5e5;line-height:37px;color:#555;padding:0 16px 0 0">配方版本号</div>
<div class="cell" style="left:513px;width:123px;height:37px;background:#f8fafa;border-bottom:1px solid #e5e5e5;line-height:37px;color:#555;padding:0 16px 0 0">理论配方编码</div>
<div class="cell" style="left:636px;width:122px;height:37px;background:#f8fafa;border-bottom:1px solid #e5e5e5;line-height:37px;color:#555;padding:0 16px 0 0">理论配方名称</div>
<div class="cell" style="left:758px;width:77px;height:37px;background:#f8fafa;border-bottom:1px solid #e5e5e5;line-height:37px;color:#555;padding:0 16px 0 0">掺量</div>
<div class="cell" style="left:835px;width:76px;height:37px;background:#f8fafa;border-bottom:1px solid #e5e5e5;line-height:37px;color:#555;padding:0 8px 0 0">配比容重</div>
<div class="cell" style="left:911px;width:77px;height:37px;background:#f8fafa;border-bottom:1px solid #e5e5e5;line-height:37px;color:#555;padding:0 8px 0 0">配比砂率</div>
<div class="cell" style="left:988px;width:77px;height:37px;background:#f8fafa;border-bottom:1px solid #e5e5e5;line-height:37px;color:#555;padding:0 16px 0 0">水胶比</div>
<div class="row" style="top:37px;width:1064px;height:31px;background:#4bb14a;border-bottom:1px solid #dfe9df;line-height:32px;color:#333">
<div class="cell" style="left:0px;width:54px;border-right:1px solid #e9efe9;"><span style="position:absolute;left:19px;top:6px;width:15px;height:15px;border:1px solid #999;background:#fff;border-radius:1px"></span></div>
<div class="cell" style="left:54px;width:92px;border-right:1px solid #e9efe9;padding-right:12px"><span style="color:#2f72b5">修改 撤销</span></div>
<div class="cell" style="left:146px;width:91px;border-right:1px solid #e9efe9;">1#</div>
<div class="cell" style="left:237px;width:123px;border-right:1px solid #e9efe9;">4.0</div>
<div class="cell" style="left:360px;width:153px;border-right:1px solid #e9efe9;">T211001131#0004</div>
<div class="cell" style="left:513px;width:123px;border-right:1px solid #e9efe9;">EXP21080022</div>
<div class="cell" style="left:636px;width:122px;border-right:1px solid #e9efe9;">C25道路</div>
<div class="cell" style="left:758px;width:77px;border-right:1px solid #e9efe9;">0.031</div>
<div class="cell" style="left:835px;width:76px;border-right:1px solid #e9efe9;">2364.3</div>
<div class="cell" style="left:911px;width:77px;border-right:1px solid #e9efe9;">45.79</div>
<div class="cell" style="left:988px;width:77px;border-right:1px solid #e9efe9;">0.52</div>
</div>
<div class="row" style="top:68px;width:1064px;height:31px;background:#4bb14a;border-bottom:1px solid #dfe9df;line-height:32px;color:#333">
<div class="cell" style="left:0px;width:54px;border-right:1px solid #e9efe9;"><span style="position:absolute;left:19px;top:6px;width:15px;height:15px;border:1px solid #999;background:#fff;border-radius:1px"></span></div>
<div class="cell" style="left:54px;width:92px;border-right:1px solid #e9efe9;padding-right:12px"><span style="color:#2f72b5">修改 撤销</span></div>
<div class="cell" style="left:146px;width:91px;border-right:1px solid #e9efe9;">2#</div>
<div class="cell" style="left:237px;width:123px;border-right:1px solid #e9efe9;">4.0</div>
<div class="cell" style="left:360px;width:153px;border-right:1px solid #e9efe9;">T211001132#0001</div>
<div class="cell" style="left:513px;width:123px;border-right:1px solid #e9efe9;">EXP21080022</div>
<div class="cell" style="left:636px;width:122px;border-right:1px solid #e9efe9;">C25道路</div>
<div class="cell" style="left:758px;width:77px;border-right:1px solid #e9efe9;">0.031</div>
<div class="cell" style="left:835px;width:76px;border-right:1px solid #e9efe9;">2364.3</div>
<div class="cell" style="left:911px;width:77px;border-right:1px solid #e9efe9;">45.79</div>
<div class="cell" style="left:988px;width:77px;border-right:1px solid #e9efe9;">0.52</div>
</div>
</div>
<div class="a" style="left:1138px;top:88px;width:768px;height:980px;background:#fff;border:1px solid #e4e6ea;border-radius:0 0 8px 8px"></div>
<div class="a" style="left:1166px;top:103px;font-size:14px;line-height:22px;color:#333">混凝土配方</div>
<div class="a" style="left:1277px;top:103px;font-size:14px;line-height:22px;color:#999">润管砂浆配方</div>
<div class="a" style="left:1158px;top:133px;width:86px;height:3px;background:#1f74c0"></div>
<div class="a" style="left:1139px;top:137px;width:765px;height:1px;background:#e8e8e8"></div>
<div class="lbl" style="left:1108px;top:165px;width:120px">配比编码</div>
<div class="a" style="left:1236px;top:164px;font-size:11.2px;line-height:20px;color:#222">EXP21080022</div>
<div class="btn" style="left:1314px;top:162px;width:59px;background:#2aa5de"><svg style="position:absolute;left:11px;top:6px" width="12" height="14" viewBox="0 0 12 14"><path d="M3.5 8 V2 A1.3 1.3 0 0 1 6.1 2 V5.5 L9.5 6.3 Q11 6.8 10.7 8.3 L10 11.5 H4.3 L1.3 8.5 Q1 7.6 2 7.4 Z" fill="none" stroke="#fff" stroke-width="1.2"/><rect x="3.5" y="12.5" width="7" height="1.3" fill="#fff"/></svg><span style="position:absolute;left:25px;top:1px">选择</span></div>
<div class="lbl" style="left:1108px;top:208px;width:120px">配方类型</div>
<div class="inp" style="left:1236px;top:203px;width:129px;"><span style="display:block;overflow:hidden">混凝土</span></div>
<svg class="a" style="left:1349px;top:213px" width="10" height="7" viewBox="0 0 10 7"><path d="M1 1 L5 5 L9 1" fill="none" stroke="#333" stroke-width="1.8"/></svg>
<div class="lbl" style="left:1108px;top:248px;width:120px">石子规格</div>
<div class="inp" style="left:1236px;top:243px;width:83px;"><span style="display:block;overflow:hidden"></span></div>
<div class="btn" style="left:1319px;top:244px;width:46px;height:26px;background:#84b1dd;line-height:26px">选择</div>
<div class="lbl" style="left:1108px;top:288px;width:120px">单盘方量</div>
<div class="inp" style="left:1236px;top:283px;width:129px;"><span style="display:block;overflow:hidden">4.0000</span></div>
<div class="lbl" style="left:1108px;top:328px;width:120px">配比容重</div>
<div class="inp" style="left:1236px;top:323px;width:129px;"><span style="display:block;overflow:hidden">2352.3</span></div>
<div class="lbl" style="left:1355px;top:161px;width:120px">配比名称</div>
<div class="inp" style="left:1482px;top:157px;width:130px;"><span style="display:block;overflow:hidden">C25道路-T211001131</span></div>
<div class="lbl" style="left:1355px;top:208px;width:120px">塌落度</div>
<div class="inp" style="left:1482px;top:203px;width:130px;"><span style="display:block;overflow:hidden">160±20mm</span></div>
<div class="lbl" style="left:1355px;top:248px;width:120px">配比用途</div>
<div class="inp" style="left:1482px;top:243px;width:130px;"><span style="display:block;overflow:hidden"></span></div>
<div class="lbl" style="left:1355px;top:288px;width:120px">状态</div>
<div class="inp" style="left:1482px;top:283px;width:130px;background:#4bb04a;border-color:#e2e2e2;color:#5f6b5f"><span style="display:block;overflow:hidden">传送成功</span></div>
<svg class="a" style="left:1594px;top:294px" width="10" height="7" viewBox="0 0 10 7"><path d="M1 1 L5 5 L9 1" fill="none" stroke="#444" stroke-width="1.8"/></svg>
<div class="lbl" style="left:1355px;top:328px;width:120px">配比砂率</div>
<div class="inp" style="left:1482px;top:323px;width:118px;"><span style="display:block;overflow:hidden">46.03</span></div>
<div class="a" style="left:1601px;top:329px;font-size:10.5px;line-height:16px;color:#333">%<span style="color:#bbb">.</span></div>
<div class="lbl" style="left:1586px;top:161px;width:120px">强度等级</div>
<div class="inp" style="left:1714px;top:157px;width:129px;"><span style="display:block;overflow:hidden">请选择</span></div>
<svg class="a" style="left:1826px;top:167px" width="10" height="7" viewBox="0 0 10 7"><path d="M1 1 L5 5 L9 1" fill="none" stroke="#333" stroke-width="1.8"/></svg>
<div class="lbl" style="left:1586px;top:208px;width:120px">搅拌时间</div>
<div class="inp" style="left:1714px;top:203px;width:129px;"><span style="display:block;overflow:hidden">30</span></div>
<div class="lbl" style="left:1586px;top:248px;width:120px">配比备注</div>
<div class="inp" style="left:1714px;top:243px;width:129px;"><span style="display:block;overflow:hidden"></span></div>
<svg class="a" style="left:1832px;top:260px" width="9" height="9" viewBox="0 0 9 9"><path d="M1 8.5 L8.5 1 M5 8.5 L8.5 5" stroke="#888" stroke-width="1"/></svg>
<div class="lbl" style="left:1586px;top:288px;width:120px">掺量</div>
<div class="inp" style="left:1714px;top:283px;width:117px;"><span style="display:block;overflow:hidden">0.02</span></div>
<div class="a" style="left:1832px;top:289px;font-size:10.5px;line-height:16px;color:#333">%<span style="color:#bbb">.</span></div>
<div class="lbl" style="left:1586px;top:328px;width:120px">配比水胶比</div>
<div class="inp" style="left:1714px;top:323px;width:117px;"><span style="display:block;overflow:hidden">0.52</span></div>
<div class="a" style="left:1832px;top:329px;font-size:10.5px;line-height:16px;color:#333">%<span style="color:#bbb">.</span></div>
<div class="a" style="left:1140px;top:371px;width:750px;height:695px;overflow:hidden">
<div class="cell" style="left:0px;width:38px;height:36px;background:#f8fafa;border-bottom:1px solid #e5e5e5;line-height:36px;color:#555;padding:0 7px 0 7px;text-align:left"><div class="ci">序号</div></div>
<div class="cell" style="left:38px;width:116px;height:36px;background:#f8fafa;border-bottom:1px solid #e5e5e5;line-height:36px;color:#555;padding:0 16px 0 0"><div class="ci">料仓名</div></div>
<div class="cell" style="left:154px;width:116px;height:36px;background:#f8fafa;border-bottom:1px solid #e5e5e5;line-height:36px;color:#555;padding:0 16px 0 0"><div class="ci">料仓类别</div></div>
<div class="cell" style="left:270px;width:117px;height:36px;background:#f8fafa;border-bottom:1px solid #e5e5e5;line-height:36px;color:#555;padding:0 16px 0 0"><div class="ci">料仓编码</div></div>
<div class="cell" style="left:387px;width:116px;height:36px;background:#f8fafa;border-bottom:1px solid #e5e5e5;line-height:36px;color:#555;padding:0 16px 0 0"><div class="ci">物料名称</div></div>
<div class="cell" style="left:503px;width:77px;height:36px;background:#f8fafa;border-bottom:1px solid #e5e5e5;line-height:36px;color:#555;padding:0 16px 0 0"><div class="ci">理论用量</div></div>
<div class="cell" style="left:580px;width:78px;height:36px;background:#f8fafa;border-bottom:1px solid #e5e5e5;line-height:36px;color:#555;padding:0 16px 0 0"><div class="ci">用量</div></div>
<div class="cell" style="left:658px;width:93px;height:36px;background:#f8fafa;border-bottom:1px solid #e5e5e5;line-height:36px;color:#555;padding:0 16px 0 0"><div class="ci">料仓状态</div></div>
<div class="row" style="top:36px;width:750px;height:31px;background:#eef1f6;line-height:32px">
<div class="cell" style="left:0px;width:38px;padding:0">1</div>
<div class="cell" style="left:38px;width:116px;padding:0"><b>1#水泥</b></div>
<div class="cell" style="left:154px;width:116px;padding:0">水泥材料</div>
<div class="cell" style="left:270px;width:117px;padding:0">SN001</div>
<div class="cell" style="left:387px;width:116px;padding:0 6px 0 0"><span class="b">1#水泥</span></div>
<div class="cell" style="left:503px;width:77px;padding:0">250</div>
<div class="cell" style="left:580px;width:78px;padding:0"><b>250</b></div>
<div class="cell" style="left:658px;width:93px;padding:0">启用</div>
</div>
<div class="row" style="top:67px;width:750px;height:31px;background:#fff;line-height:32px">
<div class="cell" style="left:0px;width:38px;padding:0">2</div>
<div class="cell" style="left:38px;width:116px;padding:0"><b>2#水泥</b></div>
<div class="cell" style="left:154px;width:116px;padding:0">水泥材料</div>
<div class="cell" style="left:270px;width:117px;padding:0">SN002</div>
<div class="cell" style="left:387px;width:116px;padding:0 6px 0 0"><span class="b">2#水泥</span></div>
<div class="cell" style="left:503px;width:77px;padding:0">0</div>
<div class="cell" style="left:580px;width:78px;padding:0"><b>0</b></div>
<div class="cell" style="left:658px;width:93px;padding:0">启用</div>
</div>
<div class="row" style="top:98px;width:750px;height:31px;background:#f5f8f8;line-height:32px">
<div class="cell" style="left:0px;width:38px;padding:0">3</div>
<div class="cell" style="left:38px;width:116px;padding:0"><b>粉煤灰</b></div>
<div class="cell" style="left:154px;width:116px;padding:0">粉体外加剂</div>
<div class="cell" style="left:270px;width:117px;padding:0">FMH001</div>
<div class="cell" style="left:387px;width:116px;padding:0 6px 0 0"><span class="b">粉煤灰</span></div>
<div class="cell" style="left:503px;width:77px;padding:0">50</div>
<div class="cell" style="left:580px;width:78px;padding:0"><b>50</b></div>
<div class="cell" style="left:658px;width:93px;padding:0">启用</div>
</div>
<div class="row" style="top:129px;width:750px;height:31px;background:#fff;line-height:32px">
<div class="cell" style="left:0px;width:38px;padding:0">4</div>
<div class="cell" style="left:38px;width:116px;padding:0"><b>矿粉</b></div>
<div class="cell" style="left:154px;width:116px;padding:0">粉体外加剂</div>
<div class="cell" style="left:270px;width:117px;padding:0">KF001</div>
<div class="cell" style="left:387px;width:116px;padding:0 6px 0 0"><span class="b">矿粉</span></div>
<div class="cell" style="left:503px;width:77px;padding:0">0</div>
<div class="cell" style="left:580px;width:78px;padding:0"><b>0</b></div>
<div class="cell" style="left:658px;width:93px;padding:0">启用</div>
</div>
<div class="row" style="top:160px;width:750px;height:31px;background:#f5f8f8;line-height:32px">
<div class="cell" style="left:0px;width:38px;padding:0">5</div>
<div class="cell" style="left:38px;width:116px;padding:0"><b>1#卵石</b></div>
<div class="cell" style="left:154px;width:116px;padding:0">粗骨料</div>
<div class="cell" style="left:270px;width:117px;padding:0">SHI001</div>
<div class="cell" style="left:387px;width:116px;padding:0 6px 0 0"><span class="b">1#卵石</span></div>
<div class="cell" style="left:503px;width:77px;padding:0">1030</div>
<div class="cell" style="left:580px;width:78px;padding:0;background:#e6edd9"><b>1020</b></div>
<div class="cell" style="left:658px;width:93px;padding:0">启用</div>
</div>
<div class="row" style="top:191px;width:750px;height:31px;background:#fff;line-height:32px">
<div class="cell" style="left:0px;width:38px;padding:0">6</div>
<div class="cell" style="left:38px;width:116px;padding:0"><b>2#卵石</b></div>
<div class="cell" style="left:154px;width:116px;padding:0">粗骨料</div>
<div class="cell" style="left:270px;width:117px;padding:0">SHI002</div>
<div class="cell" style="left:387px;width:116px;padding:0 6px 0 0"><span class="b">2#卵石</span></div>
<div class="cell" style="left:503px;width:77px;padding:0">0</div>
<div class="cell" style="left:580px;width:78px;padding:0"><b>0</b></div>
<div class="cell" style="left:658px;width:93px;padding:0">启用</div>
</div>
<div class="row" style="top:222px;width:750px;height:31px;background:#f5f8f8;line-height:32px">
<div class="cell" style="left:0px;width:38px;padding:0">7</div>
<div class="cell" style="left:38px;width:116px;padding:0"><b>3#机制砂</b></div>
<div class="cell" style="left:154px;width:116px;padding:0">细骨料</div>
<div class="cell" style="left:270px;width:117px;padding:0">SHA001</div>
<div class="cell" style="left:387px;width:116px;padding:0 6px 0 0"><span class="b">3#机制砂</span></div>
<div class="cell" style="left:503px;width:77px;padding:0">870</div>
<div class="cell" style="left:580px;width:78px;padding:0;background:#e6edd9"><b>650</b></div>
<div class="cell" style="left:658px;width:93px;padding:0">启用</div>
</div>
<div class="row" style="top:253px;width:750px;height:31px;background:#fff;line-height:32px">
<div class="cell" style="left:0px;width:38px;padding:0">8</div>
<div class="cell" style="left:38px;width:116px;padding:0"><b>4#机制砂</b></div>
<div class="cell" style="left:154px;width:116px;padding:0">细骨料</div>
<div class="cell" style="left:270px;width:117px;padding:0">SHA002</div>
<div class="cell" style="left:387px;width:116px;padding:0 6px 0 0"><span class="b">4#机制砂</span></div>
<div class="cell" style="left:503px;width:77px;padding:0">0</div>
<div class="cell" style="left:580px;width:78px;padding:0"><b>0</b></div>
<div class="cell" style="left:658px;width:93px;padding:0">启用</div>
</div>
<div class="row" style="top:284px;width:750px;height:31px;background:#f5f8f8;line-height:32px">
<div class="cell" style="left:0px;width:38px;padding:0">9</div>
<div class="cell" style="left:38px;width:116px;padding:0"><b>5#普通碎石</b></div>
<div class="cell" style="left:154px;width:116px;padding:0">粗骨料</div>
<div class="cell" style="left:270px;width:117px;padding:0">SHI003</div>
<div class="cell" style="left:387px;width:116px;padding:0 6px 0 0"><span class="b">5#普通碎石</span></div>
<div class="cell" style="left:503px;width:77px;padding:0">0</div>
<div class="cell" style="left:580px;width:78px;padding:0"><b>0</b></div>
<div class="cell" style="left:658px;width:93px;padding:0">启用</div>
</div>
<div class="row" style="top:315px;width:750px;height:31px;background:#fff;line-height:32px">
<div class="cell" style="left:0px;width:38px;padding:0">10</div>
<div class="cell" style="left:38px;width:116px;padding:0"><b>6#普通碎石</b></div>
<div class="cell" style="left:154px;width:116px;padding:0">粗骨料</div>
<div class="cell" style="left:270px;width:117px;padding:0">SHI004</div>
<div class="cell" style="left:387px;width:116px;padding:0 6px 0 0"><span class="b">6#普通碎石</span></div>
<div class="cell" style="left:503px;width:77px;padding:0">0</div>
<div class="cell" style="left:580px;width:78px;padding:0"><b>0</b></div>
<div class="cell" style="left:658px;width:93px;padding:0">启用</div>
</div>
<div class="row" style="top:346px;width:750px;height:31px;background:#f5f8f8;line-height:32px">
<div class="cell" style="left:0px;width:38px;padding:0">11</div>
<div class="cell" style="left:38px;width:116px;padding:0"><b>7#细砂</b></div>
<div class="cell" style="left:154px;width:116px;padding:0">细骨料</div>
<div class="cell" style="left:270px;width:117px;padding:0">SHA003</div>
<div class="cell" style="left:387px;width:116px;padding:0 6px 0 0"><span class="b">7#细砂</span></div>
<div class="cell" style="left:503px;width:77px;padding:0">0</div>
<div class="cell" style="left:580px;width:78px;padding:0;background:#e6edd9"><b>220</b></div>
<div class="cell" style="left:658px;width:93px;padding:0">启用</div>
</div>
<div class="row" style="top:377px;width:750px;height:31px;background:#fff;line-height:32px">
<div class="cell" style="left:0px;width:38px;padding:0">12</div>
<div class="cell" style="left:38px;width:116px;padding:0"><b>8#细砂</b></div>
<div class="cell" style="left:154px;width:116px;padding:0">细骨料</div>
<div class="cell" style="left:270px;width:117px;padding:0">SHA004</div>
<div class="cell" style="left:387px;width:116px;padding:0 6px 0 0"><span class="b">8#细砂</span></div>
<div class="cell" style="left:503px;width:77px;padding:0">0</div>
<div class="cell" style="left:580px;width:78px;padding:0"><b>0</b></div>
<div class="cell" style="left:658px;width:93px;padding:0">启用</div>
</div>
<div class="row" style="top:408px;width:750px;height:31px;background:#f5f8f8;line-height:32px">
<div class="cell" style="left:0px;width:38px;padding:0">13</div>
<div class="cell" style="left:38px;width:116px;padding:0"><b>9#高标碎石</b></div>
<div class="cell" style="left:154px;width:116px;padding:0">粗骨料</div>
<div class="cell" style="left:270px;width:117px;padding:0">SHI005</div>
<div class="cell" style="left:387px;width:116px;padding:0 6px 0 0"><span class="b">9#高标碎石</span></div>
<div class="cell" style="left:503px;width:77px;padding:0">0</div>
<div class="cell" style="left:580px;width:78px;padding:0"><b>0</b></div>
<div class="cell" style="left:658px;width:93px;padding:0">启用</div>
</div>
<div class="row" style="top:439px;width:750px;height:31px;background:#fff;line-height:32px">
<div class="cell" style="left:0px;width:38px;padding:0">14</div>
<div class="cell" style="left:38px;width:116px;padding:0"><b>10#高标碎石</b></div>
<div class="cell" style="left:154px;width:116px;padding:0">粗骨料</div>
<div class="cell" style="left:270px;width:117px;padding:0">SHI006</div>
<div class="cell" style="left:387px;width:116px;padding:0 6px 0 0"><span class="b">10#高标碎石</span></div>
<div class="cell" style="left:503px;width:77px;padding:0">0</div>
<div class="cell" style="left:580px;width:78px;padding:0"><b>0</b></div>
<div class="cell" style="left:658px;width:93px;padding:0">启用</div>
</div>
<div class="row" style="top:470px;width:750px;height:31px;background:#f5f8f8;line-height:32px">
<div class="cell" style="left:0px;width:38px;padding:0">15</div>
<div class="cell" style="left:38px;width:116px;padding:0"><b>11#河砂</b></div>
<div class="cell" style="left:154px;width:116px;padding:0">细骨料</div>
<div class="cell" style="left:270px;width:117px;padding:0">SHA005</div>
<div class="cell" style="left:387px;width:116px;padding:0 6px 0 0"><span class="b">11#河砂</span></div>
<div class="cell" style="left:503px;width:77px;padding:0">0</div>
<div class="cell" style="left:580px;width:78px;padding:0"><b>0</b></div>
<div class="cell" style="left:658px;width:93px;padding:0">启用</div>
</div>
<div class="row" style="top:501px;width:750px;height:31px;background:#fff;line-height:32px">
<div class="cell" style="left:0px;width:38px;padding:0">16</div>
<div class="cell" style="left:38px;width:116px;padding:0"><b>12#河砂</b></div>
<div class="cell" style="left:154px;width:116px;padding:0">细骨料</div>
<div class="cell" style="left:270px;width:117px;padding:0">SHA006</div>
<div class="cell" style="left:387px;width:116px;padding:0 6px 0 0"><span class="b">12#河砂</span></div>
<div class="cell" style="left:503px;width:77px;padding:0">0</div>
<div class="cell" style="left:580px;width:78px;padding:0"><b>0</b></div>
<div class="cell" style="left:658px;width:93px;padding:0">启用</div>
</div>
<div class="row" style="top:532px;width:750px;height:31px;background:#f5f8f8;line-height:32px">
<div class="cell" style="left:0px;width:38px;padding:0">17</div>
<div class="cell" style="left:38px;width:116px;padding:0"><b>1#清水</b></div>
<div class="cell" style="left:154px;width:116px;padding:0">水</div>
<div class="cell" style="left:270px;width:117px;padding:0">SHUI001</div>
<div class="cell" style="left:387px;width:116px;padding:0 6px 0 0"><span class="b">1#清水</span></div>
<div class="cell" style="left:503px;width:77px;padding:0">155</div>
<div class="cell" style="left:580px;width:78px;padding:0;background:#e6edd9"><b>125</b></div>
<div class="cell" style="left:658px;width:93px;padding:0">启用</div>
</div>
<div class="row" style="top:563px;width:750px;height:31px;background:#fff;line-height:32px">
<div class="cell" style="left:0px;width:38px;padding:0">18</div>
<div class="cell" style="left:38px;width:116px;padding:0"><b>2#水</b></div>
<div class="cell" style="left:154px;width:116px;padding:0">水</div>
<div class="cell" style="left:270px;width:117px;padding:0">SHUI002</div>
<div class="cell" style="left:387px;width:116px;padding:0 6px 0 0"><span class="b">2#水</span></div>
<div class="cell" style="left:503px;width:77px;padding:0">0</div>
<div class="cell" style="left:580px;width:78px;padding:0;background:#e6edd9"><b>30</b></div>
<div class="cell" style="left:658px;width:93px;padding:0">启用</div>
</div>
<div class="row" style="top:594px;width:750px;height:31px;background:#f5f8f8;line-height:32px">
<div class="cell" style="left:0px;width:38px;padding:0">19</div>
<div class="cell" style="left:38px;width:116px;padding:0"><b>膨胀剂</b></div>
<div class="cell" style="left:154px;width:116px;padding:0">粉体外加剂</div>
<div class="cell" style="left:270px;width:117px;padding:0">FJJ001</div>
<div class="cell" style="left:387px;width:116px;padding:0 6px 0 0"><span class="b">膨胀剂</span></div>
<div class="cell" style="left:503px;width:77px;padding:0">0</div>
<div class="cell" style="left:580px;width:78px;padding:0"><b>0</b></div>
<div class="cell" style="left:658px;width:93px;padding:0">启用</div>
</div>
<div class="row" style="top:625px;width:750px;height:31px;background:#fff;line-height:32px">
<div class="cell" style="left:0px;width:38px;padding:0">20</div>
<div class="cell" style="left:38px;width:116px;padding:0"><b>普通减水剂</b></div>
<div class="cell" style="left:154px;width:116px;padding:0">液体外加剂</div>
<div class="cell" style="left:270px;width:117px;padding:0">TJJ001</div>
<div class="cell" style="left:387px;width:116px;padding:0 6px 0 0"><span class="b">普通减水剂</span></div>
<div class="cell" style="left:503px;width:77px;padding:0">7.5</div>
<div class="cell" style="left:580px;width:78px;padding:0;background:#e6edd9"><b>0</b></div>
<div class="cell" style="left:658px;width:93px;padding:0">启用</div>
</div>
<div class="row" style="top:656px;width:750px;height:31px;background:#f5f8f8;line-height:32px">
<div class="cell" style="left:0px;width:38px;padding:0">21</div>
<div class="cell" style="left:38px;width:116px;padding:0"><b>高标减水剂</b></div>
<div class="cell" style="left:154px;width:116px;padding:0">液体外加剂</div>
<div class="cell" style="left:270px;width:117px;padding:0">TJJ002</div>
<div class="cell" style="left:387px;width:116px;padding:0 6px 0 0"><span class="b">高标减水剂</span></div>
<div class="cell" style="left:503px;width:77px;padding:0">0</div>
<div class="cell" style="left:580px;width:78px;padding:0;background:#e6edd9"><b>5.5</b></div>
<div class="cell" style="left:658px;width:93px;padding:0">启用</div>
</div>
<div class="a" style="left:37px;top:686px;width:1px;height:9px;background:#e5e5e5"></div>
<div class="a" style="left:153px;top:686px;width:1px;height:9px;background:#e5e5e5"></div>
<div class="a" style="left:269px;top:686px;width:1px;height:9px;background:#e5e5e5"></div>
<div class="a" style="left:386px;top:686px;width:1px;height:9px;background:#e5e5e5"></div>
<div class="a" style="left:502px;top:686px;width:1px;height:9px;background:#e5e5e5"></div>
<div class="a" style="left:579px;top:686px;width:1px;height:9px;background:#e5e5e5"></div>
<div class="a" style="left:657px;top:686px;width:1px;height:9px;background:#e5e5e5"></div>
</div>
<div class="a" style="left:1895px;top:411px;width:6px;height:650px;border-radius:3px;background:#ededed"></div>
<div class="a" style="left:1895px;top:412px;width:6px;height:627px;border-radius:3px;background:#b3b3b3"></div>
</body></html>
